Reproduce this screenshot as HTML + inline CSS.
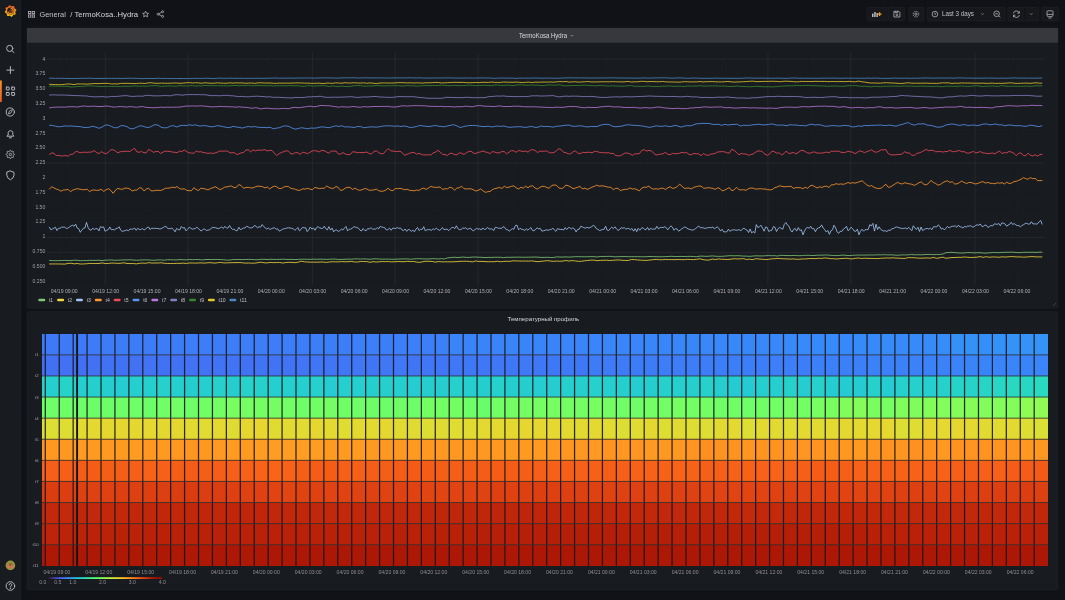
<!DOCTYPE html>
<html><head><meta charset="utf-8"><style>html,body{margin:0;padding:0;width:1065px;height:600px;overflow:hidden;background:#111217}</style></head><body><svg width="1065" height="600" viewBox="0 0 1065 600" style="position:absolute;left:0;top:0;display:block;will-change:transform" font-family='"Liberation Sans", sans-serif'><rect x="0" y="0" width="1065" height="600" fill="#111217"/><rect x="0" y="0" width="21" height="600" fill="#181b1f"/><rect x="19.6" y="0" width="1.4" height="600" fill="#1b1e22"/><path d="M15.88,11.00 L15.60,11.33 L15.37,11.63 L15.26,11.93 L15.27,12.25 L15.37,12.62 L15.51,13.03 L15.61,13.47 L15.61,13.89 L15.46,14.25 L15.18,14.51 L14.78,14.67 L14.34,14.74 L13.90,14.77 L13.53,14.82 L13.24,14.95 L13.02,15.18 L12.83,15.52 L12.63,15.91 L12.40,16.29 L12.10,16.59 L11.74,16.74 L11.35,16.72 L10.96,16.55 L10.60,16.28 L10.27,16.00 L9.97,15.77 L9.67,15.66 L9.35,15.67 L8.98,15.77 L8.57,15.91 L8.13,16.01 L7.71,16.01 L7.35,15.86 L7.09,15.58 L6.93,15.18 L6.86,14.74 L6.83,14.30 L6.78,13.93 L6.65,13.64 L6.42,13.42 L6.08,13.23 L5.69,13.03 L5.31,12.80 L5.01,12.50 L4.86,12.14 L4.88,11.75 L5.05,11.36 L5.32,11.00 L5.60,10.67 L5.83,10.37 L5.94,10.07 L5.93,9.75 L5.83,9.38 L5.69,8.97 L5.59,8.53 L5.59,8.11 L5.74,7.75 L6.02,7.49 L6.42,7.33 L6.86,7.26 L7.30,7.23 L7.67,7.18 L7.96,7.05 L8.18,6.82 L8.37,6.48 L8.57,6.09 L8.80,5.71 L9.10,5.41 L9.46,5.26 L9.85,5.28 L10.24,5.45 L10.60,5.72 L10.93,6.00 L11.23,6.23 L11.53,6.34 L11.85,6.33 L12.22,6.23 L12.63,6.09 L13.07,5.99 L13.49,5.99 L13.85,6.14 L14.11,6.42 L14.27,6.82 L14.34,7.26 L14.37,7.70 L14.42,8.07 L14.55,8.36 L14.78,8.58 L15.12,8.77 L15.51,8.97 L15.89,9.20 L16.19,9.50 L16.34,9.86 L16.32,10.25 L16.15,10.64 Z" fill="url(#lg)"/><circle cx="10.6" cy="11" r="3.5" fill="#1c1a1c"/><path d="M10.6,8.3 A2.7,2.7 0 1 1 7.9,11.6" stroke="#f28a24" stroke-width="1.2" fill="none"/><circle cx="10.8" cy="11.2" r="1.1" fill="none" stroke="#d8641e" stroke-width="0.7"/><g stroke="#b4b5bc" stroke-width="1" fill="none" stroke-linecap="round" stroke-linejoin="round"><circle cx="9.7" cy="48.4" r="3.1"/><line x1="12" y1="50.7" x2="14" y2="52.7"/><line x1="10.4" y1="66.6" x2="10.4" y2="73.6"/><line x1="6.9" y1="70.1" x2="13.9" y2="70.1"/><rect x="6.3" y="87.1" width="2.9" height="2.9" rx="0.3"/><rect x="11.7" y="87.1" width="2.9" height="2.9" rx="0.3"/><rect x="6.3" y="92.5" width="2.9" height="2.9" rx="0.3"/><rect x="11.7" y="92.5" width="2.9" height="2.9" rx="0.3"/><circle cx="10.3" cy="112" r="4.1"/><path d="M12.3,110 L11.1,112.8 L8.3,114 L9.5,111.2 Z" stroke-width="0.8"/><path d="M7.2,136.2 L13.8,136.2 L12.8,134.8 L12.8,132.2 A2.5,2.5 0 0 0 8.2,132.2 L8.2,134.8 Z"/><path d="M9.4,137.8 L11.4,137.8"/></g><path d="M14.50,154.40 L14.30,154.79 L13.83,155.10 L13.34,155.32 L13.07,155.55 L13.10,155.90 L13.29,156.40 L13.41,156.95 L13.27,157.37 L12.85,157.51 L12.30,157.39 L11.80,157.20 L11.45,157.17 L11.22,157.44 L11.00,157.93 L10.69,158.40 L10.30,158.60 L9.91,158.40 L9.60,157.93 L9.38,157.44 L9.15,157.17 L8.80,157.20 L8.30,157.39 L7.75,157.51 L7.33,157.37 L7.19,156.95 L7.31,156.40 L7.50,155.90 L7.53,155.55 L7.26,155.32 L6.77,155.10 L6.30,154.79 L6.10,154.40 L6.30,154.01 L6.77,153.70 L7.26,153.48 L7.53,153.25 L7.50,152.90 L7.31,152.40 L7.19,151.85 L7.33,151.43 L7.75,151.29 L8.30,151.41 L8.80,151.60 L9.15,151.63 L9.38,151.36 L9.60,150.87 L9.91,150.40 L10.30,150.20 L10.69,150.40 L11.00,150.87 L11.22,151.36 L11.45,151.63 L11.80,151.60 L12.30,151.41 L12.85,151.29 L13.27,151.43 L13.41,151.85 L13.29,152.40 L13.10,152.90 L13.07,153.25 L13.34,153.48 L13.83,153.70 L14.30,154.01 Z" stroke="#b4b5bc" stroke-width="0.9" fill="none"/><rect x="9.2" y="153.3" width="2.2" height="2.2" rx="0.6" stroke="#b4b5bc" stroke-width="0.8" fill="none"/><g stroke="#b4b5bc" stroke-width="1" fill="none" stroke-linecap="round" stroke-linejoin="round"><path d="M10.4,171 L14,172.4 L14,175.2 Q13.7,178.3 10.4,179.8 Q7.1,178.3 6.8,175.2 L6.8,172.4 Z"/><circle cx="10.4" cy="586" r="4.3"/><path d="M9.1,584.9 A1.35,1.35 0 1 1 10.7,586.2 L10.4,587"/><circle cx="10.4" cy="588.3" r="0.25"/></g><defs><linearGradient id="ag" x1="0" x2="0" y1="0" y2="1"><stop offset="0" stop-color="#f79520"/><stop offset="1" stop-color="#f05a28"/></linearGradient></defs><rect x="0" y="80.5" width="1.8" height="21.5" fill="url(#ag)"/><circle cx="10.4" cy="565.4" r="4.8" fill="#8d9a3a"/><circle cx="10.4" cy="565.6" r="3.4" fill="#c0744a"/><circle cx="10.4" cy="564.4" r="1.3" fill="#4e7a34"/><circle cx="8.4" cy="567" r="1.1" fill="#e27060"/><circle cx="12.4" cy="567" r="1.1" fill="#e27060"/><g stroke="#b4b5bc" stroke-width="0.8" fill="none"><rect x="28.4" y="11.4" width="2.4" height="2.3"/><rect x="32.2" y="11.4" width="2.4" height="2.3"/><rect x="28.4" y="14.9" width="2.4" height="2.3"/><rect x="32.2" y="14.9" width="2.4" height="2.3"/></g><text x="39.5" y="16.7" font-size="7.8" fill="#c0c1c8" textLength="26.3" lengthAdjust="spacingAndGlyphs">General</text><text x="70.3" y="16.7" font-size="7.8" fill="#d4d5dc" textLength="67.7" lengthAdjust="spacingAndGlyphs">/ TermoKosa..Hydra</text><path d="M145.6,11.3 L146.5,13.2 L148.6,13.4 L147.0,14.8 L147.5,16.8 L145.6,15.8 L143.7,16.8 L144.2,14.8 L142.6,13.4 L144.7,13.2 Z" stroke="#b4b5bc" stroke-width="0.8" fill="none"/><g stroke="#b4b5bc" stroke-width="0.8" fill="none"><circle cx="158.2" cy="14.2" r="1"/><circle cx="162.6" cy="11.7" r="1"/><circle cx="162.6" cy="16.4" r="1"/><line x1="159.1" y1="13.7" x2="161.7" y2="12.2"/><line x1="159.1" y1="14.7" x2="161.7" y2="15.9"/></g><rect x="867" y="7.3" width="20.200000000000045" height="13.599999999999998" rx="1" fill="#16181c" stroke="#24262c" stroke-width="0.5"/><rect x="888.6" y="7.3" width="16.0" height="13.599999999999998" rx="1" fill="#16181c" stroke="#24262c" stroke-width="0.5"/><rect x="908.8" y="7.3" width="15.0" height="13.599999999999998" rx="1" fill="#16181c" stroke="#24262c" stroke-width="0.5"/><rect x="927.4" y="7.3" width="77.80000000000007" height="13.599999999999998" rx="1" fill="#16181c" stroke="#24262c" stroke-width="0.5"/><rect x="1007.8" y="7.3" width="30.90000000000009" height="13.599999999999998" rx="1" fill="#16181c" stroke="#24262c" stroke-width="0.5"/><rect x="1042" y="7.3" width="16.40000000000009" height="13.599999999999998" rx="1" fill="#16181c" stroke="#24262c" stroke-width="0.5"/><g fill="#b8b9c0"><rect x="872" y="13.6" width="1.5" height="3.4"/><rect x="874.2" y="12" width="1.5" height="5"/><rect x="876.4" y="13" width="1.5" height="4"/></g><path d="M879.6,12.2 L879.6,16 M877.7,14.1 L881.5,14.1" stroke="#f59a23" stroke-width="1.2"/><g stroke="#b4b5bc" stroke-width="0.8" fill="none"><path d="M893.9,11.3 L898.8,11.3 L899.9,12.4 L899.9,17 L893.9,17 Z"/><circle cx="896.9" cy="14.9" r="0.9"/><path d="M895,11.3 L895,12.6 L897.8,12.6 L897.8,11.3"/></g><g stroke="#b4b5bc" stroke-width="0.8" fill="none"><circle cx="915.9" cy="14.2" r="1.1"/><circle cx="915.9" cy="14.2" r="2.8" stroke-dasharray="1.4 0.8"/></g><g stroke="#b4b5bc" stroke-width="0.8" fill="none"><circle cx="934.9" cy="14.1" r="2.8"/><path d="M934.9,12.6 L934.9,14.3 L935.9,14.3"/></g><text x="942" y="16.4" font-size="6.3" fill="#c0c1c8" textLength="31.9" lengthAdjust="spacingAndGlyphs">Last 3 days</text><path d="M981.2,13.4 L982.4,14.6 L983.6,13.4" stroke="#9fa0a8" stroke-width="0.7" fill="none"/><g stroke="#b4b5bc" stroke-width="0.8" fill="none"><circle cx="996.6" cy="13.8" r="2.8"/><line x1="998.6" y1="15.8" x2="1000.2" y2="17.4"/><line x1="995.2" y1="13.8" x2="998" y2="13.8"/></g><g stroke="#b4b5bc" stroke-width="0.8" fill="none"><path d="M1013.4,13.4 A3,3 0 0 1 1019.2,13"/><path d="M1019.4,15 A3,3 0 0 1 1013.6,15.4"/><path d="M1019.3,11.2 L1019.3,13.2 L1017.4,13.2"/><path d="M1013.5,17.2 L1013.5,15.2 L1015.4,15.2"/></g><line x1="1024.6" y1="7.5" x2="1024.6" y2="20.7" stroke="#111217" stroke-width="0.8"/><path d="M1030,13.4 L1031.2,14.6 L1032.4,13.4" stroke="#9fa0a8" stroke-width="0.7" fill="none"/><g stroke="#b4b5bc" stroke-width="0.8" fill="none"><path d="M1047,15.2 L1047,11.6 Q1047,10.8 1047.8,10.8 L1052.2,10.8 Q1053,10.8 1053,11.6 L1053,15.2 Q1053,16.6 1051.6,16.6 L1048.4,16.6 Q1047,16.6 1047,15.2 Z"/><line x1="1047.2" y1="14.4" x2="1052.8" y2="14.4"/><line x1="1048.4" y1="18" x2="1051.6" y2="18"/></g><rect x="27" y="28" width="1031" height="280.3" rx="1.2" fill="#181b1f" stroke="#202227" stroke-width="0.6"/><rect x="27" y="28" width="1031" height="14.7" fill="#37383d"/><text x="519" y="37.6" font-size="6.3" fill="#d8d9de" textLength="48" lengthAdjust="spacingAndGlyphs">TermoKosa Hydra</text><path d="M570.6,35 L571.9,36.3 L573.2,35" stroke="#a0a1a8" stroke-width="0.7" fill="none"/><line x1="47.0" y1="59.00" x2="1044.0" y2="59.00" stroke="#2a2c31" stroke-width="0.8"/><line x1="47.0" y1="73.88" x2="1044.0" y2="73.88" stroke="#1b1d22" stroke-width="0.8"/><line x1="47.0" y1="88.75" x2="1044.0" y2="88.75" stroke="#1b1d22" stroke-width="0.8"/><line x1="47.0" y1="103.62" x2="1044.0" y2="103.62" stroke="#1b1d22" stroke-width="0.8"/><line x1="47.0" y1="118.50" x2="1044.0" y2="118.50" stroke="#1b1d22" stroke-width="0.8"/><line x1="47.0" y1="133.38" x2="1044.0" y2="133.38" stroke="#1b1d22" stroke-width="0.8"/><line x1="47.0" y1="148.25" x2="1044.0" y2="148.25" stroke="#1b1d22" stroke-width="0.8"/><line x1="47.0" y1="163.12" x2="1044.0" y2="163.12" stroke="#2a2c31" stroke-width="0.8"/><line x1="47.0" y1="178.00" x2="1044.0" y2="178.00" stroke="#1b1d22" stroke-width="0.8"/><line x1="47.0" y1="192.88" x2="1044.0" y2="192.88" stroke="#1b1d22" stroke-width="0.8"/><line x1="47.0" y1="207.75" x2="1044.0" y2="207.75" stroke="#1b1d22" stroke-width="0.8"/><line x1="47.0" y1="222.62" x2="1044.0" y2="222.62" stroke="#1b1d22" stroke-width="0.8"/><line x1="47.0" y1="237.50" x2="1044.0" y2="237.50" stroke="#2a2c31" stroke-width="0.8"/><line x1="47.0" y1="252.38" x2="1044.0" y2="252.38" stroke="#2a2c31" stroke-width="0.8"/><line x1="47.0" y1="267.25" x2="1044.0" y2="267.25" stroke="#1b1d22" stroke-width="0.8"/><line x1="47.0" y1="282.12" x2="1044.0" y2="282.12" stroke="#1b1d22" stroke-width="0.8"/><line x1="63.80" y1="52.5" x2="63.80" y2="285" stroke="#1b1d22" stroke-width="0.8"/><line x1="105.22" y1="52.5" x2="105.22" y2="285" stroke="#2a2c31" stroke-width="0.8"/><line x1="146.64" y1="52.5" x2="146.64" y2="285" stroke="#1b1d22" stroke-width="0.8"/><line x1="188.06" y1="52.5" x2="188.06" y2="285" stroke="#2a2c31" stroke-width="0.8"/><line x1="229.48" y1="52.5" x2="229.48" y2="285" stroke="#1b1d22" stroke-width="0.8"/><line x1="270.90" y1="52.5" x2="270.90" y2="285" stroke="#1b1d22" stroke-width="0.8"/><line x1="312.32" y1="52.5" x2="312.32" y2="285" stroke="#2a2c31" stroke-width="0.8"/><line x1="353.74" y1="52.5" x2="353.74" y2="285" stroke="#1b1d22" stroke-width="0.8"/><line x1="395.16" y1="52.5" x2="395.16" y2="285" stroke="#2a2c31" stroke-width="0.8"/><line x1="436.58" y1="52.5" x2="436.58" y2="285" stroke="#1b1d22" stroke-width="0.8"/><line x1="478.00" y1="52.5" x2="478.00" y2="285" stroke="#2a2c31" stroke-width="0.8"/><line x1="519.42" y1="52.5" x2="519.42" y2="285" stroke="#1b1d22" stroke-width="0.8"/><line x1="560.84" y1="52.5" x2="560.84" y2="285" stroke="#1b1d22" stroke-width="0.8"/><line x1="602.26" y1="52.5" x2="602.26" y2="285" stroke="#1b1d22" stroke-width="0.8"/><line x1="643.68" y1="52.5" x2="643.68" y2="285" stroke="#1b1d22" stroke-width="0.8"/><line x1="685.10" y1="52.5" x2="685.10" y2="285" stroke="#1b1d22" stroke-width="0.8"/><line x1="726.52" y1="52.5" x2="726.52" y2="285" stroke="#1b1d22" stroke-width="0.8"/><line x1="767.94" y1="52.5" x2="767.94" y2="285" stroke="#2a2c31" stroke-width="0.8"/><line x1="809.36" y1="52.5" x2="809.36" y2="285" stroke="#1b1d22" stroke-width="0.8"/><line x1="850.78" y1="52.5" x2="850.78" y2="285" stroke="#2a2c31" stroke-width="0.8"/><line x1="892.20" y1="52.5" x2="892.20" y2="285" stroke="#1b1d22" stroke-width="0.8"/><line x1="933.62" y1="52.5" x2="933.62" y2="285" stroke="#1b1d22" stroke-width="0.8"/><line x1="975.04" y1="52.5" x2="975.04" y2="285" stroke="#2a2c31" stroke-width="0.8"/><line x1="1016.46" y1="52.5" x2="1016.46" y2="285" stroke="#1b1d22" stroke-width="0.8"/><text x="45.3" y="60.60" font-size="5.1" fill="#a0a1a8" text-anchor="end">4</text><text x="45.3" y="75.40" font-size="5.1" fill="#a0a1a8" text-anchor="end">3.75</text><text x="45.3" y="90.20" font-size="5.1" fill="#a0a1a8" text-anchor="end">3.50</text><text x="45.3" y="105.00" font-size="5.1" fill="#a0a1a8" text-anchor="end">3.25</text><text x="45.3" y="119.80" font-size="5.1" fill="#a0a1a8" text-anchor="end">3</text><text x="45.3" y="134.60" font-size="5.1" fill="#a0a1a8" text-anchor="end">2.75</text><text x="45.3" y="149.40" font-size="5.1" fill="#a0a1a8" text-anchor="end">2.50</text><text x="45.3" y="164.20" font-size="5.1" fill="#a0a1a8" text-anchor="end">2.25</text><text x="45.3" y="179.00" font-size="5.1" fill="#a0a1a8" text-anchor="end">2</text><text x="45.3" y="193.80" font-size="5.1" fill="#a0a1a8" text-anchor="end">1.75</text><text x="45.3" y="208.60" font-size="5.1" fill="#a0a1a8" text-anchor="end">1.50</text><text x="45.3" y="223.40" font-size="5.1" fill="#a0a1a8" text-anchor="end">1.25</text><text x="45.3" y="238.20" font-size="5.1" fill="#a0a1a8" text-anchor="end">1</text><text x="45.3" y="253.00" font-size="5.1" fill="#a0a1a8" text-anchor="end">0.750</text><text x="45.3" y="267.80" font-size="5.1" fill="#a0a1a8" text-anchor="end">0.500</text><text x="45.3" y="282.60" font-size="5.1" fill="#a0a1a8" text-anchor="end">0.250</text><text x="64.20" y="292.8" font-size="5.1" fill="#aeafb6" text-anchor="middle">04/19 09:00</text><text x="105.62" y="292.8" font-size="5.1" fill="#aeafb6" text-anchor="middle">04/19 12:00</text><text x="147.04" y="292.8" font-size="5.1" fill="#aeafb6" text-anchor="middle">04/19 15:00</text><text x="188.46" y="292.8" font-size="5.1" fill="#aeafb6" text-anchor="middle">04/19 18:00</text><text x="229.88" y="292.8" font-size="5.1" fill="#aeafb6" text-anchor="middle">04/19 21:00</text><text x="271.30" y="292.8" font-size="5.1" fill="#aeafb6" text-anchor="middle">04/20 00:00</text><text x="312.72" y="292.8" font-size="5.1" fill="#aeafb6" text-anchor="middle">04/20 03:00</text><text x="354.14" y="292.8" font-size="5.1" fill="#aeafb6" text-anchor="middle">04/20 06:00</text><text x="395.56" y="292.8" font-size="5.1" fill="#aeafb6" text-anchor="middle">04/20 09:00</text><text x="436.98" y="292.8" font-size="5.1" fill="#aeafb6" text-anchor="middle">04/20 12:00</text><text x="478.40" y="292.8" font-size="5.1" fill="#aeafb6" text-anchor="middle">04/20 15:00</text><text x="519.82" y="292.8" font-size="5.1" fill="#aeafb6" text-anchor="middle">04/20 18:00</text><text x="561.24" y="292.8" font-size="5.1" fill="#aeafb6" text-anchor="middle">04/20 21:00</text><text x="602.66" y="292.8" font-size="5.1" fill="#aeafb6" text-anchor="middle">04/21 00:00</text><text x="644.08" y="292.8" font-size="5.1" fill="#aeafb6" text-anchor="middle">04/21 03:00</text><text x="685.50" y="292.8" font-size="5.1" fill="#aeafb6" text-anchor="middle">04/21 06:00</text><text x="726.92" y="292.8" font-size="5.1" fill="#aeafb6" text-anchor="middle">04/21 09:00</text><text x="768.34" y="292.8" font-size="5.1" fill="#aeafb6" text-anchor="middle">04/21 12:00</text><text x="809.76" y="292.8" font-size="5.1" fill="#aeafb6" text-anchor="middle">04/21 15:00</text><text x="851.18" y="292.8" font-size="5.1" fill="#aeafb6" text-anchor="middle">04/21 18:00</text><text x="892.60" y="292.8" font-size="5.1" fill="#aeafb6" text-anchor="middle">04/21 21:00</text><text x="934.02" y="292.8" font-size="5.1" fill="#aeafb6" text-anchor="middle">04/22 00:00</text><text x="975.44" y="292.8" font-size="5.1" fill="#aeafb6" text-anchor="middle">04/22 03:00</text><text x="1016.86" y="292.8" font-size="5.1" fill="#aeafb6" text-anchor="middle">04/22 06:00</text><g fill="none" stroke-width="0.9" stroke-linejoin="round"><path d="M49.2,260.41 L52.3,260.58 L55.4,260.70 L58.5,260.61 L61.7,260.51 L64.8,260.35 L67.9,260.55 L71.0,260.56 L74.1,260.21 L77.2,260.29 L80.3,260.66 L83.4,260.61 L86.6,260.55 L89.7,260.30 L92.8,260.42 L95.9,260.37 L99.0,260.21 L102.1,260.58 L105.2,260.22 L108.4,260.05 L111.5,259.97 L114.6,260.26 L117.7,260.16 L120.8,260.09 L123.9,259.88 L127.0,259.96 L130.1,259.77 L133.3,260.08 L136.4,260.23 L139.5,260.18 L142.6,259.89 L145.7,259.86 L148.8,260.01 L151.9,260.20 L155.0,260.26 L158.2,259.89 L161.3,259.99 L164.4,260.16 L167.5,259.73 L170.6,259.77 L173.7,259.90 L176.8,259.89 L180.0,259.61 L183.1,259.76 L186.2,259.87 L189.3,259.52 L192.4,259.73 L195.5,259.54 L198.6,259.57 L201.7,259.95 L204.9,259.63 L208.0,259.43 L211.1,259.64 L214.2,259.56 L217.3,259.48 L220.4,259.58 L223.5,259.76 L226.7,260.08 L229.8,260.08 L232.9,259.55 L236.0,259.63 L239.1,259.50 L242.2,259.60 L245.3,259.49 L248.4,259.35 L251.6,259.52 L254.7,259.67 L257.8,259.77 L260.9,259.33 L264.0,259.26 L267.1,259.53 L270.2,259.27 L273.3,259.40 L276.5,259.41 L279.6,259.38 L282.7,259.18 L285.8,259.36 L288.9,259.44 L292.0,259.37 L295.1,259.58 L298.3,259.38 L301.4,259.23 L304.5,259.22 L307.6,259.27 L310.7,259.34 L313.8,259.07 L316.9,259.32 L320.0,259.12 L323.2,259.27 L326.3,259.42 L329.4,259.20 L332.5,259.10 L335.6,259.10 L338.7,259.48 L341.8,259.36 L345.0,259.26 L348.1,259.06 L351.2,259.26 L354.3,258.89 L357.4,258.88 L360.5,259.04 L363.6,258.88 L366.7,259.00 L369.9,259.30 L373.0,258.91 L376.1,258.85 L379.2,259.00 L382.3,259.19 L385.4,259.08 L388.5,259.13 L391.6,259.27 L394.8,259.24 L397.9,259.09 L401.0,258.94 L404.1,258.96 L407.2,258.85 L410.3,259.22 L413.4,258.98 L416.6,258.76 L419.7,258.69 L422.8,258.93 L425.9,258.94 L429.0,258.96 L432.1,258.65 L435.2,258.79 L438.3,258.98 L441.5,258.64 L444.6,258.95 L447.7,257.83 L450.8,257.63 L453.9,257.19 L457.0,257.51 L460.1,257.33 L463.3,257.05 L466.4,257.45 L469.5,257.36 L472.6,257.08 L475.7,257.04 L478.8,257.25 L481.9,257.32 L485.0,257.61 L488.2,257.34 L491.3,257.44 L494.4,257.27 L497.5,257.25 L500.6,257.27 L503.7,257.59 L506.8,257.26 L509.9,257.34 L513.1,257.24 L516.2,257.14 L519.3,257.15 L522.4,257.26 L525.5,257.26 L528.6,257.19 L531.7,257.11 L534.9,257.07 L538.0,257.15 L541.1,257.45 L544.2,257.36 L547.3,257.27 L550.4,257.49 L553.5,257.48 L556.6,256.89 L559.8,257.02 L562.9,257.05 L566.0,256.88 L569.1,257.12 L572.2,256.89 L575.3,256.73 L578.4,256.65 L581.6,256.71 L584.7,256.76 L587.8,256.76 L590.9,256.61 L594.0,256.66 L597.1,256.95 L600.2,256.49 L603.3,256.47 L606.5,256.44 L609.6,256.33 L612.7,256.52 L615.8,256.90 L618.9,256.63 L622.0,256.64 L625.1,256.53 L628.2,256.76 L631.4,256.69 L634.5,256.68 L637.6,256.71 L640.7,256.71 L643.8,256.82 L646.9,256.68 L650.0,256.46 L653.2,256.64 L656.3,256.68 L659.4,256.74 L662.5,256.76 L665.6,256.60 L668.7,256.50 L671.8,256.26 L674.9,256.67 L678.1,256.49 L681.2,256.43 L684.3,256.53 L687.4,256.43 L690.5,256.35 L693.6,256.58 L696.7,256.70 L699.9,256.12 L703.0,256.17 L706.1,256.38 L709.2,256.18 L712.3,255.94 L715.4,256.22 L718.5,256.37 L721.6,256.33 L724.8,256.14 L727.9,255.83 L731.0,255.67 L734.1,255.83 L737.2,255.68 L740.3,255.84 L743.4,256.08 L746.5,256.14 L749.7,256.37 L752.8,256.04 L755.9,255.82 L759.0,255.91 L762.1,255.94 L765.2,255.80 L768.3,255.57 L771.5,255.71 L774.6,255.67 L777.7,256.00 L780.8,255.26 L783.9,255.53 L787.0,255.56 L790.1,255.61 L793.2,255.48 L796.4,255.58 L799.5,255.70 L802.6,255.57 L805.7,255.29 L808.8,255.32 L811.9,255.51 L815.0,255.43 L818.2,255.13 L821.3,255.16 L824.4,255.03 L827.5,255.03 L830.6,255.30 L833.7,255.47 L836.8,255.61 L839.9,255.42 L843.1,255.04 L846.2,255.42 L849.3,255.57 L852.4,255.39 L855.5,255.18 L858.6,255.06 L861.7,255.08 L864.8,255.05 L868.0,255.02 L871.1,254.95 L874.2,255.03 L877.3,254.77 L880.4,254.92 L883.5,254.69 L886.6,254.79 L889.8,254.90 L892.9,254.89 L896.0,255.22 L899.1,255.15 L902.2,254.87 L905.3,254.94 L908.4,254.83 L911.5,254.46 L914.7,254.83 L917.8,254.69 L920.9,254.85 L924.0,254.59 L927.1,254.51 L930.2,254.48 L933.3,254.64 L936.5,254.57 L939.6,254.51 L942.7,254.07 L945.8,252.75 L948.9,252.47 L952.0,252.34 L955.1,252.72 L958.2,252.88 L961.4,253.06 L964.5,252.91 L967.6,252.57 L970.7,252.65 L973.8,252.86 L976.9,252.75 L980.0,252.70 L983.1,253.04 L986.3,253.08 L989.4,252.84 L992.5,252.56 L995.6,252.51 L998.7,252.74 L1001.8,252.42 L1004.9,252.28 L1008.1,252.29 L1011.2,252.14 L1014.3,252.34 L1017.4,252.60 L1020.5,252.59 L1023.6,252.32 L1026.7,252.26 L1029.8,252.34 L1033.0,252.23 L1036.1,252.42 L1039.2,252.15 L1042.3,252.20" stroke="#80c876" stroke-opacity="0.9"/><path d="M49.2,263.95 L52.3,263.94 L55.4,263.94 L58.5,263.95 L61.7,264.03 L64.8,264.11 L67.9,263.48 L71.0,263.21 L74.1,263.86 L77.2,263.51 L80.3,264.02 L83.4,263.95 L86.6,263.76 L89.7,263.40 L92.8,263.49 L95.9,263.55 L99.0,263.47 L102.1,262.92 L105.2,263.57 L108.4,263.47 L111.5,263.08 L114.6,263.12 L117.7,263.40 L120.8,263.25 L123.9,262.79 L127.0,263.47 L130.1,263.55 L133.3,263.55 L136.4,263.87 L139.5,263.30 L142.6,263.05 L145.7,263.26 L148.8,262.68 L151.9,263.03 L155.0,263.03 L158.2,262.98 L161.3,262.79 L164.4,263.29 L167.5,263.44 L170.6,263.54 L173.7,263.50 L176.8,263.32 L180.0,263.37 L183.1,263.14 L186.2,263.44 L189.3,262.96 L192.4,263.00 L195.5,263.13 L198.6,262.93 L201.7,262.90 L204.9,263.11 L208.0,262.70 L211.1,262.70 L214.2,263.13 L217.3,262.79 L220.4,262.39 L223.5,262.89 L226.7,262.87 L229.8,262.73 L232.9,262.70 L236.0,262.60 L239.1,262.58 L242.2,262.74 L245.3,263.17 L248.4,262.98 L251.6,263.19 L254.7,263.14 L257.8,262.70 L260.9,262.16 L264.0,262.79 L267.1,262.93 L270.2,262.38 L273.3,262.63 L276.5,262.57 L279.6,262.49 L282.7,263.01 L285.8,262.53 L288.9,262.34 L292.0,262.39 L295.1,262.68 L298.3,262.12 L301.4,261.22 L304.5,261.81 L307.6,262.07 L310.7,262.16 L313.8,262.12 L316.9,262.24 L320.0,262.06 L323.2,262.01 L326.3,262.45 L329.4,261.98 L332.5,261.72 L335.6,261.83 L338.7,261.85 L341.8,261.56 L345.0,261.80 L348.1,261.68 L351.2,261.41 L354.3,261.89 L357.4,262.05 L360.5,261.52 L363.6,261.55 L366.7,261.55 L369.9,262.30 L373.0,261.65 L376.1,262.05 L379.2,261.75 L382.3,261.55 L385.4,261.65 L388.5,261.55 L391.6,261.89 L394.8,261.71 L397.9,261.49 L401.0,261.70 L404.1,261.71 L407.2,261.25 L410.3,261.60 L413.4,261.48 L416.6,262.06 L419.7,262.37 L422.8,261.70 L425.9,261.26 L429.0,261.33 L432.1,261.38 L435.2,262.11 L438.3,261.61 L441.5,261.81 L444.6,261.83 L447.7,261.84 L450.8,261.80 L453.9,261.76 L457.0,261.61 L460.1,261.34 L463.3,261.30 L466.4,261.23 L469.5,261.47 L472.6,261.88 L475.7,260.96 L478.8,261.50 L481.9,261.38 L485.0,261.59 L488.2,261.75 L491.3,261.68 L494.4,261.74 L497.5,261.24 L500.6,261.80 L503.7,261.42 L506.8,261.27 L509.9,261.40 L513.1,260.75 L516.2,260.97 L519.3,260.96 L522.4,261.11 L525.5,261.03 L528.6,261.13 L531.7,260.86 L534.9,261.33 L538.0,261.71 L541.1,261.28 L544.2,261.03 L547.3,260.61 L550.4,261.03 L553.5,261.35 L556.6,261.06 L559.8,261.27 L562.9,261.03 L566.0,260.54 L569.1,261.06 L572.2,260.55 L575.3,260.98 L578.4,261.34 L581.6,261.25 L584.7,260.79 L587.8,260.46 L590.9,260.14 L594.0,260.11 L597.1,260.66 L600.2,260.41 L603.3,260.26 L606.5,260.21 L609.6,260.49 L612.7,260.31 L615.8,260.10 L618.9,259.91 L622.0,260.26 L625.1,260.41 L628.2,260.44 L631.4,259.54 L634.5,259.60 L637.6,259.98 L640.7,260.17 L643.8,260.38 L646.9,260.37 L650.0,259.99 L653.2,259.69 L656.3,259.38 L659.4,259.73 L662.5,259.72 L665.6,259.43 L668.7,259.67 L671.8,259.57 L674.9,259.70 L678.1,259.49 L681.2,259.61 L684.3,259.68 L687.4,259.31 L690.5,259.52 L693.6,259.65 L696.7,259.32 L699.9,258.75 L703.0,259.60 L706.1,260.07 L709.2,260.04 L712.3,259.03 L715.4,259.62 L718.5,258.88 L721.6,259.25 L724.8,259.39 L727.9,259.50 L731.0,259.14 L734.1,258.76 L737.2,258.93 L740.3,258.85 L743.4,258.58 L746.5,259.51 L749.7,259.17 L752.8,259.64 L755.9,258.70 L759.0,259.01 L762.1,259.19 L765.2,259.59 L768.3,259.42 L771.5,258.84 L774.6,258.74 L777.7,258.38 L780.8,258.62 L783.9,258.85 L787.0,258.90 L790.1,259.10 L793.2,258.89 L796.4,259.30 L799.5,259.24 L802.6,258.94 L805.7,258.90 L808.8,258.61 L811.9,258.51 L815.0,258.63 L818.2,258.29 L821.3,258.41 L824.4,257.99 L827.5,258.15 L830.6,258.67 L833.7,258.68 L836.8,259.03 L839.9,258.63 L843.1,258.47 L846.2,258.20 L849.3,258.71 L852.4,258.88 L855.5,258.28 L858.6,258.03 L861.7,258.47 L864.8,258.20 L868.0,258.35 L871.1,258.40 L874.2,258.44 L877.3,258.61 L880.4,258.24 L883.5,258.17 L886.6,257.91 L889.8,258.09 L892.9,257.78 L896.0,258.10 L899.1,258.13 L902.2,258.41 L905.3,258.37 L908.4,257.56 L911.5,257.69 L914.7,257.74 L917.8,258.11 L920.9,258.19 L924.0,258.02 L927.1,257.93 L930.2,258.15 L933.3,257.41 L936.5,258.30 L939.6,257.83 L942.7,257.16 L945.8,258.26 L948.9,257.94 L952.0,257.52 L955.1,257.56 L958.2,257.29 L961.4,257.33 L964.5,256.99 L967.6,257.26 L970.7,257.51 L973.8,257.35 L976.9,257.20 L980.0,256.59 L983.1,257.35 L986.3,256.73 L989.4,257.22 L992.5,256.99 L995.6,256.96 L998.7,257.29 L1001.8,256.80 L1004.9,257.05 L1008.1,256.83 L1011.2,256.56 L1014.3,256.74 L1017.4,256.96 L1020.5,256.92 L1023.6,257.17 L1026.7,256.99 L1029.8,256.68 L1033.0,256.60 L1036.1,256.93 L1039.2,256.89 L1042.3,256.95" stroke="#f0d840" stroke-opacity="0.9"/><path d="M49.2,226.88 L50.8,229.74 L52.3,229.04 L53.9,228.20 L55.4,227.30 L57.0,230.60 L58.5,228.32 L60.1,228.23 L61.6,227.21 L63.2,227.12 L64.7,227.11 L66.3,228.38 L67.8,228.18 L69.4,227.01 L71.0,225.95 L72.5,225.18 L74.1,226.25 L75.6,224.18 L77.2,228.00 L78.7,228.63 L80.3,232.30 L81.8,230.20 L83.4,228.21 L84.9,228.03 L86.5,222.38 L88.1,227.59 L89.6,229.88 L91.2,230.11 L92.7,228.28 L94.3,229.45 L95.8,228.64 L97.4,228.71 L98.9,230.91 L100.5,226.63 L102.0,227.43 L103.6,226.90 L105.1,231.29 L106.7,230.27 L108.3,229.61 L109.8,226.94 L111.4,229.78 L112.9,229.43 L114.5,229.99 L116.0,228.56 L117.6,228.34 L119.1,226.73 L120.7,230.14 L122.2,231.45 L123.8,230.94 L125.4,230.52 L126.9,230.00 L128.5,230.76 L130.0,228.95 L131.6,229.26 L133.1,228.98 L134.7,228.11 L136.2,230.34 L137.8,228.27 L139.3,229.44 L140.9,229.49 L142.4,228.47 L144.0,230.05 L145.6,229.00 L147.1,227.61 L148.7,227.13 L150.2,229.66 L151.8,227.93 L153.3,228.68 L154.9,228.16 L156.4,228.57 L158.0,228.39 L159.5,229.02 L161.1,228.73 L162.7,227.80 L164.2,226.88 L165.8,226.21 L167.3,228.17 L168.9,228.76 L170.4,228.43 L172.0,228.20 L173.5,229.64 L175.1,231.80 L176.6,228.48 L178.2,229.50 L179.7,230.01 L181.3,226.51 L182.9,228.15 L184.4,227.55 L186.0,230.87 L187.5,229.31 L189.1,227.39 L190.6,228.07 L192.2,229.22 L193.7,228.78 L195.3,228.56 L196.8,227.26 L198.4,228.44 L200.0,230.27 L201.5,230.99 L203.1,229.19 L204.6,228.88 L206.2,230.53 L207.7,230.14 L209.3,229.83 L210.8,229.01 L212.4,227.19 L213.9,227.59 L215.5,227.72 L217.0,228.28 L218.6,228.61 L220.2,227.76 L221.7,227.04 L223.3,228.55 L224.8,226.39 L226.4,227.98 L227.9,228.12 L229.5,225.46 L231.0,228.00 L232.6,229.51 L234.1,229.09 L235.7,230.67 L237.3,230.58 L238.8,227.27 L240.4,229.70 L241.9,228.98 L243.5,228.02 L245.0,228.04 L246.6,226.16 L248.1,226.86 L249.7,227.86 L251.2,227.90 L252.8,227.45 L254.3,225.54 L255.9,226.11 L257.5,227.93 L259.0,226.72 L260.6,227.19 L262.1,224.55 L263.7,226.34 L265.2,227.95 L266.8,229.14 L268.3,227.93 L269.9,229.45 L271.4,228.72 L273.0,228.06 L274.6,227.84 L276.1,229.24 L277.7,228.72 L279.2,231.13 L280.8,230.44 L282.3,229.32 L283.9,228.81 L285.4,228.62 L287.0,227.95 L288.5,227.85 L290.1,227.96 L291.6,228.29 L293.2,228.70 L294.8,230.31 L296.3,229.20 L297.9,227.50 L299.4,230.89 L301.0,229.44 L302.5,227.32 L304.1,227.96 L305.6,227.60 L307.2,231.63 L308.7,229.86 L310.3,227.02 L311.9,229.10 L313.4,227.98 L315.0,230.25 L316.5,227.59 L318.1,226.71 L319.6,227.89 L321.2,228.28 L322.7,228.45 L324.3,226.28 L325.8,228.76 L327.4,229.82 L328.9,226.63 L330.5,230.12 L332.1,228.06 L333.6,231.86 L335.2,230.05 L336.7,230.04 L338.3,231.31 L339.8,230.68 L341.4,229.10 L342.9,230.03 L344.5,228.08 L346.0,226.43 L347.6,230.94 L349.2,229.25 L350.7,229.09 L352.3,228.36 L353.8,226.57 L355.4,227.22 L356.9,227.51 L358.5,228.27 L360.0,230.22 L361.6,230.96 L363.1,228.57 L364.7,230.39 L366.2,230.69 L367.8,228.44 L369.4,229.16 L370.9,227.59 L372.5,229.27 L374.0,229.06 L375.6,229.15 L377.1,227.62 L378.7,228.86 L380.2,226.44 L381.8,226.99 L383.3,227.41 L384.9,227.87 L386.4,230.01 L388.0,229.62 L389.6,228.12 L391.1,230.24 L392.7,228.15 L394.2,228.36 L395.8,228.51 L397.3,227.52 L398.9,228.50 L400.4,227.83 L402.0,229.92 L403.5,230.61 L405.1,229.00 L406.7,231.34 L408.2,229.43 L409.8,229.92 L411.3,231.32 L412.9,230.17 L414.4,231.82 L416.0,229.02 L417.5,227.45 L419.1,230.58 L420.6,229.30 L422.2,229.42 L423.7,226.69 L425.3,230.81 L426.9,229.72 L428.4,229.67 L430.0,229.75 L431.5,230.24 L433.1,228.80 L434.6,229.64 L436.2,228.14 L437.7,229.31 L439.3,230.39 L440.8,229.51 L442.4,227.62 L444.0,229.71 L445.5,229.33 L447.1,229.09 L448.6,230.70 L450.2,229.05 L451.7,227.70 L453.3,227.38 L454.8,228.59 L456.4,225.77 L457.9,228.69 L459.5,229.68 L461.0,229.59 L462.6,228.02 L464.2,228.33 L465.7,227.85 L467.3,229.33 L468.8,228.75 L470.4,228.04 L471.9,229.99 L473.5,230.82 L475.0,229.62 L476.6,228.29 L478.1,229.29 L479.7,228.83 L481.3,229.91 L482.8,227.90 L484.4,229.54 L485.9,229.05 L487.5,227.42 L489.0,228.84 L490.6,229.06 L492.1,228.86 L493.7,230.58 L495.2,227.29 L496.8,227.58 L498.3,228.34 L499.9,228.09 L501.5,228.61 L503.0,226.69 L504.6,227.31 L506.1,229.63 L507.7,229.76 L509.2,231.10 L510.8,229.93 L512.3,228.60 L513.9,229.28 L515.4,225.60 L517.0,225.13 L518.6,229.83 L520.1,228.24 L521.7,229.27 L523.2,229.47 L524.8,230.49 L526.3,228.74 L527.9,230.25 L529.4,228.73 L531.0,227.61 L532.5,230.44 L534.1,230.86 L535.6,229.09 L537.2,227.97 L538.8,228.86 L540.3,228.47 L541.9,231.15 L543.4,230.79 L545.0,230.33 L546.5,229.76 L548.1,230.47 L549.6,229.57 L551.2,229.64 L552.7,228.04 L554.3,229.86 L555.9,231.34 L557.4,228.69 L559.0,229.16 L560.5,229.51 L562.1,229.40 L563.6,229.99 L565.2,227.60 L566.7,229.56 L568.3,227.65 L569.8,227.73 L571.4,228.86 L572.9,227.82 L574.5,228.95 L576.1,231.94 L577.6,229.37 L579.2,229.22 L580.7,226.38 L582.3,226.89 L583.8,227.64 L585.4,228.13 L586.9,227.38 L588.5,227.88 L590.0,227.75 L591.6,226.63 L593.2,225.44 L594.7,226.10 L596.3,228.68 L597.8,229.25 L599.4,230.47 L600.9,230.20 L602.5,229.44 L604.0,229.53 L605.6,226.21 L607.1,230.09 L608.7,230.49 L610.2,228.71 L611.8,227.14 L613.4,228.58 L614.9,226.81 L616.5,228.98 L618.0,230.36 L619.6,229.59 L621.1,227.67 L622.7,228.30 L624.2,227.59 L625.8,229.06 L627.3,228.45 L628.9,228.67 L630.5,229.63 L632.0,228.46 L633.6,231.17 L635.1,228.69 L636.7,231.68 L638.2,228.31 L639.8,230.28 L641.3,228.26 L642.9,227.69 L644.4,229.31 L646.0,229.69 L647.5,227.42 L649.1,230.16 L650.7,228.15 L652.2,229.26 L653.8,229.03 L655.3,229.12 L656.9,226.24 L658.4,228.79 L660.0,227.74 L661.5,227.37 L663.1,227.58 L664.6,226.81 L666.2,227.59 L667.8,229.77 L669.3,227.78 L670.9,225.82 L672.4,227.19 L674.0,230.24 L675.5,228.55 L677.1,229.04 L678.6,231.20 L680.2,230.04 L681.7,228.94 L683.3,227.78 L684.8,226.90 L686.4,227.74 L688.0,228.96 L689.5,229.38 L691.1,229.83 L692.6,230.17 L694.2,229.54 L695.7,228.46 L697.3,227.08 L698.8,226.00 L700.4,227.87 L701.9,227.59 L703.5,227.93 L705.1,228.42 L706.6,228.04 L708.2,227.64 L709.7,227.54 L711.3,227.75 L712.8,226.95 L714.4,228.84 L715.9,227.63 L717.5,226.91 L719.0,228.70 L720.6,231.09 L722.1,229.28 L723.7,231.93 L725.3,231.81 L726.8,231.82 L728.4,229.16 L729.9,231.30 L731.5,230.15 L733.0,229.92 L734.6,229.85 L736.1,230.24 L737.7,230.09 L739.2,229.62 L740.8,230.72 L742.3,229.27 L743.9,228.17 L745.5,229.45 L747.0,230.10 L748.6,232.54 L750.1,228.97 L751.7,232.87 L753.2,231.57 L754.8,233.11 L756.3,224.60 L757.9,227.47 L759.4,226.82 L761.0,225.28 L762.6,228.15 L764.1,231.20 L765.7,226.98 L767.2,227.54 L768.8,231.64 L770.3,230.51 L771.9,230.27 L773.4,226.61 L775.0,227.30 L776.5,231.50 L778.1,228.58 L779.6,227.41 L781.2,228.45 L782.8,229.16 L784.3,224.30 L785.9,222.55 L787.4,224.98 L789.0,226.33 L790.5,230.09 L792.1,232.08 L793.6,229.33 L795.2,228.45 L796.7,231.09 L798.3,227.52 L799.9,230.44 L801.4,229.80 L803.0,234.86 L804.5,231.02 L806.1,228.24 L807.6,227.46 L809.2,228.21 L810.7,226.25 L812.3,228.90 L813.8,228.37 L815.4,231.68 L816.9,228.80 L818.5,227.83 L820.1,227.30 L821.6,224.90 L823.2,228.02 L824.7,229.43 L826.3,232.04 L827.8,230.49 L829.4,234.35 L830.9,230.82 L832.5,229.81 L834.0,225.26 L835.6,227.84 L837.2,232.11 L838.7,233.34 L840.3,231.18 L841.8,231.53 L843.4,229.08 L844.9,228.12 L846.5,226.35 L848.0,230.72 L849.6,229.41 L851.1,227.20 L852.7,228.79 L854.2,231.07 L855.8,231.32 L857.4,229.17 L858.9,234.80 L860.5,231.24 L862.0,229.28 L863.6,231.21 L865.1,229.65 L866.7,229.71 L868.2,229.47 L869.8,224.58 L871.3,225.95 L872.9,223.38 L874.5,231.09 L876.0,224.19 L877.6,229.49 L879.1,226.80 L880.7,229.32 L882.2,230.37 L883.8,231.07 L885.3,230.61 L886.9,231.77 L888.4,229.93 L890.0,230.74 L891.5,228.85 L893.1,228.74 L894.7,227.73 L896.2,226.95 L897.8,227.29 L899.3,227.79 L900.9,228.25 L902.4,228.56 L904.0,228.26 L905.5,228.05 L907.1,229.09 L908.6,227.30 L910.2,228.94 L911.8,230.68 L913.3,225.76 L914.9,227.94 L916.4,229.53 L918.0,227.23 L919.5,231.48 L921.1,227.01 L922.6,230.62 L924.2,229.43 L925.7,228.76 L927.3,228.40 L928.8,229.02 L930.4,228.22 L932.0,229.61 L933.5,226.78 L935.1,226.77 L936.6,227.01 L938.2,224.84 L939.7,226.23 L941.3,229.12 L942.8,228.18 L944.4,229.99 L945.9,228.27 L947.5,226.35 L949.1,227.97 L950.6,226.95 L952.2,226.32 L953.7,226.26 L955.3,225.87 L956.8,227.33 L958.4,225.12 L959.9,226.97 L961.5,226.98 L963.0,228.19 L964.6,226.25 L966.1,227.17 L967.7,226.09 L969.3,226.16 L970.8,225.65 L972.4,227.01 L973.9,226.82 L975.5,225.54 L977.0,224.77 L978.6,225.26 L980.1,223.95 L981.7,226.19 L983.2,226.61 L984.8,224.99 L986.4,225.33 L987.9,227.46 L989.5,226.50 L991.0,225.48 L992.6,226.00 L994.1,223.96 L995.7,223.97 L997.2,224.46 L998.8,223.42 L1000.3,225.70 L1001.9,222.78 L1003.4,223.27 L1005.0,223.83 L1006.6,226.26 L1008.1,225.09 L1009.7,224.30 L1011.2,222.26 L1012.8,224.62 L1014.3,223.41 L1015.9,225.09 L1017.4,225.53 L1019.0,225.60 L1020.5,226.93 L1022.1,225.28 L1023.7,224.67 L1025.2,223.48 L1026.8,223.28 L1028.3,224.15 L1029.9,224.00 L1031.4,221.72 L1033.0,224.04 L1034.5,223.79 L1036.1,224.13 L1037.6,223.77 L1039.2,221.64 L1040.7,220.53 L1042.3,224.44" stroke="#a4c4f4" stroke-opacity="0.9"/><path d="M49.2,189.34 L51.6,186.74 L53.9,187.89 L56.3,189.06 L58.7,189.79 L61.1,191.27 L63.4,189.91 L65.8,189.90 L68.2,189.41 L70.5,191.72 L72.9,190.00 L75.3,189.18 L77.6,188.69 L80.0,189.18 L82.4,189.70 L84.8,189.69 L87.1,189.21 L89.5,191.63 L91.9,190.20 L94.2,189.97 L96.6,190.39 L99.0,190.22 L101.3,189.28 L103.7,191.35 L106.1,189.74 L108.5,188.63 L110.8,190.44 L113.2,193.34 L115.6,190.07 L117.9,188.38 L120.3,189.13 L122.7,189.22 L125.0,188.06 L127.4,188.22 L129.8,188.95 L132.2,191.04 L134.5,190.11 L136.9,190.07 L139.3,187.80 L141.6,187.94 L144.0,190.99 L146.4,188.89 L148.7,188.38 L151.1,190.66 L153.5,190.90 L155.9,190.29 L158.2,190.32 L160.6,190.48 L163.0,189.72 L165.3,188.23 L167.7,188.24 L170.1,187.94 L172.4,187.14 L174.8,187.69 L177.2,186.59 L179.6,188.60 L181.9,189.14 L184.3,188.74 L186.7,190.38 L189.0,190.61 L191.4,190.80 L193.8,187.65 L196.2,189.52 L198.5,190.48 L200.9,188.10 L203.3,188.63 L205.6,189.05 L208.0,189.92 L210.4,188.62 L212.7,187.81 L215.1,186.70 L217.5,188.02 L219.9,189.64 L222.2,188.79 L224.6,187.07 L227.0,186.96 L229.3,186.23 L231.7,186.09 L234.1,187.69 L236.4,187.24 L238.8,184.56 L241.2,185.62 L243.6,188.34 L245.9,187.48 L248.3,187.31 L250.7,187.90 L253.0,187.91 L255.4,186.85 L257.8,186.06 L260.1,186.36 L262.5,186.66 L264.9,187.86 L267.3,187.01 L269.6,189.01 L272.0,187.24 L274.4,186.06 L276.7,186.85 L279.1,188.50 L281.5,188.44 L283.8,187.08 L286.2,186.34 L288.6,186.69 L291.0,188.47 L293.3,188.74 L295.7,189.39 L298.1,190.40 L300.4,190.12 L302.8,188.80 L305.2,189.11 L307.5,188.30 L309.9,189.02 L312.3,189.74 L314.7,187.44 L317.0,187.99 L319.4,188.57 L321.8,188.23 L324.1,188.36 L326.5,186.02 L328.9,187.36 L331.2,188.30 L333.6,188.26 L336.0,186.48 L338.4,187.58 L340.7,190.55 L343.1,189.73 L345.5,188.02 L347.8,187.32 L350.2,187.51 L352.6,189.50 L355.0,188.02 L357.3,189.68 L359.7,190.22 L362.1,189.75 L364.4,188.66 L366.8,188.89 L369.2,190.37 L371.5,190.14 L373.9,189.92 L376.3,189.16 L378.7,190.65 L381.0,191.32 L383.4,191.08 L385.8,190.11 L388.1,188.27 L390.5,190.21 L392.9,190.66 L395.2,188.62 L397.6,188.67 L400.0,188.35 L402.4,188.92 L404.7,189.81 L407.1,189.19 L409.5,190.31 L411.8,190.52 L414.2,190.80 L416.6,190.03 L418.9,190.49 L421.3,188.82 L423.7,188.19 L426.1,189.42 L428.4,188.07 L430.8,186.49 L433.2,187.04 L435.5,187.44 L437.9,187.17 L440.3,187.14 L442.6,189.45 L445.0,188.74 L447.4,188.82 L449.8,187.26 L452.1,187.88 L454.5,190.12 L456.9,188.04 L459.2,187.81 L461.6,186.27 L464.0,188.75 L466.3,188.92 L468.7,188.78 L471.1,188.86 L473.5,189.80 L475.8,190.99 L478.2,190.36 L480.6,188.95 L482.9,190.77 L485.3,192.32 L487.7,191.75 L490.1,191.42 L492.4,189.65 L494.8,188.64 L497.2,188.10 L499.5,187.42 L501.9,188.45 L504.3,186.23 L506.6,187.57 L509.0,187.19 L511.4,186.33 L513.8,185.85 L516.1,187.77 L518.5,189.05 L520.9,187.29 L523.2,188.16 L525.6,186.26 L528.0,187.73 L530.3,186.18 L532.7,185.75 L535.1,188.07 L537.5,189.08 L539.8,187.39 L542.2,186.32 L544.6,186.41 L546.9,187.56 L549.3,188.24 L551.7,185.47 L554.0,185.01 L556.4,185.21 L558.8,187.93 L561.2,188.50 L563.5,187.81 L565.9,185.03 L568.3,185.81 L570.6,186.84 L573.0,188.66 L575.4,188.04 L577.7,187.30 L580.1,186.36 L582.5,189.00 L584.9,188.11 L587.2,189.43 L589.6,188.45 L592.0,187.09 L594.3,186.40 L596.7,185.14 L599.1,186.19 L601.4,185.82 L603.8,185.96 L606.2,186.73 L608.6,187.15 L610.9,187.33 L613.3,189.62 L615.7,188.33 L618.0,188.31 L620.4,190.54 L622.8,189.79 L625.2,189.31 L627.5,189.32 L629.9,187.93 L632.3,189.07 L634.6,188.65 L637.0,189.71 L639.4,190.83 L641.7,188.16 L644.1,187.22 L646.5,187.18 L648.9,186.19 L651.2,188.17 L653.6,189.21 L656.0,188.57 L658.3,189.25 L660.7,188.29 L663.1,188.22 L665.4,189.44 L667.8,187.80 L670.2,186.77 L672.6,188.42 L674.9,187.86 L677.3,186.62 L679.7,184.13 L682.0,186.28 L684.4,188.42 L686.8,188.11 L689.1,188.07 L691.5,188.85 L693.9,187.26 L696.3,186.68 L698.6,186.11 L701.0,186.04 L703.4,188.03 L705.7,188.19 L708.1,187.67 L710.5,187.94 L712.8,188.42 L715.2,189.33 L717.6,187.85 L720.0,188.49 L722.3,190.96 L724.7,190.08 L727.1,188.74 L729.4,187.60 L731.8,190.75 L734.2,189.77 L736.5,187.31 L738.9,189.70 L741.3,189.93 L743.7,189.65 L746.0,190.33 L748.4,188.76 L750.8,188.04 L753.1,188.14 L755.5,189.14 L757.9,188.92 L760.3,188.68 L762.6,189.02 L765.0,188.99 L767.4,189.66 L769.7,189.81 L772.1,189.70 L774.5,187.79 L776.8,187.16 L779.2,185.89 L781.6,186.22 L784.0,186.78 L786.3,186.66 L788.7,186.51 L791.1,186.34 L793.4,188.40 L795.8,187.58 L798.2,187.58 L800.5,187.79 L802.9,188.58 L805.3,187.22 L807.7,188.35 L810.0,185.93 L812.4,185.25 L814.8,186.73 L817.1,187.98 L819.5,186.85 L821.9,187.40 L824.2,186.46 L826.6,186.18 L829.0,187.53 L831.4,184.77 L833.7,184.81 L836.1,183.66 L838.5,184.33 L840.8,183.91 L843.2,184.33 L845.6,183.66 L847.9,182.51 L850.3,183.35 L852.7,182.67 L855.1,183.08 L857.4,182.43 L859.8,181.56 L862.2,180.84 L864.5,182.86 L866.9,185.05 L869.3,186.21 L871.6,185.59 L874.0,187.27 L876.4,188.22 L878.8,188.49 L881.1,188.16 L883.5,186.15 L885.9,184.27 L888.2,187.31 L890.6,186.81 L893.0,185.28 L895.3,183.79 L897.7,182.38 L900.1,183.66 L902.5,183.87 L904.8,182.68 L907.2,183.50 L909.6,183.89 L911.9,184.26 L914.3,185.33 L916.7,184.21 L919.1,182.61 L921.4,182.00 L923.8,184.21 L926.2,184.86 L928.5,183.42 L930.9,180.38 L933.3,182.42 L935.6,183.42 L938.0,185.18 L940.4,184.44 L942.8,182.67 L945.1,181.45 L947.5,180.85 L949.9,182.45 L952.2,181.69 L954.6,183.97 L957.0,183.89 L959.3,182.58 L961.7,181.10 L964.1,182.45 L966.5,183.53 L968.8,182.45 L971.2,182.51 L973.6,183.40 L975.9,184.03 L978.3,183.17 L980.7,182.23 L983.0,181.58 L985.4,183.10 L987.8,182.44 L990.2,183.27 L992.5,183.41 L994.9,183.79 L997.3,182.68 L999.6,183.27 L1002.0,182.64 L1004.4,184.03 L1006.7,182.26 L1009.1,183.47 L1011.5,183.12 L1013.9,181.61 L1016.2,181.33 L1018.6,180.39 L1021.0,179.34 L1023.3,177.67 L1025.7,178.58 L1028.1,179.22 L1030.4,177.64 L1032.8,178.66 L1035.2,178.37 L1037.6,180.73 L1039.9,180.52 L1042.3,180.61" stroke="#ff9830" stroke-opacity="0.9"/><path d="M49.2,154.59 L51.6,152.97 L53.9,153.17 L56.3,155.67 L58.7,155.28 L61.1,155.95 L63.4,155.82 L65.8,155.60 L68.2,156.20 L70.5,154.47 L72.9,154.19 L75.3,151.80 L77.6,151.56 L80.0,152.93 L82.4,152.28 L84.8,152.22 L87.1,152.36 L89.5,152.11 L91.9,152.01 L94.2,150.51 L96.6,152.57 L99.0,153.62 L101.3,151.67 L103.7,152.99 L106.1,153.78 L108.5,152.07 L110.8,149.85 L113.2,149.76 L115.6,151.14 L117.9,152.81 L120.3,151.67 L122.7,151.64 L125.0,151.28 L127.4,151.35 L129.8,151.51 L132.2,149.81 L134.5,148.29 L136.9,151.83 L139.3,152.22 L141.6,151.52 L144.0,152.74 L146.4,152.66 L148.7,149.30 L151.1,150.83 L153.5,152.26 L155.9,151.55 L158.2,151.28 L160.6,153.57 L163.0,152.14 L165.3,151.21 L167.7,151.29 L170.1,151.40 L172.4,152.12 L174.8,152.29 L177.2,152.67 L179.6,151.15 L181.9,151.59 L184.3,150.03 L186.7,151.51 L189.0,152.86 L191.4,152.99 L193.8,153.40 L196.2,151.14 L198.5,151.94 L200.9,151.73 L203.3,152.59 L205.6,152.83 L208.0,153.42 L210.4,152.94 L212.7,153.46 L215.1,152.96 L217.5,152.11 L219.9,151.01 L222.2,151.18 L224.6,151.11 L227.0,150.90 L229.3,152.42 L231.7,152.94 L234.1,152.47 L236.4,154.39 L238.8,153.89 L241.2,152.86 L243.6,152.53 L245.9,150.05 L248.3,149.89 L250.7,151.96 L253.0,149.79 L255.4,150.89 L257.8,150.02 L260.1,150.35 L262.5,150.01 L264.9,149.65 L267.3,150.92 L269.6,150.33 L272.0,150.48 L274.4,153.15 L276.7,155.61 L279.1,153.61 L281.5,152.43 L283.8,151.74 L286.2,150.69 L288.6,151.33 L291.0,154.02 L293.3,153.81 L295.7,152.48 L298.1,152.91 L300.4,154.25 L302.8,152.16 L305.2,152.80 L307.5,153.69 L309.9,152.32 L312.3,150.96 L314.7,150.65 L317.0,151.10 L319.4,151.82 L321.8,150.32 L324.1,150.70 L326.5,151.98 L328.9,153.24 L331.2,151.04 L333.6,151.17 L336.0,151.01 L338.4,154.25 L340.7,153.97 L343.1,152.56 L345.5,154.12 L347.8,154.61 L350.2,154.54 L352.6,151.78 L355.0,152.01 L357.3,152.62 L359.7,152.49 L362.1,152.61 L364.4,152.53 L366.8,152.00 L369.2,153.61 L371.5,153.87 L373.9,151.74 L376.3,150.73 L378.7,152.52 L381.0,153.66 L383.4,153.73 L385.8,150.83 L388.1,148.54 L390.5,150.69 L392.9,151.11 L395.2,151.38 L397.6,151.66 L400.0,151.20 L402.4,152.87 L404.7,155.32 L407.1,154.35 L409.5,153.23 L411.8,152.56 L414.2,152.50 L416.6,154.22 L418.9,153.30 L421.3,154.39 L423.7,154.98 L426.1,154.88 L428.4,154.74 L430.8,155.04 L433.2,152.91 L435.5,152.08 L437.9,150.34 L440.3,152.01 L442.6,154.43 L445.0,154.47 L447.4,155.57 L449.8,153.27 L452.1,153.40 L454.5,154.59 L456.9,154.90 L459.2,152.89 L461.6,153.21 L464.0,154.52 L466.3,152.74 L468.7,151.54 L471.1,151.23 L473.5,153.15 L475.8,153.43 L478.2,152.42 L480.6,151.88 L482.9,150.99 L485.3,151.97 L487.7,152.49 L490.1,153.64 L492.4,151.56 L494.8,152.15 L497.2,152.90 L499.5,152.73 L501.9,151.54 L504.3,151.70 L506.6,153.91 L509.0,152.14 L511.4,150.62 L513.8,150.83 L516.1,152.32 L518.5,150.51 L520.9,151.01 L523.2,151.50 L525.6,151.12 L528.0,152.20 L530.3,150.10 L532.7,149.63 L535.1,150.42 L537.5,152.51 L539.8,151.12 L542.2,151.25 L544.6,151.20 L546.9,150.86 L549.3,152.75 L551.7,152.74 L554.0,152.61 L556.4,150.62 L558.8,148.75 L561.2,149.58 L563.5,152.26 L565.9,152.74 L568.3,153.77 L570.6,153.87 L573.0,151.78 L575.4,150.95 L577.7,152.99 L580.1,153.74 L582.5,152.24 L584.9,152.64 L587.2,152.35 L589.6,152.24 L592.0,152.89 L594.3,151.47 L596.7,151.40 L599.1,152.31 L601.4,152.46 L603.8,152.80 L606.2,152.89 L608.6,152.58 L610.9,153.60 L613.3,153.32 L615.7,155.55 L618.0,155.84 L620.4,155.76 L622.8,154.30 L625.2,152.99 L627.5,153.12 L629.9,153.76 L632.3,155.36 L634.6,153.95 L637.0,153.84 L639.4,153.60 L641.7,150.49 L644.1,149.67 L646.5,151.05 L648.9,150.38 L651.2,150.88 L653.6,152.94 L656.0,155.06 L658.3,154.55 L660.7,154.19 L663.1,153.75 L665.4,152.39 L667.8,154.31 L670.2,154.74 L672.6,153.34 L674.9,153.78 L677.3,153.58 L679.7,153.22 L682.0,152.36 L684.4,152.89 L686.8,152.61 L689.1,154.53 L691.5,154.72 L693.9,153.39 L696.3,153.85 L698.6,153.75 L701.0,155.68 L703.4,153.55 L705.7,154.85 L708.1,155.38 L710.5,154.13 L712.8,153.82 L715.2,153.39 L717.6,151.98 L720.0,151.80 L722.3,151.59 L724.7,151.83 L727.1,152.89 L729.4,153.11 L731.8,149.31 L734.2,150.43 L736.5,152.50 L738.9,154.78 L741.3,153.45 L743.7,153.97 L746.0,153.97 L748.4,155.29 L750.8,154.64 L753.1,153.92 L755.5,152.27 L757.9,151.03 L760.3,151.01 L762.6,152.04 L765.0,154.24 L767.4,155.31 L769.7,153.85 L772.1,151.10 L774.5,151.79 L776.8,153.25 L779.2,152.83 L781.6,154.96 L784.0,153.49 L786.3,151.05 L788.7,153.52 L791.1,153.10 L793.4,152.43 L795.8,153.76 L798.2,152.64 L800.5,150.80 L802.9,150.42 L805.3,151.66 L807.7,152.97 L810.0,153.29 L812.4,152.21 L814.8,151.98 L817.1,153.16 L819.5,153.04 L821.9,153.15 L824.2,152.61 L826.6,152.08 L829.0,152.76 L831.4,151.14 L833.7,151.43 L836.1,151.14 L838.5,151.22 L840.8,152.22 L843.2,152.47 L845.6,152.35 L847.9,151.29 L850.3,151.86 L852.7,152.17 L855.1,153.63 L857.4,152.35 L859.8,150.86 L862.2,151.57 L864.5,152.57 L866.9,151.61 L869.3,150.80 L871.6,149.86 L874.0,151.67 L876.4,152.23 L878.8,151.40 L881.1,149.78 L883.5,149.96 L885.9,149.59 L888.2,153.61 L890.6,154.68 L893.0,154.91 L895.3,154.79 L897.7,154.54 L900.1,154.44 L902.5,153.74 L904.8,151.73 L907.2,152.91 L909.6,153.12 L911.9,155.23 L914.3,155.39 L916.7,153.30 L919.1,153.01 L921.4,151.98 L923.8,150.69 L926.2,149.41 L928.5,150.65 L930.9,150.37 L933.3,150.32 L935.6,151.81 L938.0,151.62 L940.4,151.56 L942.8,152.04 L945.1,151.60 L947.5,151.45 L949.9,150.34 L952.2,151.58 L954.6,151.69 L957.0,151.00 L959.3,150.52 L961.7,151.74 L964.1,151.60 L966.5,152.94 L968.8,153.21 L971.2,152.08 L973.6,151.59 L975.9,153.07 L978.3,152.28 L980.7,151.63 L983.0,152.99 L985.4,153.15 L987.8,153.60 L990.2,153.38 L992.5,153.00 L994.9,153.79 L997.3,152.26 L999.6,151.08 L1002.0,153.65 L1004.4,152.58 L1006.7,152.85 L1009.1,151.46 L1011.5,152.10 L1013.9,153.27 L1016.2,155.66 L1018.6,153.29 L1021.0,153.00 L1023.3,155.40 L1025.7,155.82 L1028.1,153.15 L1030.4,155.22 L1032.8,156.01 L1035.2,154.78 L1037.6,156.08 L1039.9,154.60 L1042.3,154.40" stroke="#f2495c" stroke-opacity="0.9"/><path d="M49.2,125.25 L52.3,125.48 L55.4,126.16 L58.5,126.84 L61.7,126.49 L64.8,125.94 L67.9,126.20 L71.0,125.88 L74.1,126.24 L77.2,126.52 L80.3,126.61 L83.4,127.39 L86.6,127.59 L89.7,127.15 L92.8,126.26 L95.9,127.10 L99.0,128.29 L102.1,127.05 L105.2,125.02 L108.4,125.12 L111.5,126.55 L114.6,127.79 L117.7,127.59 L120.8,125.70 L123.9,125.69 L127.0,126.68 L130.1,128.67 L133.3,128.70 L136.4,127.36 L139.5,125.88 L142.6,126.07 L145.7,127.20 L148.8,127.55 L151.9,126.11 L155.0,124.57 L158.2,125.24 L161.3,127.32 L164.4,127.87 L167.5,127.61 L170.6,125.99 L173.7,125.74 L176.8,126.97 L180.0,125.68 L183.1,125.31 L186.2,125.61 L189.3,124.81 L192.4,125.41 L195.5,124.83 L198.6,125.91 L201.7,125.85 L204.9,125.61 L208.0,126.23 L211.1,126.84 L214.2,126.57 L217.3,125.58 L220.4,126.07 L223.5,126.82 L226.7,127.33 L229.8,127.66 L232.9,126.32 L236.0,126.97 L239.1,127.41 L242.2,128.04 L245.3,127.16 L248.4,126.51 L251.6,127.01 L254.7,126.55 L257.8,127.26 L260.9,127.40 L264.0,127.41 L267.1,127.66 L270.2,127.29 L273.3,128.75 L276.5,128.13 L279.6,127.63 L282.7,126.27 L285.8,125.90 L288.9,126.36 L292.0,128.04 L295.1,129.14 L298.3,128.58 L301.4,127.71 L304.5,128.24 L307.6,128.73 L310.7,128.04 L313.8,128.18 L316.9,127.91 L320.0,127.07 L323.2,126.83 L326.3,127.49 L329.4,127.64 L332.5,126.65 L335.6,125.91 L338.7,126.43 L341.8,125.75 L345.0,126.99 L348.1,126.80 L351.2,127.13 L354.3,127.47 L357.4,126.56 L360.5,126.57 L363.6,127.69 L366.7,127.36 L369.9,126.97 L373.0,126.84 L376.1,127.19 L379.2,126.84 L382.3,126.14 L385.4,125.85 L388.5,125.80 L391.6,125.99 L394.8,126.25 L397.9,125.93 L401.0,126.56 L404.1,125.93 L407.2,126.58 L410.3,127.60 L413.4,127.16 L416.6,126.56 L419.7,125.46 L422.8,125.92 L425.9,126.24 L429.0,126.57 L432.1,126.06 L435.2,125.51 L438.3,126.13 L441.5,126.52 L444.6,126.75 L447.7,125.86 L450.8,125.21 L453.9,124.73 L457.0,125.99 L460.1,127.53 L463.3,126.68 L466.4,126.00 L469.5,125.56 L472.6,125.44 L475.7,125.56 L478.8,126.03 L481.9,126.51 L485.0,126.60 L488.2,126.11 L491.3,126.95 L494.4,126.56 L497.5,126.03 L500.6,126.43 L503.7,125.94 L506.8,126.88 L509.9,127.39 L513.1,126.98 L516.2,126.86 L519.3,126.68 L522.4,126.99 L525.5,127.45 L528.6,126.85 L531.7,126.50 L534.9,127.37 L538.0,127.22 L541.1,125.98 L544.2,126.64 L547.3,126.37 L550.4,126.69 L553.5,127.21 L556.6,126.11 L559.8,126.11 L562.9,125.62 L566.0,125.21 L569.1,125.13 L572.2,126.18 L575.3,126.33 L578.4,125.92 L581.6,125.88 L584.7,126.60 L587.8,126.97 L590.9,126.40 L594.0,126.57 L597.1,126.49 L600.2,125.32 L603.3,124.48 L606.5,124.35 L609.6,124.71 L612.7,126.35 L615.8,126.75 L618.9,126.43 L622.0,126.13 L625.1,125.11 L628.2,124.78 L631.4,125.05 L634.5,125.44 L637.6,125.42 L640.7,125.75 L643.8,126.28 L646.9,126.95 L650.0,127.35 L653.2,126.50 L656.3,125.86 L659.4,126.26 L662.5,126.26 L665.6,125.71 L668.7,126.60 L671.8,126.37 L674.9,125.38 L678.1,126.08 L681.2,127.14 L684.3,126.14 L687.4,125.58 L690.5,125.89 L693.6,124.81 L696.7,123.75 L699.9,123.67 L703.0,123.25 L706.1,123.46 L709.2,123.43 L712.3,124.31 L715.4,124.54 L718.5,124.21 L721.6,125.33 L724.8,124.34 L727.9,125.05 L731.0,124.56 L734.1,124.52 L737.2,124.14 L740.3,126.00 L743.4,125.27 L746.5,125.38 L749.7,125.30 L752.8,124.80 L755.9,124.57 L759.0,124.16 L762.1,124.83 L765.2,124.85 L768.3,124.51 L771.5,123.90 L774.6,124.57 L777.7,125.22 L780.8,124.99 L783.9,125.26 L787.0,125.65 L790.1,124.66 L793.2,125.04 L796.4,125.02 L799.5,125.58 L802.6,125.48 L805.7,125.92 L808.8,124.78 L811.9,124.14 L815.0,125.03 L818.2,124.65 L821.3,125.08 L824.4,126.14 L827.5,126.23 L830.6,125.72 L833.7,125.62 L836.8,125.90 L839.9,126.15 L843.1,125.44 L846.2,125.60 L849.3,125.84 L852.4,126.94 L855.5,126.59 L858.6,125.85 L861.7,126.25 L864.8,125.43 L868.0,125.71 L871.1,125.25 L874.2,125.31 L877.3,125.20 L880.4,124.96 L883.5,125.55 L886.6,125.44 L889.8,125.08 L892.9,125.65 L896.0,126.20 L899.1,125.10 L902.2,124.44 L905.3,123.34 L908.4,122.64 L911.5,124.38 L914.7,125.14 L917.8,123.92 L920.9,123.96 L924.0,123.68 L927.1,125.12 L930.2,125.31 L933.3,125.96 L936.5,127.06 L939.6,127.20 L942.7,126.57 L945.8,124.96 L948.9,124.43 L952.0,123.91 L955.1,124.45 L958.2,125.27 L961.4,125.06 L964.5,124.56 L967.6,125.47 L970.7,125.31 L973.8,124.95 L976.9,125.71 L980.0,125.01 L983.1,124.11 L986.3,123.92 L989.4,124.79 L992.5,124.51 L995.6,123.99 L998.7,124.86 L1001.8,124.74 L1004.9,125.82 L1008.1,125.02 L1011.2,125.14 L1014.3,125.63 L1017.4,125.72 L1020.5,125.65 L1023.6,126.24 L1026.7,126.22 L1029.8,125.20 L1033.0,125.43 L1036.1,126.19 L1039.2,126.57 L1042.3,125.62" stroke="#5794f2" stroke-opacity="0.9"/><path d="M49.2,107.93 L52.3,107.35 L55.4,107.23 L58.5,107.00 L61.7,107.12 L64.8,107.19 L67.9,106.81 L71.0,106.77 L74.1,106.67 L77.2,107.06 L80.3,106.50 L83.4,105.99 L86.6,106.25 L89.7,106.46 L92.8,106.13 L95.9,106.37 L99.0,106.54 L102.1,106.49 L105.2,106.02 L108.4,106.16 L111.5,106.80 L114.6,107.10 L117.7,106.76 L120.8,106.54 L123.9,106.88 L127.0,107.04 L130.1,106.59 L133.3,106.91 L136.4,107.25 L139.5,106.86 L142.6,106.47 L145.7,107.37 L148.8,107.48 L151.9,107.66 L155.0,107.75 L158.2,107.46 L161.3,107.17 L164.4,107.42 L167.5,107.15 L170.6,107.35 L173.7,107.18 L176.8,107.13 L180.0,107.09 L183.1,106.56 L186.2,106.06 L189.3,106.14 L192.4,105.91 L195.5,106.09 L198.6,105.92 L201.7,105.84 L204.9,106.20 L208.0,106.49 L211.1,106.92 L214.2,106.81 L217.3,106.68 L220.4,106.42 L223.5,106.56 L226.7,106.68 L229.8,106.80 L232.9,106.87 L236.0,107.20 L239.1,106.72 L242.2,107.25 L245.3,107.31 L248.4,107.58 L251.6,108.28 L254.7,107.80 L257.8,107.93 L260.9,108.97 L264.0,108.43 L267.1,108.17 L270.2,108.49 L273.3,108.70 L276.5,108.82 L279.6,108.77 L282.7,108.34 L285.8,108.56 L288.9,108.73 L292.0,107.64 L295.1,107.36 L298.3,107.71 L301.4,107.38 L304.5,106.94 L307.6,106.42 L310.7,106.21 L313.8,106.82 L316.9,106.36 L320.0,105.62 L323.2,105.47 L326.3,105.76 L329.4,105.71 L332.5,106.34 L335.6,106.68 L338.7,107.19 L341.8,106.71 L345.0,106.93 L348.1,107.14 L351.2,106.77 L354.3,106.49 L357.4,107.09 L360.5,107.21 L363.6,106.66 L366.7,106.90 L369.9,106.85 L373.0,106.49 L376.1,106.52 L379.2,106.50 L382.3,106.38 L385.4,106.45 L388.5,106.37 L391.6,106.97 L394.8,107.01 L397.9,106.72 L401.0,105.92 L404.1,105.78 L407.2,106.13 L410.3,105.81 L413.4,105.66 L416.6,105.65 L419.7,105.65 L422.8,105.81 L425.9,105.89 L429.0,106.29 L432.1,106.32 L435.2,106.38 L438.3,106.54 L441.5,106.28 L444.6,106.78 L447.7,106.53 L450.8,106.67 L453.9,107.04 L457.0,106.65 L460.1,106.75 L463.3,106.56 L466.4,106.12 L469.5,106.59 L472.6,106.78 L475.7,105.91 L478.8,105.61 L481.9,105.72 L485.0,106.27 L488.2,106.23 L491.3,106.47 L494.4,106.57 L497.5,106.08 L500.6,105.91 L503.7,106.65 L506.8,106.47 L509.9,106.55 L513.1,106.24 L516.2,106.19 L519.3,106.27 L522.4,106.65 L525.5,106.77 L528.6,106.77 L531.7,106.81 L534.9,106.82 L538.0,106.99 L541.1,107.02 L544.2,107.32 L547.3,107.37 L550.4,107.59 L553.5,107.51 L556.6,107.13 L559.8,107.35 L562.9,107.32 L566.0,106.91 L569.1,106.53 L572.2,106.64 L575.3,106.46 L578.4,106.99 L581.6,107.50 L584.7,107.86 L587.8,107.27 L590.9,107.45 L594.0,107.52 L597.1,107.47 L600.2,106.86 L603.3,106.71 L606.5,106.38 L609.6,106.27 L612.7,106.90 L615.8,106.91 L618.9,106.84 L622.0,107.26 L625.1,107.46 L628.2,107.52 L631.4,107.46 L634.5,107.32 L637.6,107.89 L640.7,108.05 L643.8,107.68 L646.9,107.69 L650.0,108.05 L653.2,107.71 L656.3,107.20 L659.4,107.03 L662.5,107.59 L665.6,108.05 L668.7,108.24 L671.8,108.57 L674.9,108.50 L678.1,108.22 L681.2,108.67 L684.3,108.69 L687.4,108.54 L690.5,107.98 L693.6,107.87 L696.7,107.55 L699.9,107.53 L703.0,106.96 L706.1,106.91 L709.2,107.24 L712.3,107.26 L715.4,106.97 L718.5,107.04 L721.6,106.90 L724.8,107.70 L727.9,107.70 L731.0,107.67 L734.1,108.08 L737.2,108.10 L740.3,107.76 L743.4,107.63 L746.5,107.69 L749.7,107.94 L752.8,107.81 L755.9,107.94 L759.0,108.03 L762.1,108.04 L765.2,108.28 L768.3,108.16 L771.5,108.05 L774.6,108.39 L777.7,108.26 L780.8,107.58 L783.9,107.24 L787.0,107.12 L790.1,107.15 L793.2,107.31 L796.4,107.39 L799.5,107.00 L802.6,106.63 L805.7,106.72 L808.8,106.90 L811.9,106.54 L815.0,106.39 L818.2,106.20 L821.3,106.27 L824.4,106.07 L827.5,106.36 L830.6,106.33 L833.7,106.33 L836.8,106.92 L839.9,107.26 L843.1,106.55 L846.2,107.00 L849.3,107.61 L852.4,107.91 L855.5,107.41 L858.6,107.41 L861.7,107.56 L864.8,108.01 L868.0,107.71 L871.1,107.69 L874.2,107.75 L877.3,106.83 L880.4,106.84 L883.5,107.62 L886.6,107.80 L889.8,107.59 L892.9,107.66 L896.0,108.10 L899.1,107.80 L902.2,107.73 L905.3,107.62 L908.4,107.55 L911.5,107.50 L914.7,108.09 L917.8,108.15 L920.9,107.82 L924.0,107.53 L927.1,107.76 L930.2,108.25 L933.3,108.02 L936.5,107.81 L939.6,107.51 L942.7,107.44 L945.8,106.94 L948.9,107.20 L952.0,107.02 L955.1,107.18 L958.2,106.72 L961.4,106.36 L964.5,107.22 L967.6,107.39 L970.7,107.19 L973.8,107.49 L976.9,107.58 L980.0,107.35 L983.1,107.42 L986.3,107.55 L989.4,107.84 L992.5,107.94 L995.6,106.86 L998.7,106.73 L1001.8,106.46 L1004.9,106.01 L1008.1,105.67 L1011.2,105.74 L1014.3,105.96 L1017.4,106.15 L1020.5,105.85 L1023.6,105.66 L1026.7,105.85 L1029.8,105.45 L1033.0,105.29 L1036.1,105.56 L1039.2,105.42 L1042.3,105.61" stroke="#b877d9" stroke-opacity="0.9"/><path d="M49.2,95.08 L52.3,94.84 L55.4,94.91 L58.5,95.13 L61.7,95.01 L64.8,95.15 L67.9,95.18 L71.0,95.38 L74.1,95.59 L77.2,95.62 L80.3,95.70 L83.4,95.93 L86.6,95.93 L89.7,96.56 L92.8,96.75 L95.9,96.87 L99.0,96.76 L102.1,96.55 L105.2,96.94 L108.4,96.91 L111.5,96.45 L114.6,96.46 L117.7,96.37 L120.8,95.99 L123.9,95.73 L127.0,95.69 L130.1,96.25 L133.3,96.44 L136.4,96.21 L139.5,96.10 L142.6,96.23 L145.7,95.39 L148.8,95.32 L151.9,95.75 L155.0,95.85 L158.2,95.88 L161.3,95.75 L164.4,95.55 L167.5,95.65 L170.6,95.83 L173.7,95.00 L176.8,94.68 L180.0,94.88 L183.1,95.16 L186.2,94.63 L189.3,94.65 L192.4,94.54 L195.5,94.65 L198.6,94.59 L201.7,94.78 L204.9,94.70 L208.0,95.17 L211.1,95.70 L214.2,95.57 L217.3,95.65 L220.4,95.79 L223.5,95.35 L226.7,95.32 L229.8,95.68 L232.9,95.80 L236.0,96.26 L239.1,96.67 L242.2,96.33 L245.3,96.70 L248.4,96.91 L251.6,96.34 L254.7,96.37 L257.8,96.14 L260.9,96.53 L264.0,96.57 L267.1,97.03 L270.2,96.80 L273.3,97.41 L276.5,97.23 L279.6,97.33 L282.7,97.54 L285.8,97.79 L288.9,97.78 L292.0,98.01 L295.1,97.44 L298.3,97.53 L301.4,97.53 L304.5,97.40 L307.6,96.84 L310.7,96.91 L313.8,96.59 L316.9,96.70 L320.0,96.17 L323.2,96.93 L326.3,97.29 L329.4,97.37 L332.5,97.18 L335.6,97.19 L338.7,97.28 L341.8,97.07 L345.0,97.03 L348.1,96.85 L351.2,96.69 L354.3,97.13 L357.4,97.40 L360.5,97.19 L363.6,96.90 L366.7,97.05 L369.9,96.85 L373.0,96.52 L376.1,96.53 L379.2,97.00 L382.3,96.99 L385.4,97.29 L388.5,97.31 L391.6,97.46 L394.8,97.04 L397.9,96.60 L401.0,96.65 L404.1,96.63 L407.2,96.77 L410.3,96.65 L413.4,96.69 L416.6,97.14 L419.7,97.49 L422.8,97.71 L425.9,98.06 L429.0,98.30 L432.1,98.20 L435.2,98.31 L438.3,98.35 L441.5,98.32 L444.6,97.74 L447.7,97.21 L450.8,97.51 L453.9,97.53 L457.0,97.72 L460.1,97.56 L463.3,97.61 L466.4,97.28 L469.5,97.44 L472.6,97.72 L475.7,97.73 L478.8,97.67 L481.9,97.65 L485.0,97.62 L488.2,96.71 L491.3,96.54 L494.4,96.28 L497.5,96.01 L500.6,96.13 L503.7,95.92 L506.8,96.37 L509.9,96.43 L513.1,96.61 L516.2,96.58 L519.3,96.60 L522.4,96.61 L525.5,96.48 L528.6,96.43 L531.7,95.80 L534.9,95.85 L538.0,95.82 L541.1,96.08 L544.2,95.93 L547.3,95.89 L550.4,95.68 L553.5,95.67 L556.6,96.47 L559.8,96.90 L562.9,96.38 L566.0,96.08 L569.1,96.36 L572.2,96.12 L575.3,96.19 L578.4,96.19 L581.6,96.55 L584.7,96.58 L587.8,96.61 L590.9,96.38 L594.0,96.67 L597.1,96.96 L600.2,97.45 L603.3,97.36 L606.5,97.47 L609.6,97.07 L612.7,97.09 L615.8,96.78 L618.9,97.00 L622.0,96.90 L625.1,96.69 L628.2,96.80 L631.4,96.87 L634.5,96.69 L637.6,96.54 L640.7,96.44 L643.8,96.36 L646.9,96.15 L650.0,95.99 L653.2,96.20 L656.3,96.34 L659.4,96.33 L662.5,96.42 L665.6,96.60 L668.7,96.49 L671.8,96.51 L674.9,96.43 L678.1,96.74 L681.2,96.85 L684.3,96.58 L687.4,96.34 L690.5,96.75 L693.6,96.91 L696.7,96.86 L699.9,97.36 L703.0,97.56 L706.1,97.35 L709.2,97.56 L712.3,97.68 L715.4,97.42 L718.5,97.15 L721.6,97.25 L724.8,97.24 L727.9,96.89 L731.0,97.53 L734.1,97.56 L737.2,97.99 L740.3,98.03 L743.4,97.98 L746.5,98.23 L749.7,98.17 L752.8,97.69 L755.9,97.81 L759.0,97.37 L762.1,97.17 L765.2,96.80 L768.3,96.51 L771.5,96.62 L774.6,96.56 L777.7,96.29 L780.8,96.39 L783.9,96.60 L787.0,96.60 L790.1,96.44 L793.2,96.53 L796.4,96.56 L799.5,96.66 L802.6,97.04 L805.7,97.53 L808.8,97.49 L811.9,97.32 L815.0,97.30 L818.2,97.48 L821.3,97.49 L824.4,97.26 L827.5,96.95 L830.6,96.80 L833.7,96.68 L836.8,96.92 L839.9,97.50 L843.1,97.48 L846.2,97.34 L849.3,97.80 L852.4,97.65 L855.5,97.76 L858.6,97.64 L861.7,97.75 L864.8,97.92 L868.0,97.74 L871.1,97.31 L874.2,97.19 L877.3,97.22 L880.4,97.21 L883.5,96.86 L886.6,97.04 L889.8,96.68 L892.9,96.44 L896.0,96.44 L899.1,95.87 L902.2,95.44 L905.3,95.81 L908.4,95.82 L911.5,96.19 L914.7,96.33 L917.8,96.35 L920.9,96.59 L924.0,96.86 L927.1,96.86 L930.2,96.90 L933.3,97.17 L936.5,97.56 L939.6,97.84 L942.7,97.81 L945.8,97.19 L948.9,96.82 L952.0,96.93 L955.1,96.42 L958.2,96.08 L961.4,95.89 L964.5,96.15 L967.6,95.89 L970.7,95.38 L973.8,95.57 L976.9,95.92 L980.0,96.07 L983.1,95.89 L986.3,95.56 L989.4,95.75 L992.5,95.83 L995.6,95.85 L998.7,95.89 L1001.8,95.72 L1004.9,95.72 L1008.1,95.74 L1011.2,95.64 L1014.3,95.43 L1017.4,95.59 L1020.5,95.53 L1023.6,95.37 L1026.7,95.39 L1029.8,95.60 L1033.0,95.85 L1036.1,96.12 L1039.2,96.24 L1042.3,96.10" stroke="#8a7cc4" stroke-opacity="0.9"/><path d="M49.2,86.34 L52.3,85.92 L55.4,86.23 L58.5,86.16 L61.7,86.29 L64.8,86.39 L67.9,86.43 L71.0,87.06 L74.1,86.90 L77.2,86.51 L80.3,86.41 L83.4,86.37 L86.6,85.90 L89.7,85.85 L92.8,85.90 L95.9,86.11 L99.0,86.39 L102.1,86.45 L105.2,86.31 L108.4,86.38 L111.5,86.45 L114.6,86.39 L117.7,86.61 L120.8,86.53 L123.9,86.15 L127.0,86.32 L130.1,86.25 L133.3,85.76 L136.4,86.07 L139.5,86.18 L142.6,86.06 L145.7,86.30 L148.8,85.97 L151.9,85.70 L155.0,85.65 L158.2,85.85 L161.3,86.29 L164.4,86.25 L167.5,85.92 L170.6,85.94 L173.7,86.08 L176.8,86.22 L180.0,85.56 L183.1,85.95 L186.2,85.98 L189.3,85.79 L192.4,85.56 L195.5,86.11 L198.6,85.78 L201.7,85.91 L204.9,85.46 L208.0,85.65 L211.1,85.61 L214.2,85.84 L217.3,85.58 L220.4,85.84 L223.5,85.68 L226.7,85.80 L229.8,85.80 L232.9,85.51 L236.0,85.46 L239.1,85.83 L242.2,85.46 L245.3,85.73 L248.4,85.15 L251.6,85.84 L254.7,85.59 L257.8,85.38 L260.9,85.58 L264.0,85.68 L267.1,85.84 L270.2,85.52 L273.3,86.04 L276.5,85.69 L279.6,85.79 L282.7,85.58 L285.8,85.96 L288.9,85.61 L292.0,85.73 L295.1,85.75 L298.3,85.70 L301.4,86.19 L304.5,86.31 L307.6,85.69 L310.7,85.80 L313.8,86.10 L316.9,85.85 L320.0,85.77 L323.2,85.61 L326.3,85.84 L329.4,86.53 L332.5,85.93 L335.6,86.33 L338.7,86.56 L341.8,86.11 L345.0,86.44 L348.1,86.46 L351.2,86.28 L354.3,85.57 L357.4,85.64 L360.5,85.59 L363.6,86.15 L366.7,86.11 L369.9,85.92 L373.0,85.95 L376.1,85.55 L379.2,85.62 L382.3,85.96 L385.4,85.86 L388.5,85.72 L391.6,85.85 L394.8,85.57 L397.9,85.66 L401.0,85.86 L404.1,86.03 L407.2,85.45 L410.3,85.80 L413.4,85.78 L416.6,86.13 L419.7,85.91 L422.8,85.66 L425.9,85.49 L429.0,85.61 L432.1,85.53 L435.2,85.34 L438.3,85.41 L441.5,85.10 L444.6,85.38 L447.7,85.57 L450.8,85.84 L453.9,85.18 L457.0,85.58 L460.1,85.63 L463.3,85.58 L466.4,85.26 L469.5,85.23 L472.6,85.33 L475.7,85.66 L478.8,85.56 L481.9,85.40 L485.0,85.21 L488.2,85.46 L491.3,85.62 L494.4,85.06 L497.5,85.07 L500.6,85.29 L503.7,85.42 L506.8,85.08 L509.9,85.25 L513.1,85.59 L516.2,85.08 L519.3,84.77 L522.4,84.90 L525.5,85.19 L528.6,85.24 L531.7,84.97 L534.9,85.18 L538.0,85.14 L541.1,85.68 L544.2,85.55 L547.3,85.01 L550.4,84.91 L553.5,85.22 L556.6,85.10 L559.8,84.71 L562.9,85.65 L566.0,85.81 L569.1,85.75 L572.2,85.49 L575.3,85.52 L578.4,85.52 L581.6,85.26 L584.7,85.28 L587.8,85.23 L590.9,85.58 L594.0,85.73 L597.1,85.84 L600.2,85.31 L603.3,85.69 L606.5,85.95 L609.6,85.99 L612.7,85.78 L615.8,86.00 L618.9,86.01 L622.0,86.26 L625.1,86.06 L628.2,85.71 L631.4,85.70 L634.5,86.31 L637.6,86.25 L640.7,86.35 L643.8,86.50 L646.9,85.98 L650.0,86.13 L653.2,86.63 L656.3,86.50 L659.4,86.50 L662.5,86.19 L665.6,86.20 L668.7,85.86 L671.8,86.18 L674.9,86.37 L678.1,86.12 L681.2,86.27 L684.3,86.45 L687.4,86.06 L690.5,86.04 L693.6,86.07 L696.7,86.04 L699.9,85.61 L703.0,85.99 L706.1,86.08 L709.2,85.91 L712.3,85.92 L715.4,85.84 L718.5,85.97 L721.6,86.08 L724.8,85.97 L727.9,86.51 L731.0,86.34 L734.1,86.49 L737.2,85.81 L740.3,86.44 L743.4,86.55 L746.5,86.62 L749.7,86.79 L752.8,86.56 L755.9,86.27 L759.0,86.45 L762.1,86.65 L765.2,86.82 L768.3,86.61 L771.5,86.93 L774.6,86.76 L777.7,86.55 L780.8,86.23 L783.9,86.03 L787.0,85.80 L790.1,85.89 L793.2,85.77 L796.4,85.34 L799.5,85.58 L802.6,85.65 L805.7,85.51 L808.8,85.39 L811.9,85.68 L815.0,85.65 L818.2,85.85 L821.3,85.97 L824.4,85.96 L827.5,86.37 L830.6,86.07 L833.7,86.05 L836.8,86.09 L839.9,86.23 L843.1,86.29 L846.2,85.96 L849.3,85.65 L852.4,85.71 L855.5,85.58 L858.6,85.97 L861.7,86.32 L864.8,86.12 L868.0,86.61 L871.1,86.77 L874.2,86.35 L877.3,86.34 L880.4,86.81 L883.5,86.28 L886.6,86.23 L889.8,86.16 L892.9,86.08 L896.0,86.18 L899.1,86.25 L902.2,86.06 L905.3,85.86 L908.4,86.17 L911.5,86.12 L914.7,86.27 L917.8,86.31 L920.9,86.02 L924.0,86.21 L927.1,86.29 L930.2,86.29 L933.3,86.52 L936.5,86.11 L939.6,86.66 L942.7,86.70 L945.8,86.17 L948.9,86.21 L952.0,86.28 L955.1,86.28 L958.2,86.21 L961.4,86.05 L964.5,86.18 L967.6,86.48 L970.7,86.19 L973.8,85.94 L976.9,85.63 L980.0,86.19 L983.1,86.41 L986.3,86.12 L989.4,86.16 L992.5,85.90 L995.6,86.23 L998.7,86.35 L1001.8,85.49 L1004.9,86.10 L1008.1,86.30 L1011.2,86.19 L1014.3,86.16 L1017.4,86.28 L1020.5,86.38 L1023.6,86.21 L1026.7,86.06 L1029.8,86.32 L1033.0,86.16 L1036.1,85.69 L1039.2,85.83 L1042.3,85.80" stroke="#37872d" stroke-opacity="0.9"/><path d="M49.2,84.39 L52.3,84.44 L55.4,84.58 L58.5,84.66 L61.7,84.61 L64.8,84.34 L67.9,83.96 L71.0,84.13 L74.1,84.60 L77.2,83.95 L80.3,83.99 L83.4,83.94 L86.6,84.13 L89.7,83.88 L92.8,83.60 L95.9,83.53 L99.0,83.65 L102.1,83.43 L105.2,83.37 L108.4,83.41 L111.5,83.95 L114.6,83.82 L117.7,83.99 L120.8,83.37 L123.9,83.36 L127.0,83.31 L130.1,83.40 L133.3,83.46 L136.4,83.58 L139.5,83.17 L142.6,83.31 L145.7,83.45 L148.8,82.76 L151.9,82.88 L155.0,83.22 L158.2,83.34 L161.3,83.12 L164.4,83.24 L167.5,83.28 L170.6,83.19 L173.7,83.02 L176.8,83.07 L180.0,83.32 L183.1,83.08 L186.2,82.80 L189.3,82.65 L192.4,82.97 L195.5,82.76 L198.6,82.96 L201.7,83.26 L204.9,82.74 L208.0,83.06 L211.1,83.26 L214.2,83.18 L217.3,82.89 L220.4,83.00 L223.5,83.21 L226.7,83.26 L229.8,82.81 L232.9,83.17 L236.0,82.82 L239.1,83.02 L242.2,82.90 L245.3,83.32 L248.4,83.04 L251.6,83.02 L254.7,83.39 L257.8,82.91 L260.9,82.77 L264.0,83.05 L267.1,83.00 L270.2,83.02 L273.3,83.29 L276.5,83.34 L279.6,83.05 L282.7,83.19 L285.8,83.13 L288.9,83.14 L292.0,83.12 L295.1,82.96 L298.3,82.91 L301.4,82.94 L304.5,83.19 L307.6,83.15 L310.7,83.28 L313.8,83.39 L316.9,83.15 L320.0,83.22 L323.2,83.55 L326.3,83.13 L329.4,83.12 L332.5,83.39 L335.6,82.82 L338.7,83.06 L341.8,83.21 L345.0,82.73 L348.1,83.02 L351.2,83.00 L354.3,82.73 L357.4,83.02 L360.5,83.07 L363.6,82.83 L366.7,83.27 L369.9,82.90 L373.0,83.20 L376.1,83.51 L379.2,83.15 L382.3,82.98 L385.4,82.91 L388.5,83.08 L391.6,83.01 L394.8,82.98 L397.9,82.66 L401.0,82.66 L404.1,82.79 L407.2,82.88 L410.3,82.83 L413.4,83.01 L416.6,82.87 L419.7,82.93 L422.8,83.12 L425.9,82.78 L429.0,82.81 L432.1,82.72 L435.2,82.42 L438.3,82.51 L441.5,82.95 L444.6,82.84 L447.7,82.67 L450.8,82.53 L453.9,82.29 L457.0,82.39 L460.1,82.41 L463.3,82.41 L466.4,82.68 L469.5,82.75 L472.6,82.67 L475.7,82.45 L478.8,82.66 L481.9,82.35 L485.0,82.32 L488.2,82.45 L491.3,82.07 L494.4,82.35 L497.5,82.41 L500.6,82.42 L503.7,82.04 L506.8,82.19 L509.9,82.23 L513.1,82.31 L516.2,82.02 L519.3,82.29 L522.4,82.56 L525.5,82.32 L528.6,82.10 L531.7,82.50 L534.9,82.18 L538.0,82.16 L541.1,82.17 L544.2,82.02 L547.3,82.11 L550.4,81.96 L553.5,82.13 L556.6,81.86 L559.8,81.57 L562.9,81.75 L566.0,81.51 L569.1,82.13 L572.2,81.83 L575.3,81.78 L578.4,82.15 L581.6,81.93 L584.7,81.84 L587.8,81.49 L590.9,81.96 L594.0,81.95 L597.1,81.92 L600.2,81.80 L603.3,81.74 L606.5,81.77 L609.6,81.85 L612.7,81.58 L615.8,81.77 L618.9,81.86 L622.0,81.91 L625.1,81.73 L628.2,81.43 L631.4,82.06 L634.5,81.78 L637.6,81.82 L640.7,81.36 L643.8,81.33 L646.9,81.76 L650.0,81.53 L653.2,81.59 L656.3,81.69 L659.4,81.75 L662.5,81.47 L665.6,81.85 L668.7,81.94 L671.8,81.99 L674.9,82.00 L678.1,82.17 L681.2,82.02 L684.3,81.65 L687.4,81.76 L690.5,81.93 L693.6,81.88 L696.7,81.89 L699.9,81.55 L703.0,81.97 L706.1,81.72 L709.2,81.67 L712.3,81.60 L715.4,81.81 L718.5,81.90 L721.6,81.94 L724.8,81.73 L727.9,81.48 L731.0,81.83 L734.1,82.08 L737.2,81.94 L740.3,81.91 L743.4,81.67 L746.5,81.57 L749.7,81.31 L752.8,81.14 L755.9,81.67 L759.0,81.61 L762.1,81.46 L765.2,81.39 L768.3,81.44 L771.5,81.26 L774.6,81.39 L777.7,81.45 L780.8,81.70 L783.9,81.24 L787.0,81.26 L790.1,81.35 L793.2,81.65 L796.4,81.83 L799.5,81.61 L802.6,81.38 L805.7,81.51 L808.8,81.46 L811.9,81.53 L815.0,81.32 L818.2,81.41 L821.3,81.42 L824.4,81.40 L827.5,81.62 L830.6,81.58 L833.7,81.44 L836.8,81.71 L839.9,81.52 L843.1,81.64 L846.2,81.60 L849.3,81.39 L852.4,81.72 L855.5,81.76 L858.6,81.08 L861.7,81.75 L864.8,82.10 L868.0,82.70 L871.1,83.06 L874.2,82.94 L877.3,83.11 L880.4,83.21 L883.5,82.82 L886.6,82.76 L889.8,82.95 L892.9,83.02 L896.0,83.18 L899.1,83.44 L902.2,83.44 L905.3,83.07 L908.4,82.77 L911.5,83.21 L914.7,83.16 L917.8,83.25 L920.9,83.18 L924.0,83.13 L927.1,83.16 L930.2,83.36 L933.3,83.32 L936.5,83.37 L939.6,83.16 L942.7,82.81 L945.8,82.89 L948.9,82.88 L952.0,83.47 L955.1,83.10 L958.2,83.31 L961.4,82.92 L964.5,83.07 L967.6,83.08 L970.7,83.05 L973.8,83.19 L976.9,83.20 L980.0,83.23 L983.1,83.14 L986.3,83.38 L989.4,83.25 L992.5,83.12 L995.6,83.47 L998.7,83.24 L1001.8,83.36 L1004.9,83.23 L1008.1,83.02 L1011.2,82.82 L1014.3,83.23 L1017.4,83.42 L1020.5,83.27 L1023.6,83.16 L1026.7,83.08 L1029.8,83.39 L1033.0,83.07 L1036.1,82.79 L1039.2,83.20 L1042.3,83.13" stroke="#e0c82a" stroke-opacity="0.9"/><path d="M49.2,78.23 L52.3,78.29 L55.4,78.37 L58.5,78.31 L61.7,78.33 L64.8,78.37 L67.9,78.48 L71.0,78.52 L74.1,78.52 L77.2,78.40 L80.3,78.38 L83.4,78.23 L86.6,78.32 L89.7,78.15 L92.8,78.34 L95.9,78.46 L99.0,78.46 L102.1,78.41 L105.2,78.41 L108.4,78.35 L111.5,78.41 L114.6,78.33 L117.7,78.39 L120.8,78.45 L123.9,78.49 L127.0,78.23 L130.1,78.19 L133.3,78.29 L136.4,78.35 L139.5,78.47 L142.6,78.68 L145.7,78.42 L148.8,78.50 L151.9,78.41 L155.0,78.51 L158.2,78.22 L161.3,78.40 L164.4,78.44 L167.5,78.44 L170.6,78.60 L173.7,78.45 L176.8,78.49 L180.0,78.50 L183.1,78.63 L186.2,78.57 L189.3,78.51 L192.4,78.43 L195.5,78.32 L198.6,78.47 L201.7,78.44 L204.9,78.22 L208.0,78.25 L211.1,78.43 L214.2,78.57 L217.3,78.21 L220.4,78.10 L223.5,78.37 L226.7,78.28 L229.8,78.14 L232.9,78.29 L236.0,78.30 L239.1,78.28 L242.2,78.31 L245.3,78.31 L248.4,78.37 L251.6,78.25 L254.7,78.38 L257.8,78.20 L260.9,78.38 L264.0,78.28 L267.1,78.26 L270.2,78.16 L273.3,78.00 L276.5,78.00 L279.6,78.24 L282.7,78.14 L285.8,78.20 L288.9,78.06 L292.0,78.08 L295.1,78.21 L298.3,77.97 L301.4,78.08 L304.5,77.97 L307.6,77.99 L310.7,78.03 L313.8,78.12 L316.9,78.10 L320.0,77.90 L323.2,77.89 L326.3,77.98 L329.4,77.88 L332.5,78.02 L335.6,78.09 L338.7,78.13 L341.8,77.87 L345.0,77.88 L348.1,77.83 L351.2,77.77 L354.3,77.79 L357.4,77.99 L360.5,77.97 L363.6,77.81 L366.7,77.84 L369.9,77.91 L373.0,77.87 L376.1,77.95 L379.2,77.99 L382.3,77.85 L385.4,78.02 L388.5,78.02 L391.6,77.95 L394.8,77.90 L397.9,77.87 L401.0,77.91 L404.1,77.94 L407.2,77.87 L410.3,77.75 L413.4,77.92 L416.6,77.97 L419.7,77.79 L422.8,78.07 L425.9,78.04 L429.0,78.08 L432.1,78.04 L435.2,77.93 L438.3,77.98 L441.5,78.02 L444.6,77.93 L447.7,77.85 L450.8,77.91 L453.9,78.04 L457.0,78.05 L460.1,78.15 L463.3,77.98 L466.4,78.06 L469.5,78.00 L472.6,78.09 L475.7,78.12 L478.8,77.93 L481.9,77.89 L485.0,78.02 L488.2,78.01 L491.3,78.01 L494.4,78.40 L497.5,78.19 L500.6,78.00 L503.7,78.07 L506.8,78.17 L509.9,78.05 L513.1,78.17 L516.2,78.41 L519.3,78.13 L522.4,78.17 L525.5,78.08 L528.6,78.10 L531.7,78.21 L534.9,77.93 L538.0,78.09 L541.1,78.22 L544.2,78.12 L547.3,78.11 L550.4,78.11 L553.5,78.21 L556.6,78.31 L559.8,78.11 L562.9,78.06 L566.0,77.90 L569.1,77.84 L572.2,77.92 L575.3,77.90 L578.4,77.86 L581.6,77.95 L584.7,77.97 L587.8,77.93 L590.9,78.11 L594.0,78.01 L597.1,78.00 L600.2,77.98 L603.3,77.95 L606.5,77.96 L609.6,77.91 L612.7,77.81 L615.8,77.88 L618.9,78.10 L622.0,77.95 L625.1,78.05 L628.2,78.08 L631.4,78.04 L634.5,78.21 L637.6,78.05 L640.7,78.10 L643.8,77.87 L646.9,78.11 L650.0,78.13 L653.2,77.94 L656.3,77.97 L659.4,77.80 L662.5,77.82 L665.6,77.81 L668.7,78.03 L671.8,78.12 L674.9,78.10 L678.1,77.86 L681.2,77.95 L684.3,78.10 L687.4,78.30 L690.5,78.20 L693.6,78.01 L696.7,78.15 L699.9,78.19 L703.0,78.34 L706.1,78.27 L709.2,78.31 L712.3,78.28 L715.4,78.05 L718.5,78.20 L721.6,78.26 L724.8,78.19 L727.9,78.33 L731.0,78.23 L734.1,78.36 L737.2,78.28 L740.3,78.35 L743.4,78.17 L746.5,77.99 L749.7,77.98 L752.8,78.20 L755.9,78.23 L759.0,78.11 L762.1,78.12 L765.2,78.19 L768.3,78.29 L771.5,78.15 L774.6,78.34 L777.7,78.07 L780.8,78.22 L783.9,78.31 L787.0,78.36 L790.1,78.12 L793.2,78.02 L796.4,78.05 L799.5,78.31 L802.6,78.18 L805.7,78.23 L808.8,78.21 L811.9,78.25 L815.0,78.22 L818.2,78.37 L821.3,78.10 L824.4,78.29 L827.5,78.08 L830.6,78.18 L833.7,78.09 L836.8,78.16 L839.9,78.30 L843.1,78.25 L846.2,78.13 L849.3,78.23 L852.4,78.19 L855.5,78.20 L858.6,78.28 L861.7,78.28 L864.8,78.25 L868.0,78.03 L871.1,78.33 L874.2,78.09 L877.3,78.11 L880.4,78.32 L883.5,78.37 L886.6,78.40 L889.8,78.33 L892.9,78.12 L896.0,78.10 L899.1,78.26 L902.2,78.29 L905.3,78.11 L908.4,78.25 L911.5,78.37 L914.7,78.19 L917.8,78.20 L920.9,78.17 L924.0,77.95 L927.1,78.01 L930.2,78.05 L933.3,78.16 L936.5,78.09 L939.6,77.96 L942.7,78.14 L945.8,78.14 L948.9,77.92 L952.0,78.12 L955.1,78.14 L958.2,77.90 L961.4,77.91 L964.5,78.06 L967.6,78.14 L970.7,78.05 L973.8,78.20 L976.9,78.21 L980.0,78.18 L983.1,78.12 L986.3,78.09 L989.4,78.14 L992.5,78.12 L995.6,78.23 L998.7,78.25 L1001.8,78.11 L1004.9,78.24 L1008.1,78.21 L1011.2,78.02 L1014.3,77.90 L1017.4,78.07 L1020.5,78.15 L1023.6,78.12 L1026.7,78.13 L1029.8,78.14 L1033.0,78.17 L1036.1,78.22 L1039.2,78.06 L1042.3,77.95" stroke="#4a86c0" stroke-opacity="0.9"/></g><rect x="38.25" y="298.8" width="7" height="2.4" rx="1.2" fill="#80c876"/><text x="48.95" y="301.9" font-size="5.1" fill="#c0c1c8">t1</text><rect x="57.10" y="298.8" width="7" height="2.4" rx="1.2" fill="#f0d840"/><text x="67.80" y="301.9" font-size="5.1" fill="#c0c1c8">t2</text><rect x="75.95" y="298.8" width="7" height="2.4" rx="1.2" fill="#a4c4f4"/><text x="86.65" y="301.9" font-size="5.1" fill="#c0c1c8">t3</text><rect x="94.80" y="298.8" width="7" height="2.4" rx="1.2" fill="#ff9830"/><text x="105.50" y="301.9" font-size="5.1" fill="#c0c1c8">t4</text><rect x="113.65" y="298.8" width="7" height="2.4" rx="1.2" fill="#f2495c"/><text x="124.35" y="301.9" font-size="5.1" fill="#c0c1c8">t5</text><rect x="132.50" y="298.8" width="7" height="2.4" rx="1.2" fill="#5794f2"/><text x="143.20" y="301.9" font-size="5.1" fill="#c0c1c8">t6</text><rect x="151.35" y="298.8" width="7" height="2.4" rx="1.2" fill="#b877d9"/><text x="162.05" y="301.9" font-size="5.1" fill="#c0c1c8">t7</text><rect x="170.20" y="298.8" width="7" height="2.4" rx="1.2" fill="#8a7cc4"/><text x="180.90" y="301.9" font-size="5.1" fill="#c0c1c8">t8</text><rect x="189.05" y="298.8" width="7" height="2.4" rx="1.2" fill="#37872d"/><text x="199.75" y="301.9" font-size="5.1" fill="#c0c1c8">t9</text><rect x="207.90" y="298.8" width="7" height="2.4" rx="1.2" fill="#e0c82a"/><text x="218.60" y="301.9" font-size="5.1" fill="#c0c1c8">t10</text><rect x="229.40" y="298.8" width="7" height="2.4" rx="1.2" fill="#4a86c0"/><text x="240.10" y="301.9" font-size="5.1" fill="#c0c1c8">t11</text><path d="M1053,306 L1056,303" stroke="#55575e" stroke-width="0.6"/><rect x="27" y="311.5" width="1031" height="278.5" rx="1.2" fill="#181b1f" stroke="#202227" stroke-width="0.6"/><text x="507.6" y="321.2" font-size="6.2" fill="#d8d9de" textLength="71.7" lengthAdjust="spacingAndGlyphs">Температурный профиль</text><g shape-rendering="crispEdges"><rect x="41.80" y="333.80" width="3.50" height="21.09" fill="#3e7af7"/><rect x="45.30" y="333.80" width="13.93" height="21.09" fill="#3e7af7"/><rect x="59.23" y="333.80" width="13.93" height="21.09" fill="#3e7af7"/><rect x="73.16" y="333.80" width="13.93" height="21.09" fill="#3e7af7"/><rect x="87.08" y="333.80" width="13.93" height="21.09" fill="#3e7bf7"/><rect x="101.01" y="333.80" width="13.93" height="21.09" fill="#3e7bf7"/><rect x="114.94" y="333.80" width="13.93" height="21.09" fill="#3d7cf7"/><rect x="128.87" y="333.80" width="13.93" height="21.09" fill="#3d7cf7"/><rect x="142.80" y="333.80" width="13.93" height="21.09" fill="#3e7bf7"/><rect x="156.72" y="333.80" width="13.93" height="21.09" fill="#3d7cf7"/><rect x="170.65" y="333.80" width="13.93" height="21.09" fill="#3d7cf7"/><rect x="184.58" y="333.80" width="13.93" height="21.09" fill="#3d7df7"/><rect x="198.51" y="333.80" width="13.93" height="21.09" fill="#3d7df7"/><rect x="212.44" y="333.80" width="13.93" height="21.09" fill="#3d7cf7"/><rect x="226.36" y="333.80" width="13.93" height="21.09" fill="#3d7df7"/><rect x="240.29" y="333.80" width="13.93" height="21.09" fill="#3d7df8"/><rect x="254.22" y="333.80" width="13.93" height="21.09" fill="#3d7df8"/><rect x="268.15" y="333.80" width="13.93" height="21.09" fill="#3d7ef8"/><rect x="282.08" y="333.80" width="13.93" height="21.09" fill="#3d7df8"/><rect x="296.00" y="333.80" width="13.93" height="21.09" fill="#3c7ef8"/><rect x="309.93" y="333.80" width="13.93" height="21.09" fill="#3c7ef8"/><rect x="323.86" y="333.80" width="13.93" height="21.09" fill="#3c7ef8"/><rect x="337.79" y="333.80" width="13.93" height="21.09" fill="#3c7ef8"/><rect x="351.72" y="333.80" width="13.93" height="21.09" fill="#3c7ff8"/><rect x="365.64" y="333.80" width="13.93" height="21.09" fill="#3c7ff8"/><rect x="379.57" y="333.80" width="13.93" height="21.09" fill="#3c7ef8"/><rect x="393.50" y="333.80" width="13.93" height="21.09" fill="#3c7ff8"/><rect x="407.43" y="333.80" width="13.93" height="21.09" fill="#3c7ff8"/><rect x="421.36" y="333.80" width="13.93" height="21.09" fill="#3c7ff8"/><rect x="435.28" y="333.80" width="13.93" height="21.09" fill="#3c80f8"/><rect x="449.21" y="333.80" width="13.93" height="21.09" fill="#3a84f9"/><rect x="463.14" y="333.80" width="13.93" height="21.09" fill="#3a84f9"/><rect x="477.07" y="333.80" width="13.93" height="21.09" fill="#3a83f9"/><rect x="491.00" y="333.80" width="13.93" height="21.09" fill="#3a83f9"/><rect x="504.92" y="333.80" width="13.93" height="21.09" fill="#3a84f9"/><rect x="518.85" y="333.80" width="13.93" height="21.09" fill="#3a84f9"/><rect x="532.78" y="333.80" width="13.93" height="21.09" fill="#3a84f9"/><rect x="546.71" y="333.80" width="13.93" height="21.09" fill="#3a84f9"/><rect x="560.64" y="333.80" width="13.93" height="21.09" fill="#3a85f9"/><rect x="574.56" y="333.80" width="13.93" height="21.09" fill="#3985f9"/><rect x="588.49" y="333.80" width="13.93" height="21.09" fill="#3985f9"/><rect x="602.42" y="333.80" width="13.93" height="21.09" fill="#3986f9"/><rect x="616.35" y="333.80" width="13.93" height="21.09" fill="#3985f9"/><rect x="630.28" y="333.80" width="13.93" height="21.09" fill="#3985f9"/><rect x="644.20" y="333.80" width="13.93" height="21.09" fill="#3986f9"/><rect x="658.13" y="333.80" width="13.93" height="21.09" fill="#3986f9"/><rect x="672.06" y="333.80" width="13.93" height="21.09" fill="#3986f9"/><rect x="685.99" y="333.80" width="13.93" height="21.09" fill="#3986f9"/><rect x="699.92" y="333.80" width="13.93" height="21.09" fill="#3987f9"/><rect x="713.84" y="333.80" width="13.93" height="21.09" fill="#3987f9"/><rect x="727.77" y="333.80" width="13.93" height="21.09" fill="#3888f9"/><rect x="741.70" y="333.80" width="13.93" height="21.09" fill="#3887f9"/><rect x="755.63" y="333.80" width="13.93" height="21.09" fill="#3888f9"/><rect x="769.56" y="333.80" width="13.93" height="21.09" fill="#3888f9"/><rect x="783.48" y="333.80" width="13.93" height="21.09" fill="#3889f9"/><rect x="797.41" y="333.80" width="13.93" height="21.09" fill="#3889f9"/><rect x="811.34" y="333.80" width="13.93" height="21.09" fill="#3789f9"/><rect x="825.27" y="333.80" width="13.93" height="21.09" fill="#378af9"/><rect x="839.20" y="333.80" width="13.93" height="21.09" fill="#3789f9"/><rect x="853.12" y="333.80" width="13.93" height="21.09" fill="#378af9"/><rect x="867.05" y="333.80" width="13.93" height="21.09" fill="#378af9"/><rect x="880.98" y="333.80" width="13.93" height="21.09" fill="#378bf9"/><rect x="894.91" y="333.80" width="13.93" height="21.09" fill="#378af9"/><rect x="908.84" y="333.80" width="13.93" height="21.09" fill="#378bf9"/><rect x="922.76" y="333.80" width="13.93" height="21.09" fill="#368bf9"/><rect x="936.69" y="333.80" width="13.93" height="21.09" fill="#368df9"/><rect x="950.62" y="333.80" width="13.93" height="21.09" fill="#3491f8"/><rect x="964.55" y="333.80" width="13.93" height="21.09" fill="#3491f8"/><rect x="978.48" y="333.80" width="13.93" height="21.09" fill="#3490f8"/><rect x="992.40" y="333.80" width="13.93" height="21.09" fill="#3491f8"/><rect x="1006.33" y="333.80" width="13.93" height="21.09" fill="#3492f8"/><rect x="1020.26" y="333.80" width="13.93" height="21.09" fill="#3492f8"/><rect x="1034.19" y="333.80" width="13.81" height="21.09" fill="#3492f8"/><rect x="41.80" y="354.89" width="3.50" height="21.09" fill="#4270f2"/><rect x="45.30" y="354.89" width="13.93" height="21.09" fill="#4270f2"/><rect x="59.23" y="354.89" width="13.93" height="21.09" fill="#4271f3"/><rect x="73.16" y="354.89" width="13.93" height="21.09" fill="#4270f3"/><rect x="87.08" y="354.89" width="13.93" height="21.09" fill="#4272f3"/><rect x="101.01" y="354.89" width="13.93" height="21.09" fill="#4172f3"/><rect x="114.94" y="354.89" width="13.93" height="21.09" fill="#4172f3"/><rect x="128.87" y="354.89" width="13.93" height="21.09" fill="#4272f3"/><rect x="142.80" y="354.89" width="13.93" height="21.09" fill="#4173f4"/><rect x="156.72" y="354.89" width="13.93" height="21.09" fill="#4172f3"/><rect x="170.65" y="354.89" width="13.93" height="21.09" fill="#4172f3"/><rect x="184.58" y="354.89" width="13.93" height="21.09" fill="#4173f4"/><rect x="198.51" y="354.89" width="13.93" height="21.09" fill="#4173f4"/><rect x="212.44" y="354.89" width="13.93" height="21.09" fill="#4174f4"/><rect x="226.36" y="354.89" width="13.93" height="21.09" fill="#4174f4"/><rect x="240.29" y="354.89" width="13.93" height="21.09" fill="#4172f4"/><rect x="254.22" y="354.89" width="13.93" height="21.09" fill="#4174f4"/><rect x="268.15" y="354.89" width="13.93" height="21.09" fill="#4174f4"/><rect x="282.08" y="354.89" width="13.93" height="21.09" fill="#4074f5"/><rect x="296.00" y="354.89" width="13.93" height="21.09" fill="#4076f5"/><rect x="309.93" y="354.89" width="13.93" height="21.09" fill="#4075f5"/><rect x="323.86" y="354.89" width="13.93" height="21.09" fill="#4076f5"/><rect x="337.79" y="354.89" width="13.93" height="21.09" fill="#3f77f6"/><rect x="351.72" y="354.89" width="13.93" height="21.09" fill="#4077f5"/><rect x="365.64" y="354.89" width="13.93" height="21.09" fill="#4076f5"/><rect x="379.57" y="354.89" width="13.93" height="21.09" fill="#3f77f5"/><rect x="393.50" y="354.89" width="13.93" height="21.09" fill="#3f77f6"/><rect x="407.43" y="354.89" width="13.93" height="21.09" fill="#4076f5"/><rect x="421.36" y="354.89" width="13.93" height="21.09" fill="#3f77f6"/><rect x="435.28" y="354.89" width="13.93" height="21.09" fill="#4076f5"/><rect x="449.21" y="354.89" width="13.93" height="21.09" fill="#3f77f6"/><rect x="463.14" y="354.89" width="13.93" height="21.09" fill="#3f78f6"/><rect x="477.07" y="354.89" width="13.93" height="21.09" fill="#3f77f6"/><rect x="491.00" y="354.89" width="13.93" height="21.09" fill="#3f77f6"/><rect x="504.92" y="354.89" width="13.93" height="21.09" fill="#3f78f6"/><rect x="518.85" y="354.89" width="13.93" height="21.09" fill="#3f79f6"/><rect x="532.78" y="354.89" width="13.93" height="21.09" fill="#3f78f6"/><rect x="546.71" y="354.89" width="13.93" height="21.09" fill="#3f78f6"/><rect x="560.64" y="354.89" width="13.93" height="21.09" fill="#3e79f6"/><rect x="574.56" y="354.89" width="13.93" height="21.09" fill="#3f78f6"/><rect x="588.49" y="354.89" width="13.93" height="21.09" fill="#3e7bf7"/><rect x="602.42" y="354.89" width="13.93" height="21.09" fill="#3e7bf7"/><rect x="616.35" y="354.89" width="13.93" height="21.09" fill="#3e7bf7"/><rect x="630.28" y="354.89" width="13.93" height="21.09" fill="#3d7cf7"/><rect x="644.20" y="354.89" width="13.93" height="21.09" fill="#3d7cf7"/><rect x="658.13" y="354.89" width="13.93" height="21.09" fill="#3d7df7"/><rect x="672.06" y="354.89" width="13.93" height="21.09" fill="#3d7df7"/><rect x="685.99" y="354.89" width="13.93" height="21.09" fill="#3d7df8"/><rect x="699.92" y="354.89" width="13.93" height="21.09" fill="#3d7df7"/><rect x="713.84" y="354.89" width="13.93" height="21.09" fill="#3c7ef8"/><rect x="727.77" y="354.89" width="13.93" height="21.09" fill="#3c7ef8"/><rect x="741.70" y="354.89" width="13.93" height="21.09" fill="#3c7ef8"/><rect x="755.63" y="354.89" width="13.93" height="21.09" fill="#3c7ef8"/><rect x="769.56" y="354.89" width="13.93" height="21.09" fill="#3c7ff8"/><rect x="783.48" y="354.89" width="13.93" height="21.09" fill="#3c7ff8"/><rect x="797.41" y="354.89" width="13.93" height="21.09" fill="#3c7ef8"/><rect x="811.34" y="354.89" width="13.93" height="21.09" fill="#3b80f8"/><rect x="825.27" y="354.89" width="13.93" height="21.09" fill="#3b80f8"/><rect x="839.20" y="354.89" width="13.93" height="21.09" fill="#3c80f8"/><rect x="853.12" y="354.89" width="13.93" height="21.09" fill="#3b80f8"/><rect x="867.05" y="354.89" width="13.93" height="21.09" fill="#3b81f8"/><rect x="880.98" y="354.89" width="13.93" height="21.09" fill="#3b81f8"/><rect x="894.91" y="354.89" width="13.93" height="21.09" fill="#3b81f8"/><rect x="908.84" y="354.89" width="13.93" height="21.09" fill="#3b82f8"/><rect x="922.76" y="354.89" width="13.93" height="21.09" fill="#3b81f8"/><rect x="936.69" y="354.89" width="13.93" height="21.09" fill="#3b82f8"/><rect x="950.62" y="354.89" width="13.93" height="21.09" fill="#3a83f9"/><rect x="964.55" y="354.89" width="13.93" height="21.09" fill="#3a84f9"/><rect x="978.48" y="354.89" width="13.93" height="21.09" fill="#3a84f9"/><rect x="992.40" y="354.89" width="13.93" height="21.09" fill="#3a84f9"/><rect x="1006.33" y="354.89" width="13.93" height="21.09" fill="#3985f9"/><rect x="1020.26" y="354.89" width="13.93" height="21.09" fill="#3a84f9"/><rect x="1034.19" y="354.89" width="13.81" height="21.09" fill="#3985f9"/><rect x="41.80" y="375.98" width="3.50" height="21.09" fill="#26d2c9"/><rect x="45.30" y="375.98" width="13.93" height="21.09" fill="#25cfcd"/><rect x="59.23" y="375.98" width="13.93" height="21.09" fill="#26d3c9"/><rect x="73.16" y="375.98" width="13.93" height="21.09" fill="#25cfce"/><rect x="87.08" y="375.98" width="13.93" height="21.09" fill="#25cfce"/><rect x="101.01" y="375.98" width="13.93" height="21.09" fill="#25cece"/><rect x="114.94" y="375.98" width="13.93" height="21.09" fill="#25ccd2"/><rect x="128.87" y="375.98" width="13.93" height="21.09" fill="#25cecf"/><rect x="142.80" y="375.98" width="13.93" height="21.09" fill="#25cfcd"/><rect x="156.72" y="375.98" width="13.93" height="21.09" fill="#26d0cc"/><rect x="170.65" y="375.98" width="13.93" height="21.09" fill="#25cecf"/><rect x="184.58" y="375.98" width="13.93" height="21.09" fill="#25cece"/><rect x="198.51" y="375.98" width="13.93" height="21.09" fill="#25cecf"/><rect x="212.44" y="375.98" width="13.93" height="21.09" fill="#26d1cb"/><rect x="226.36" y="375.98" width="13.93" height="21.09" fill="#25cdcf"/><rect x="240.29" y="375.98" width="13.93" height="21.09" fill="#26d2ca"/><rect x="254.22" y="375.98" width="13.93" height="21.09" fill="#26d1cb"/><rect x="268.15" y="375.98" width="13.93" height="21.09" fill="#25cecf"/><rect x="282.08" y="375.98" width="13.93" height="21.09" fill="#25cfcd"/><rect x="296.00" y="375.98" width="13.93" height="21.09" fill="#25cecf"/><rect x="309.93" y="375.98" width="13.93" height="21.09" fill="#26d0cc"/><rect x="323.86" y="375.98" width="13.93" height="21.09" fill="#25ccd1"/><rect x="337.79" y="375.98" width="13.93" height="21.09" fill="#25cecf"/><rect x="351.72" y="375.98" width="13.93" height="21.09" fill="#25cecf"/><rect x="365.64" y="375.98" width="13.93" height="21.09" fill="#25cfcd"/><rect x="379.57" y="375.98" width="13.93" height="21.09" fill="#25cfce"/><rect x="393.50" y="375.98" width="13.93" height="21.09" fill="#25cecf"/><rect x="407.43" y="375.98" width="13.93" height="21.09" fill="#25ccd1"/><rect x="421.36" y="375.98" width="13.93" height="21.09" fill="#25cdcf"/><rect x="435.28" y="375.98" width="13.93" height="21.09" fill="#25cdd0"/><rect x="449.21" y="375.98" width="13.93" height="21.09" fill="#25d0cd"/><rect x="463.14" y="375.98" width="13.93" height="21.09" fill="#25cecf"/><rect x="477.07" y="375.98" width="13.93" height="21.09" fill="#25cece"/><rect x="491.00" y="375.98" width="13.93" height="21.09" fill="#26d0cd"/><rect x="504.92" y="375.98" width="13.93" height="21.09" fill="#25cece"/><rect x="518.85" y="375.98" width="13.93" height="21.09" fill="#25cdcf"/><rect x="532.78" y="375.98" width="13.93" height="21.09" fill="#25ccd1"/><rect x="546.71" y="375.98" width="13.93" height="21.09" fill="#25cdd0"/><rect x="560.64" y="375.98" width="13.93" height="21.09" fill="#25cfce"/><rect x="574.56" y="375.98" width="13.93" height="21.09" fill="#25cfcd"/><rect x="588.49" y="375.98" width="13.93" height="21.09" fill="#26d0cc"/><rect x="602.42" y="375.98" width="13.93" height="21.09" fill="#25cfce"/><rect x="616.35" y="375.98" width="13.93" height="21.09" fill="#25cfce"/><rect x="630.28" y="375.98" width="13.93" height="21.09" fill="#25cdd0"/><rect x="644.20" y="375.98" width="13.93" height="21.09" fill="#25cece"/><rect x="658.13" y="375.98" width="13.93" height="21.09" fill="#26d1cc"/><rect x="672.06" y="375.98" width="13.93" height="21.09" fill="#25cfce"/><rect x="685.99" y="375.98" width="13.93" height="21.09" fill="#25cfce"/><rect x="699.92" y="375.98" width="13.93" height="21.09" fill="#26d1cb"/><rect x="713.84" y="375.98" width="13.93" height="21.09" fill="#25cdcf"/><rect x="727.77" y="375.98" width="13.93" height="21.09" fill="#25cbd2"/><rect x="741.70" y="375.98" width="13.93" height="21.09" fill="#25cbd2"/><rect x="755.63" y="375.98" width="13.93" height="21.09" fill="#25cfcd"/><rect x="769.56" y="375.98" width="13.93" height="21.09" fill="#25cecf"/><rect x="783.48" y="375.98" width="13.93" height="21.09" fill="#26d1cb"/><rect x="797.41" y="375.98" width="13.93" height="21.09" fill="#25ccd1"/><rect x="811.34" y="375.98" width="13.93" height="21.09" fill="#26d0cc"/><rect x="825.27" y="375.98" width="13.93" height="21.09" fill="#25ccd1"/><rect x="839.20" y="375.98" width="13.93" height="21.09" fill="#25cbd2"/><rect x="853.12" y="375.98" width="13.93" height="21.09" fill="#25cbd2"/><rect x="867.05" y="375.98" width="13.93" height="21.09" fill="#26d1cb"/><rect x="880.98" y="375.98" width="13.93" height="21.09" fill="#25ccd1"/><rect x="894.91" y="375.98" width="13.93" height="21.09" fill="#26d0cc"/><rect x="908.84" y="375.98" width="13.93" height="21.09" fill="#25d0cd"/><rect x="922.76" y="375.98" width="13.93" height="21.09" fill="#25cecf"/><rect x="936.69" y="375.98" width="13.93" height="21.09" fill="#26d1cb"/><rect x="950.62" y="375.98" width="13.93" height="21.09" fill="#26d3c8"/><rect x="964.55" y="375.98" width="13.93" height="21.09" fill="#26d3c9"/><rect x="978.48" y="375.98" width="13.93" height="21.09" fill="#27d5c6"/><rect x="992.40" y="375.98" width="13.93" height="21.09" fill="#27d6c5"/><rect x="1006.33" y="375.98" width="13.93" height="21.09" fill="#28d8c1"/><rect x="1020.26" y="375.98" width="13.93" height="21.09" fill="#27d7c4"/><rect x="1034.19" y="375.98" width="13.81" height="21.09" fill="#28dabf"/><rect x="41.80" y="397.07" width="3.50" height="21.09" fill="#6efe67"/><rect x="45.30" y="397.07" width="13.93" height="21.09" fill="#6ffe67"/><rect x="59.23" y="397.07" width="13.93" height="21.09" fill="#6dfe68"/><rect x="73.16" y="397.07" width="13.93" height="21.09" fill="#6dfe68"/><rect x="87.08" y="397.07" width="13.93" height="21.09" fill="#6cfd69"/><rect x="101.01" y="397.07" width="13.93" height="21.09" fill="#6cfd69"/><rect x="114.94" y="397.07" width="13.93" height="21.09" fill="#6ffe67"/><rect x="128.87" y="397.07" width="13.93" height="21.09" fill="#6ffe67"/><rect x="142.80" y="397.07" width="13.93" height="21.09" fill="#6cfd69"/><rect x="156.72" y="397.07" width="13.93" height="21.09" fill="#72fe65"/><rect x="170.65" y="397.07" width="13.93" height="21.09" fill="#71fe66"/><rect x="184.58" y="397.07" width="13.93" height="21.09" fill="#6efe68"/><rect x="198.51" y="397.07" width="13.93" height="21.09" fill="#71fe65"/><rect x="212.44" y="397.07" width="13.93" height="21.09" fill="#73fe64"/><rect x="226.36" y="397.07" width="13.93" height="21.09" fill="#78fe61"/><rect x="240.29" y="397.07" width="13.93" height="21.09" fill="#74fe64"/><rect x="254.22" y="397.07" width="13.93" height="21.09" fill="#75fe63"/><rect x="268.15" y="397.07" width="13.93" height="21.09" fill="#75fe63"/><rect x="282.08" y="397.07" width="13.93" height="21.09" fill="#72fe65"/><rect x="296.00" y="397.07" width="13.93" height="21.09" fill="#6ffe67"/><rect x="309.93" y="397.07" width="13.93" height="21.09" fill="#71fe65"/><rect x="323.86" y="397.07" width="13.93" height="21.09" fill="#75fe63"/><rect x="337.79" y="397.07" width="13.93" height="21.09" fill="#70fe66"/><rect x="351.72" y="397.07" width="13.93" height="21.09" fill="#6ffe67"/><rect x="365.64" y="397.07" width="13.93" height="21.09" fill="#6cfd69"/><rect x="379.57" y="397.07" width="13.93" height="21.09" fill="#6cfd69"/><rect x="393.50" y="397.07" width="13.93" height="21.09" fill="#70fe66"/><rect x="407.43" y="397.07" width="13.93" height="21.09" fill="#6cfd69"/><rect x="421.36" y="397.07" width="13.93" height="21.09" fill="#73fe64"/><rect x="435.28" y="397.07" width="13.93" height="21.09" fill="#72fe65"/><rect x="449.21" y="397.07" width="13.93" height="21.09" fill="#73fe64"/><rect x="463.14" y="397.07" width="13.93" height="21.09" fill="#6efe67"/><rect x="477.07" y="397.07" width="13.93" height="21.09" fill="#6afd6b"/><rect x="491.00" y="397.07" width="13.93" height="21.09" fill="#72fe65"/><rect x="504.92" y="397.07" width="13.93" height="21.09" fill="#75fe63"/><rect x="518.85" y="397.07" width="13.93" height="21.09" fill="#75fe63"/><rect x="532.78" y="397.07" width="13.93" height="21.09" fill="#75fe63"/><rect x="546.71" y="397.07" width="13.93" height="21.09" fill="#77fe61"/><rect x="560.64" y="397.07" width="13.93" height="21.09" fill="#75fe63"/><rect x="574.56" y="397.07" width="13.93" height="21.09" fill="#73fe65"/><rect x="588.49" y="397.07" width="13.93" height="21.09" fill="#77fe61"/><rect x="602.42" y="397.07" width="13.93" height="21.09" fill="#75fe63"/><rect x="616.35" y="397.07" width="13.93" height="21.09" fill="#6ffe67"/><rect x="630.28" y="397.07" width="13.93" height="21.09" fill="#6ffe67"/><rect x="644.20" y="397.07" width="13.93" height="21.09" fill="#73fe64"/><rect x="658.13" y="397.07" width="13.93" height="21.09" fill="#72fe65"/><rect x="672.06" y="397.07" width="13.93" height="21.09" fill="#77fe62"/><rect x="685.99" y="397.07" width="13.93" height="21.09" fill="#73fe64"/><rect x="699.92" y="397.07" width="13.93" height="21.09" fill="#75fe63"/><rect x="713.84" y="397.07" width="13.93" height="21.09" fill="#6ffe67"/><rect x="727.77" y="397.07" width="13.93" height="21.09" fill="#70fe67"/><rect x="741.70" y="397.07" width="13.93" height="21.09" fill="#6efe67"/><rect x="755.63" y="397.07" width="13.93" height="21.09" fill="#70fe66"/><rect x="769.56" y="397.07" width="13.93" height="21.09" fill="#72fe65"/><rect x="783.48" y="397.07" width="13.93" height="21.09" fill="#76fe62"/><rect x="797.41" y="397.07" width="13.93" height="21.09" fill="#73fe64"/><rect x="811.34" y="397.07" width="13.93" height="21.09" fill="#77fe62"/><rect x="825.27" y="397.07" width="13.93" height="21.09" fill="#79fe60"/><rect x="839.20" y="397.07" width="13.93" height="21.09" fill="#80fd5c"/><rect x="853.12" y="397.07" width="13.93" height="21.09" fill="#85fd59"/><rect x="867.05" y="397.07" width="13.93" height="21.09" fill="#79fe60"/><rect x="880.98" y="397.07" width="13.93" height="21.09" fill="#76fe62"/><rect x="894.91" y="397.07" width="13.93" height="21.09" fill="#80fd5c"/><rect x="908.84" y="397.07" width="13.93" height="21.09" fill="#80fd5c"/><rect x="922.76" y="397.07" width="13.93" height="21.09" fill="#83fd5a"/><rect x="936.69" y="397.07" width="13.93" height="21.09" fill="#82fd5b"/><rect x="950.62" y="397.07" width="13.93" height="21.09" fill="#84fd5a"/><rect x="964.55" y="397.07" width="13.93" height="21.09" fill="#85fd59"/><rect x="978.48" y="397.07" width="13.93" height="21.09" fill="#83fd5a"/><rect x="992.40" y="397.07" width="13.93" height="21.09" fill="#82fd5b"/><rect x="1006.33" y="397.07" width="13.93" height="21.09" fill="#83fd5a"/><rect x="1020.26" y="397.07" width="13.93" height="21.09" fill="#8ffc54"/><rect x="1034.19" y="397.07" width="13.81" height="21.09" fill="#8ffc54"/><rect x="41.80" y="418.16" width="3.50" height="21.09" fill="#ddde33"/><rect x="45.30" y="418.16" width="13.93" height="21.09" fill="#dcde33"/><rect x="59.23" y="418.16" width="13.93" height="21.09" fill="#dedd32"/><rect x="73.16" y="418.16" width="13.93" height="21.09" fill="#e2da31"/><rect x="87.08" y="418.16" width="13.93" height="21.09" fill="#e3d931"/><rect x="101.01" y="418.16" width="13.93" height="21.09" fill="#e4d830"/><rect x="114.94" y="418.16" width="13.93" height="21.09" fill="#e5d730"/><rect x="128.87" y="418.16" width="13.93" height="21.09" fill="#e4d830"/><rect x="142.80" y="418.16" width="13.93" height="21.09" fill="#e5d830"/><rect x="156.72" y="418.16" width="13.93" height="21.09" fill="#e4d830"/><rect x="170.65" y="418.16" width="13.93" height="21.09" fill="#e4d830"/><rect x="184.58" y="418.16" width="13.93" height="21.09" fill="#e2d931"/><rect x="198.51" y="418.16" width="13.93" height="21.09" fill="#e1db32"/><rect x="212.44" y="418.16" width="13.93" height="21.09" fill="#e5d830"/><rect x="226.36" y="418.16" width="13.93" height="21.09" fill="#e0db32"/><rect x="240.29" y="418.16" width="13.93" height="21.09" fill="#e6d630"/><rect x="254.22" y="418.16" width="13.93" height="21.09" fill="#e8d52f"/><rect x="268.15" y="418.16" width="13.93" height="21.09" fill="#e1da31"/><rect x="282.08" y="418.16" width="13.93" height="21.09" fill="#e2da31"/><rect x="296.00" y="418.16" width="13.93" height="21.09" fill="#e1db32"/><rect x="309.93" y="418.16" width="13.93" height="21.09" fill="#e6d730"/><rect x="323.86" y="418.16" width="13.93" height="21.09" fill="#e3d931"/><rect x="337.79" y="418.16" width="13.93" height="21.09" fill="#dfdc32"/><rect x="351.72" y="418.16" width="13.93" height="21.09" fill="#e2da31"/><rect x="365.64" y="418.16" width="13.93" height="21.09" fill="#e2da31"/><rect x="379.57" y="418.16" width="13.93" height="21.09" fill="#e6d730"/><rect x="393.50" y="418.16" width="13.93" height="21.09" fill="#e1da31"/><rect x="407.43" y="418.16" width="13.93" height="21.09" fill="#e0db32"/><rect x="421.36" y="418.16" width="13.93" height="21.09" fill="#dedd32"/><rect x="435.28" y="418.16" width="13.93" height="21.09" fill="#e0db32"/><rect x="449.21" y="418.16" width="13.93" height="21.09" fill="#dfdc32"/><rect x="463.14" y="418.16" width="13.93" height="21.09" fill="#e1da31"/><rect x="477.07" y="418.16" width="13.93" height="21.09" fill="#e3d931"/><rect x="491.00" y="418.16" width="13.93" height="21.09" fill="#e3d931"/><rect x="504.92" y="418.16" width="13.93" height="21.09" fill="#e4d830"/><rect x="518.85" y="418.16" width="13.93" height="21.09" fill="#e5d730"/><rect x="532.78" y="418.16" width="13.93" height="21.09" fill="#e6d730"/><rect x="546.71" y="418.16" width="13.93" height="21.09" fill="#e5d830"/><rect x="560.64" y="418.16" width="13.93" height="21.09" fill="#e2d931"/><rect x="574.56" y="418.16" width="13.93" height="21.09" fill="#e2da31"/><rect x="588.49" y="418.16" width="13.93" height="21.09" fill="#e3d931"/><rect x="602.42" y="418.16" width="13.93" height="21.09" fill="#e1db32"/><rect x="616.35" y="418.16" width="13.93" height="21.09" fill="#ddde33"/><rect x="630.28" y="418.16" width="13.93" height="21.09" fill="#e0dc32"/><rect x="644.20" y="418.16" width="13.93" height="21.09" fill="#e4d830"/><rect x="658.13" y="418.16" width="13.93" height="21.09" fill="#dedd32"/><rect x="672.06" y="418.16" width="13.93" height="21.09" fill="#e0db32"/><rect x="685.99" y="418.16" width="13.93" height="21.09" fill="#dfdc32"/><rect x="699.92" y="418.16" width="13.93" height="21.09" fill="#ddde33"/><rect x="713.84" y="418.16" width="13.93" height="21.09" fill="#e2da31"/><rect x="727.77" y="418.16" width="13.93" height="21.09" fill="#e3d931"/><rect x="741.70" y="418.16" width="13.93" height="21.09" fill="#dedd33"/><rect x="755.63" y="418.16" width="13.93" height="21.09" fill="#e2da31"/><rect x="769.56" y="418.16" width="13.93" height="21.09" fill="#e1db31"/><rect x="783.48" y="418.16" width="13.93" height="21.09" fill="#e1db32"/><rect x="797.41" y="418.16" width="13.93" height="21.09" fill="#e3d931"/><rect x="811.34" y="418.16" width="13.93" height="21.09" fill="#e1da31"/><rect x="825.27" y="418.16" width="13.93" height="21.09" fill="#e3d931"/><rect x="839.20" y="418.16" width="13.93" height="21.09" fill="#e4d830"/><rect x="853.12" y="418.16" width="13.93" height="21.09" fill="#e3d931"/><rect x="867.05" y="418.16" width="13.93" height="21.09" fill="#e5d830"/><rect x="880.98" y="418.16" width="13.93" height="21.09" fill="#e5d830"/><rect x="894.91" y="418.16" width="13.93" height="21.09" fill="#ddde33"/><rect x="908.84" y="418.16" width="13.93" height="21.09" fill="#dfdc32"/><rect x="922.76" y="418.16" width="13.93" height="21.09" fill="#e6d730"/><rect x="936.69" y="418.16" width="13.93" height="21.09" fill="#e5d830"/><rect x="950.62" y="418.16" width="13.93" height="21.09" fill="#e6d730"/><rect x="964.55" y="418.16" width="13.93" height="21.09" fill="#e3d931"/><rect x="978.48" y="418.16" width="13.93" height="21.09" fill="#e2da31"/><rect x="992.40" y="418.16" width="13.93" height="21.09" fill="#e1da31"/><rect x="1006.33" y="418.16" width="13.93" height="21.09" fill="#e2da31"/><rect x="1020.26" y="418.16" width="13.93" height="21.09" fill="#dddd33"/><rect x="1034.19" y="418.16" width="13.81" height="21.09" fill="#dbdf33"/><rect x="41.80" y="439.25" width="3.50" height="21.09" fill="#ff9520"/><rect x="45.30" y="439.25" width="13.93" height="21.09" fill="#ff9821"/><rect x="59.23" y="439.25" width="13.93" height="21.09" fill="#ff9821"/><rect x="73.16" y="439.25" width="13.93" height="21.09" fill="#ff9b21"/><rect x="87.08" y="439.25" width="13.93" height="21.09" fill="#ff9a21"/><rect x="101.01" y="439.25" width="13.93" height="21.09" fill="#ff9a21"/><rect x="114.94" y="439.25" width="13.93" height="21.09" fill="#ff9a21"/><rect x="128.87" y="439.25" width="13.93" height="21.09" fill="#ff9b21"/><rect x="142.80" y="439.25" width="13.93" height="21.09" fill="#ff9721"/><rect x="156.72" y="439.25" width="13.93" height="21.09" fill="#ff9a21"/><rect x="170.65" y="439.25" width="13.93" height="21.09" fill="#ff9721"/><rect x="184.58" y="439.25" width="13.93" height="21.09" fill="#ff9621"/><rect x="198.51" y="439.25" width="13.93" height="21.09" fill="#ff9821"/><rect x="212.44" y="439.25" width="13.93" height="21.09" fill="#ff9921"/><rect x="226.36" y="439.25" width="13.93" height="21.09" fill="#ff9b21"/><rect x="240.29" y="439.25" width="13.93" height="21.09" fill="#ff9a21"/><rect x="254.22" y="439.25" width="13.93" height="21.09" fill="#ff9c21"/><rect x="268.15" y="439.25" width="13.93" height="21.09" fill="#ff9c22"/><rect x="282.08" y="439.25" width="13.93" height="21.09" fill="#ff9c22"/><rect x="296.00" y="439.25" width="13.93" height="21.09" fill="#ff9e22"/><rect x="309.93" y="439.25" width="13.93" height="21.09" fill="#ff9c22"/><rect x="323.86" y="439.25" width="13.93" height="21.09" fill="#ff9a21"/><rect x="337.79" y="439.25" width="13.93" height="21.09" fill="#ff9a21"/><rect x="351.72" y="439.25" width="13.93" height="21.09" fill="#ff9b21"/><rect x="365.64" y="439.25" width="13.93" height="21.09" fill="#ff9a21"/><rect x="379.57" y="439.25" width="13.93" height="21.09" fill="#ff9821"/><rect x="393.50" y="439.25" width="13.93" height="21.09" fill="#ff9821"/><rect x="407.43" y="439.25" width="13.93" height="21.09" fill="#ff9a21"/><rect x="421.36" y="439.25" width="13.93" height="21.09" fill="#ff9821"/><rect x="435.28" y="439.25" width="13.93" height="21.09" fill="#ff9821"/><rect x="449.21" y="439.25" width="13.93" height="21.09" fill="#ff9821"/><rect x="463.14" y="439.25" width="13.93" height="21.09" fill="#ff9721"/><rect x="477.07" y="439.25" width="13.93" height="21.09" fill="#ff9921"/><rect x="491.00" y="439.25" width="13.93" height="21.09" fill="#ff9821"/><rect x="504.92" y="439.25" width="13.93" height="21.09" fill="#ff9b21"/><rect x="518.85" y="439.25" width="13.93" height="21.09" fill="#ff9a21"/><rect x="532.78" y="439.25" width="13.93" height="21.09" fill="#ff9a21"/><rect x="546.71" y="439.25" width="13.93" height="21.09" fill="#ff9921"/><rect x="560.64" y="439.25" width="13.93" height="21.09" fill="#ff9621"/><rect x="574.56" y="439.25" width="13.93" height="21.09" fill="#ff9821"/><rect x="588.49" y="439.25" width="13.93" height="21.09" fill="#ff9921"/><rect x="602.42" y="439.25" width="13.93" height="21.09" fill="#ff9520"/><rect x="616.35" y="439.25" width="13.93" height="21.09" fill="#ff9721"/><rect x="630.28" y="439.25" width="13.93" height="21.09" fill="#ff9621"/><rect x="644.20" y="439.25" width="13.93" height="21.09" fill="#ff9921"/><rect x="658.13" y="439.25" width="13.93" height="21.09" fill="#ff9821"/><rect x="672.06" y="439.25" width="13.93" height="21.09" fill="#ff9821"/><rect x="685.99" y="439.25" width="13.93" height="21.09" fill="#ff9520"/><rect x="699.92" y="439.25" width="13.93" height="21.09" fill="#ff9020"/><rect x="713.84" y="439.25" width="13.93" height="21.09" fill="#ff9320"/><rect x="727.77" y="439.25" width="13.93" height="21.09" fill="#ff9320"/><rect x="741.70" y="439.25" width="13.93" height="21.09" fill="#ff9621"/><rect x="755.63" y="439.25" width="13.93" height="21.09" fill="#ff9420"/><rect x="769.56" y="439.25" width="13.93" height="21.09" fill="#ff9320"/><rect x="783.48" y="439.25" width="13.93" height="21.09" fill="#ff9520"/><rect x="797.41" y="439.25" width="13.93" height="21.09" fill="#ff9621"/><rect x="811.34" y="439.25" width="13.93" height="21.09" fill="#ff9420"/><rect x="825.27" y="439.25" width="13.93" height="21.09" fill="#ff9721"/><rect x="839.20" y="439.25" width="13.93" height="21.09" fill="#ff9721"/><rect x="853.12" y="439.25" width="13.93" height="21.09" fill="#ff9921"/><rect x="867.05" y="439.25" width="13.93" height="21.09" fill="#ff9621"/><rect x="880.98" y="439.25" width="13.93" height="21.09" fill="#ff9520"/><rect x="894.91" y="439.25" width="13.93" height="21.09" fill="#ff9621"/><rect x="908.84" y="439.25" width="13.93" height="21.09" fill="#ff9120"/><rect x="922.76" y="439.25" width="13.93" height="21.09" fill="#ff9320"/><rect x="936.69" y="439.25" width="13.93" height="21.09" fill="#ff9921"/><rect x="950.62" y="439.25" width="13.93" height="21.09" fill="#ff9320"/><rect x="964.55" y="439.25" width="13.93" height="21.09" fill="#ff9520"/><rect x="978.48" y="439.25" width="13.93" height="21.09" fill="#ff9420"/><rect x="992.40" y="439.25" width="13.93" height="21.09" fill="#ff9320"/><rect x="1006.33" y="439.25" width="13.93" height="21.09" fill="#ff9520"/><rect x="1020.26" y="439.25" width="13.93" height="21.09" fill="#ff9721"/><rect x="1034.19" y="439.25" width="13.81" height="21.09" fill="#ff9721"/><rect x="41.80" y="460.35" width="3.50" height="21.09" fill="#f86218"/><rect x="45.30" y="460.35" width="13.93" height="21.09" fill="#f65f18"/><rect x="59.23" y="460.35" width="13.93" height="21.09" fill="#f65f18"/><rect x="73.16" y="460.35" width="13.93" height="21.09" fill="#f55d17"/><rect x="87.08" y="460.35" width="13.93" height="21.09" fill="#f55d17"/><rect x="101.01" y="460.35" width="13.93" height="21.09" fill="#f55e17"/><rect x="114.94" y="460.35" width="13.93" height="21.09" fill="#f55e17"/><rect x="128.87" y="460.35" width="13.93" height="21.09" fill="#f65f18"/><rect x="142.80" y="460.35" width="13.93" height="21.09" fill="#f76118"/><rect x="156.72" y="460.35" width="13.93" height="21.09" fill="#f66018"/><rect x="170.65" y="460.35" width="13.93" height="21.09" fill="#f55e17"/><rect x="184.58" y="460.35" width="13.93" height="21.09" fill="#f45c17"/><rect x="198.51" y="460.35" width="13.93" height="21.09" fill="#f55e17"/><rect x="212.44" y="460.35" width="13.93" height="21.09" fill="#f55e17"/><rect x="226.36" y="460.35" width="13.93" height="21.09" fill="#f65f18"/><rect x="240.29" y="460.35" width="13.93" height="21.09" fill="#f76118"/><rect x="254.22" y="460.35" width="13.93" height="21.09" fill="#f86318"/><rect x="268.15" y="460.35" width="13.93" height="21.09" fill="#f96418"/><rect x="282.08" y="460.35" width="13.93" height="21.09" fill="#f86218"/><rect x="296.00" y="460.35" width="13.93" height="21.09" fill="#f55e17"/><rect x="309.93" y="460.35" width="13.93" height="21.09" fill="#f45c17"/><rect x="323.86" y="460.35" width="13.93" height="21.09" fill="#f55d17"/><rect x="337.79" y="460.35" width="13.93" height="21.09" fill="#f65f17"/><rect x="351.72" y="460.35" width="13.93" height="21.09" fill="#f65f17"/><rect x="365.64" y="460.35" width="13.93" height="21.09" fill="#f55e17"/><rect x="379.57" y="460.35" width="13.93" height="21.09" fill="#f55e17"/><rect x="393.50" y="460.35" width="13.93" height="21.09" fill="#f45c17"/><rect x="407.43" y="460.35" width="13.93" height="21.09" fill="#f35b17"/><rect x="421.36" y="460.35" width="13.93" height="21.09" fill="#f45c17"/><rect x="435.28" y="460.35" width="13.93" height="21.09" fill="#f55e17"/><rect x="449.21" y="460.35" width="13.93" height="21.09" fill="#f55e17"/><rect x="463.14" y="460.35" width="13.93" height="21.09" fill="#f55d17"/><rect x="477.07" y="460.35" width="13.93" height="21.09" fill="#f45c17"/><rect x="491.00" y="460.35" width="13.93" height="21.09" fill="#f55d17"/><rect x="504.92" y="460.35" width="13.93" height="21.09" fill="#f55d17"/><rect x="518.85" y="460.35" width="13.93" height="21.09" fill="#f55e17"/><rect x="532.78" y="460.35" width="13.93" height="21.09" fill="#f65f18"/><rect x="546.71" y="460.35" width="13.93" height="21.09" fill="#f76018"/><rect x="560.64" y="460.35" width="13.93" height="21.09" fill="#f65f17"/><rect x="574.56" y="460.35" width="13.93" height="21.09" fill="#f66018"/><rect x="588.49" y="460.35" width="13.93" height="21.09" fill="#f66018"/><rect x="602.42" y="460.35" width="13.93" height="21.09" fill="#f55e17"/><rect x="616.35" y="460.35" width="13.93" height="21.09" fill="#f66018"/><rect x="630.28" y="460.35" width="13.93" height="21.09" fill="#f76118"/><rect x="644.20" y="460.35" width="13.93" height="21.09" fill="#f76118"/><rect x="658.13" y="460.35" width="13.93" height="21.09" fill="#f76118"/><rect x="672.06" y="460.35" width="13.93" height="21.09" fill="#f96318"/><rect x="685.99" y="460.35" width="13.93" height="21.09" fill="#f86218"/><rect x="699.92" y="460.35" width="13.93" height="21.09" fill="#f65f18"/><rect x="713.84" y="460.35" width="13.93" height="21.09" fill="#f65f18"/><rect x="727.77" y="460.35" width="13.93" height="21.09" fill="#f86218"/><rect x="741.70" y="460.35" width="13.93" height="21.09" fill="#f76118"/><rect x="755.63" y="460.35" width="13.93" height="21.09" fill="#f86218"/><rect x="769.56" y="460.35" width="13.93" height="21.09" fill="#f86318"/><rect x="783.48" y="460.35" width="13.93" height="21.09" fill="#f66018"/><rect x="797.41" y="460.35" width="13.93" height="21.09" fill="#f65f18"/><rect x="811.34" y="460.35" width="13.93" height="21.09" fill="#f55d17"/><rect x="825.27" y="460.35" width="13.93" height="21.09" fill="#f55d17"/><rect x="839.20" y="460.35" width="13.93" height="21.09" fill="#f65f18"/><rect x="853.12" y="460.35" width="13.93" height="21.09" fill="#f76118"/><rect x="867.05" y="460.35" width="13.93" height="21.09" fill="#f76118"/><rect x="880.98" y="460.35" width="13.93" height="21.09" fill="#f76018"/><rect x="894.91" y="460.35" width="13.93" height="21.09" fill="#f76118"/><rect x="908.84" y="460.35" width="13.93" height="21.09" fill="#f76118"/><rect x="922.76" y="460.35" width="13.93" height="21.09" fill="#f76118"/><rect x="936.69" y="460.35" width="13.93" height="21.09" fill="#f76118"/><rect x="950.62" y="460.35" width="13.93" height="21.09" fill="#f65f18"/><rect x="964.55" y="460.35" width="13.93" height="21.09" fill="#f65f18"/><rect x="978.48" y="460.35" width="13.93" height="21.09" fill="#f76018"/><rect x="992.40" y="460.35" width="13.93" height="21.09" fill="#f76018"/><rect x="1006.33" y="460.35" width="13.93" height="21.09" fill="#f45c17"/><rect x="1020.26" y="460.35" width="13.93" height="21.09" fill="#f45c17"/><rect x="1034.19" y="460.35" width="13.81" height="21.09" fill="#f35a17"/><rect x="41.80" y="481.44" width="3.50" height="21.09" fill="#db3d11"/><rect x="45.30" y="481.44" width="13.93" height="21.09" fill="#db3d10"/><rect x="59.23" y="481.44" width="13.93" height="21.09" fill="#dc3e11"/><rect x="73.16" y="481.44" width="13.93" height="21.09" fill="#dd4011"/><rect x="87.08" y="481.44" width="13.93" height="21.09" fill="#df4212"/><rect x="101.01" y="481.44" width="13.93" height="21.09" fill="#df4111"/><rect x="114.94" y="481.44" width="13.93" height="21.09" fill="#dd3f11"/><rect x="128.87" y="481.44" width="13.93" height="21.09" fill="#dd4011"/><rect x="142.80" y="481.44" width="13.93" height="21.09" fill="#dd3f11"/><rect x="156.72" y="481.44" width="13.93" height="21.09" fill="#dc3f11"/><rect x="170.65" y="481.44" width="13.93" height="21.09" fill="#da3d10"/><rect x="184.58" y="481.44" width="13.93" height="21.09" fill="#da3c10"/><rect x="198.51" y="481.44" width="13.93" height="21.09" fill="#db3e11"/><rect x="212.44" y="481.44" width="13.93" height="21.09" fill="#dc3e11"/><rect x="226.36" y="481.44" width="13.93" height="21.09" fill="#de4011"/><rect x="240.29" y="481.44" width="13.93" height="21.09" fill="#df4111"/><rect x="254.22" y="481.44" width="13.93" height="21.09" fill="#df4112"/><rect x="268.15" y="481.44" width="13.93" height="21.09" fill="#e14312"/><rect x="282.08" y="481.44" width="13.93" height="21.09" fill="#e24412"/><rect x="296.00" y="481.44" width="13.93" height="21.09" fill="#e04312"/><rect x="309.93" y="481.44" width="13.93" height="21.09" fill="#df4111"/><rect x="323.86" y="481.44" width="13.93" height="21.09" fill="#e14312"/><rect x="337.79" y="481.44" width="13.93" height="21.09" fill="#e04212"/><rect x="351.72" y="481.44" width="13.93" height="21.09" fill="#e04312"/><rect x="365.64" y="481.44" width="13.93" height="21.09" fill="#df4212"/><rect x="379.57" y="481.44" width="13.93" height="21.09" fill="#e04312"/><rect x="393.50" y="481.44" width="13.93" height="21.09" fill="#df4112"/><rect x="407.43" y="481.44" width="13.93" height="21.09" fill="#e04212"/><rect x="421.36" y="481.44" width="13.93" height="21.09" fill="#e34512"/><rect x="435.28" y="481.44" width="13.93" height="21.09" fill="#e24512"/><rect x="449.21" y="481.44" width="13.93" height="21.09" fill="#e14412"/><rect x="463.14" y="481.44" width="13.93" height="21.09" fill="#e14412"/><rect x="477.07" y="481.44" width="13.93" height="21.09" fill="#e04312"/><rect x="491.00" y="481.44" width="13.93" height="21.09" fill="#de4011"/><rect x="504.92" y="481.44" width="13.93" height="21.09" fill="#df4111"/><rect x="518.85" y="481.44" width="13.93" height="21.09" fill="#de4111"/><rect x="532.78" y="481.44" width="13.93" height="21.09" fill="#dd3f11"/><rect x="546.71" y="481.44" width="13.93" height="21.09" fill="#de4011"/><rect x="560.64" y="481.44" width="13.93" height="21.09" fill="#de4011"/><rect x="574.56" y="481.44" width="13.93" height="21.09" fill="#de4111"/><rect x="588.49" y="481.44" width="13.93" height="21.09" fill="#df4212"/><rect x="602.42" y="481.44" width="13.93" height="21.09" fill="#e04312"/><rect x="616.35" y="481.44" width="13.93" height="21.09" fill="#df4212"/><rect x="630.28" y="481.44" width="13.93" height="21.09" fill="#df4112"/><rect x="644.20" y="481.44" width="13.93" height="21.09" fill="#de4011"/><rect x="658.13" y="481.44" width="13.93" height="21.09" fill="#de4111"/><rect x="672.06" y="481.44" width="13.93" height="21.09" fill="#df4112"/><rect x="685.99" y="481.44" width="13.93" height="21.09" fill="#df4212"/><rect x="699.92" y="481.44" width="13.93" height="21.09" fill="#e14412"/><rect x="713.84" y="481.44" width="13.93" height="21.09" fill="#e14312"/><rect x="727.77" y="481.44" width="13.93" height="21.09" fill="#e14412"/><rect x="741.70" y="481.44" width="13.93" height="21.09" fill="#e24512"/><rect x="755.63" y="481.44" width="13.93" height="21.09" fill="#e14312"/><rect x="769.56" y="481.44" width="13.93" height="21.09" fill="#df4111"/><rect x="783.48" y="481.44" width="13.93" height="21.09" fill="#df4111"/><rect x="797.41" y="481.44" width="13.93" height="21.09" fill="#e04212"/><rect x="811.34" y="481.44" width="13.93" height="21.09" fill="#e14412"/><rect x="825.27" y="481.44" width="13.93" height="21.09" fill="#e04212"/><rect x="839.20" y="481.44" width="13.93" height="21.09" fill="#e14412"/><rect x="853.12" y="481.44" width="13.93" height="21.09" fill="#e24412"/><rect x="867.05" y="481.44" width="13.93" height="21.09" fill="#e14412"/><rect x="880.98" y="481.44" width="13.93" height="21.09" fill="#e04212"/><rect x="894.91" y="481.44" width="13.93" height="21.09" fill="#dd4011"/><rect x="908.84" y="481.44" width="13.93" height="21.09" fill="#de4011"/><rect x="922.76" y="481.44" width="13.93" height="21.09" fill="#df4212"/><rect x="936.69" y="481.44" width="13.93" height="21.09" fill="#e14412"/><rect x="950.62" y="481.44" width="13.93" height="21.09" fill="#df4111"/><rect x="964.55" y="481.44" width="13.93" height="21.09" fill="#dd3f11"/><rect x="978.48" y="481.44" width="13.93" height="21.09" fill="#dd3f11"/><rect x="992.40" y="481.44" width="13.93" height="21.09" fill="#dd3f11"/><rect x="1006.33" y="481.44" width="13.93" height="21.09" fill="#dc3f11"/><rect x="1020.26" y="481.44" width="13.93" height="21.09" fill="#dc3e11"/><rect x="1034.19" y="481.44" width="13.81" height="21.09" fill="#dd4011"/><rect x="41.80" y="502.53" width="3.50" height="21.09" fill="#c3280b"/><rect x="45.30" y="502.53" width="13.93" height="21.09" fill="#c2280a"/><rect x="59.23" y="502.53" width="13.93" height="21.09" fill="#c4290b"/><rect x="73.16" y="502.53" width="13.93" height="21.09" fill="#c2270a"/><rect x="87.08" y="502.53" width="13.93" height="21.09" fill="#c2280b"/><rect x="101.01" y="502.53" width="13.93" height="21.09" fill="#c3280b"/><rect x="114.94" y="502.53" width="13.93" height="21.09" fill="#c3280b"/><rect x="128.87" y="502.53" width="13.93" height="21.09" fill="#c2270a"/><rect x="142.80" y="502.53" width="13.93" height="21.09" fill="#c1270a"/><rect x="156.72" y="502.53" width="13.93" height="21.09" fill="#c2270a"/><rect x="170.65" y="502.53" width="13.93" height="21.09" fill="#c2270a"/><rect x="184.58" y="502.53" width="13.93" height="21.09" fill="#c1270a"/><rect x="198.51" y="502.53" width="13.93" height="21.09" fill="#c1260a"/><rect x="212.44" y="502.53" width="13.93" height="21.09" fill="#c1270a"/><rect x="226.36" y="502.53" width="13.93" height="21.09" fill="#c1260a"/><rect x="240.29" y="502.53" width="13.93" height="21.09" fill="#c1260a"/><rect x="254.22" y="502.53" width="13.93" height="21.09" fill="#c1260a"/><rect x="268.15" y="502.53" width="13.93" height="21.09" fill="#c1270a"/><rect x="282.08" y="502.53" width="13.93" height="21.09" fill="#c1270a"/><rect x="296.00" y="502.53" width="13.93" height="21.09" fill="#c2270a"/><rect x="309.93" y="502.53" width="13.93" height="21.09" fill="#c1270a"/><rect x="323.86" y="502.53" width="13.93" height="21.09" fill="#c2280b"/><rect x="337.79" y="502.53" width="13.93" height="21.09" fill="#c3280b"/><rect x="351.72" y="502.53" width="13.93" height="21.09" fill="#c1270a"/><rect x="365.64" y="502.53" width="13.93" height="21.09" fill="#c1270a"/><rect x="379.57" y="502.53" width="13.93" height="21.09" fill="#c1270a"/><rect x="393.50" y="502.53" width="13.93" height="21.09" fill="#c1270a"/><rect x="407.43" y="502.53" width="13.93" height="21.09" fill="#c1270a"/><rect x="421.36" y="502.53" width="13.93" height="21.09" fill="#c0260a"/><rect x="435.28" y="502.53" width="13.93" height="21.09" fill="#c0260a"/><rect x="449.21" y="502.53" width="13.93" height="21.09" fill="#c0260a"/><rect x="463.14" y="502.53" width="13.93" height="21.09" fill="#c0260a"/><rect x="477.07" y="502.53" width="13.93" height="21.09" fill="#c0260a"/><rect x="491.00" y="502.53" width="13.93" height="21.09" fill="#bf250a"/><rect x="504.92" y="502.53" width="13.93" height="21.09" fill="#c0260a"/><rect x="518.85" y="502.53" width="13.93" height="21.09" fill="#bf250a"/><rect x="532.78" y="502.53" width="13.93" height="21.09" fill="#c0260a"/><rect x="546.71" y="502.53" width="13.93" height="21.09" fill="#bf250a"/><rect x="560.64" y="502.53" width="13.93" height="21.09" fill="#c1260a"/><rect x="574.56" y="502.53" width="13.93" height="21.09" fill="#c0260a"/><rect x="588.49" y="502.53" width="13.93" height="21.09" fill="#c0260a"/><rect x="602.42" y="502.53" width="13.93" height="21.09" fill="#c1270a"/><rect x="616.35" y="502.53" width="13.93" height="21.09" fill="#c2270a"/><rect x="630.28" y="502.53" width="13.93" height="21.09" fill="#c2280a"/><rect x="644.20" y="502.53" width="13.93" height="21.09" fill="#c3280b"/><rect x="658.13" y="502.53" width="13.93" height="21.09" fill="#c2280b"/><rect x="672.06" y="502.53" width="13.93" height="21.09" fill="#c2280b"/><rect x="685.99" y="502.53" width="13.93" height="21.09" fill="#c2270a"/><rect x="699.92" y="502.53" width="13.93" height="21.09" fill="#c1270a"/><rect x="713.84" y="502.53" width="13.93" height="21.09" fill="#c2270a"/><rect x="727.77" y="502.53" width="13.93" height="21.09" fill="#c3280b"/><rect x="741.70" y="502.53" width="13.93" height="21.09" fill="#c3290b"/><rect x="755.63" y="502.53" width="13.93" height="21.09" fill="#c3280b"/><rect x="769.56" y="502.53" width="13.93" height="21.09" fill="#c4290b"/><rect x="783.48" y="502.53" width="13.93" height="21.09" fill="#c2270a"/><rect x="797.41" y="502.53" width="13.93" height="21.09" fill="#c0260a"/><rect x="811.34" y="502.53" width="13.93" height="21.09" fill="#c1270a"/><rect x="825.27" y="502.53" width="13.93" height="21.09" fill="#c2270a"/><rect x="839.20" y="502.53" width="13.93" height="21.09" fill="#c2270a"/><rect x="853.12" y="502.53" width="13.93" height="21.09" fill="#c1270a"/><rect x="867.05" y="502.53" width="13.93" height="21.09" fill="#c3280b"/><rect x="880.98" y="502.53" width="13.93" height="21.09" fill="#c3280b"/><rect x="894.91" y="502.53" width="13.93" height="21.09" fill="#c2280a"/><rect x="908.84" y="502.53" width="13.93" height="21.09" fill="#c2280a"/><rect x="922.76" y="502.53" width="13.93" height="21.09" fill="#c2280b"/><rect x="936.69" y="502.53" width="13.93" height="21.09" fill="#c3280b"/><rect x="950.62" y="502.53" width="13.93" height="21.09" fill="#c2280b"/><rect x="964.55" y="502.53" width="13.93" height="21.09" fill="#c2280b"/><rect x="978.48" y="502.53" width="13.93" height="21.09" fill="#c2270a"/><rect x="992.40" y="502.53" width="13.93" height="21.09" fill="#c2280a"/><rect x="1006.33" y="502.53" width="13.93" height="21.09" fill="#c2270a"/><rect x="1020.26" y="502.53" width="13.93" height="21.09" fill="#c2280b"/><rect x="1034.19" y="502.53" width="13.81" height="21.09" fill="#c2270a"/><rect x="41.80" y="523.62" width="3.50" height="21.09" fill="#bd2409"/><rect x="45.30" y="523.62" width="13.93" height="21.09" fill="#be2409"/><rect x="59.23" y="523.62" width="13.93" height="21.09" fill="#bd2309"/><rect x="73.16" y="523.62" width="13.93" height="21.09" fill="#bc2309"/><rect x="87.08" y="523.62" width="13.93" height="21.09" fill="#bb2209"/><rect x="101.01" y="523.62" width="13.93" height="21.09" fill="#bb2309"/><rect x="114.94" y="523.62" width="13.93" height="21.09" fill="#ba2208"/><rect x="128.87" y="523.62" width="13.93" height="21.09" fill="#ba2209"/><rect x="142.80" y="523.62" width="13.93" height="21.09" fill="#b92108"/><rect x="156.72" y="523.62" width="13.93" height="21.09" fill="#ba2108"/><rect x="170.65" y="523.62" width="13.93" height="21.09" fill="#b92108"/><rect x="184.58" y="523.62" width="13.93" height="21.09" fill="#b92108"/><rect x="198.51" y="523.62" width="13.93" height="21.09" fill="#b92108"/><rect x="212.44" y="523.62" width="13.93" height="21.09" fill="#ba2108"/><rect x="226.36" y="523.62" width="13.93" height="21.09" fill="#b92108"/><rect x="240.29" y="523.62" width="13.93" height="21.09" fill="#ba2108"/><rect x="254.22" y="523.62" width="13.93" height="21.09" fill="#b92108"/><rect x="268.15" y="523.62" width="13.93" height="21.09" fill="#ba2108"/><rect x="282.08" y="523.62" width="13.93" height="21.09" fill="#b92108"/><rect x="296.00" y="523.62" width="13.93" height="21.09" fill="#ba2108"/><rect x="309.93" y="523.62" width="13.93" height="21.09" fill="#ba2208"/><rect x="323.86" y="523.62" width="13.93" height="21.09" fill="#ba2108"/><rect x="337.79" y="523.62" width="13.93" height="21.09" fill="#b92108"/><rect x="351.72" y="523.62" width="13.93" height="21.09" fill="#b92108"/><rect x="365.64" y="523.62" width="13.93" height="21.09" fill="#ba2108"/><rect x="379.57" y="523.62" width="13.93" height="21.09" fill="#b92108"/><rect x="393.50" y="523.62" width="13.93" height="21.09" fill="#b92008"/><rect x="407.43" y="523.62" width="13.93" height="21.09" fill="#b92108"/><rect x="421.36" y="523.62" width="13.93" height="21.09" fill="#b92108"/><rect x="435.28" y="523.62" width="13.93" height="21.09" fill="#b92008"/><rect x="449.21" y="523.62" width="13.93" height="21.09" fill="#b82008"/><rect x="463.14" y="523.62" width="13.93" height="21.09" fill="#b82008"/><rect x="477.07" y="523.62" width="13.93" height="21.09" fill="#b72008"/><rect x="491.00" y="523.62" width="13.93" height="21.09" fill="#b72008"/><rect x="504.92" y="523.62" width="13.93" height="21.09" fill="#b71f08"/><rect x="518.85" y="523.62" width="13.93" height="21.09" fill="#b72008"/><rect x="532.78" y="523.62" width="13.93" height="21.09" fill="#b71f08"/><rect x="546.71" y="523.62" width="13.93" height="21.09" fill="#b61f07"/><rect x="560.64" y="523.62" width="13.93" height="21.09" fill="#b61f07"/><rect x="574.56" y="523.62" width="13.93" height="21.09" fill="#b61f07"/><rect x="588.49" y="523.62" width="13.93" height="21.09" fill="#b61f07"/><rect x="602.42" y="523.62" width="13.93" height="21.09" fill="#b61f07"/><rect x="616.35" y="523.62" width="13.93" height="21.09" fill="#b61f07"/><rect x="630.28" y="523.62" width="13.93" height="21.09" fill="#b61f07"/><rect x="644.20" y="523.62" width="13.93" height="21.09" fill="#b51e07"/><rect x="658.13" y="523.62" width="13.93" height="21.09" fill="#b61f07"/><rect x="672.06" y="523.62" width="13.93" height="21.09" fill="#b71f08"/><rect x="685.99" y="523.62" width="13.93" height="21.09" fill="#b61f07"/><rect x="699.92" y="523.62" width="13.93" height="21.09" fill="#b61e07"/><rect x="713.84" y="523.62" width="13.93" height="21.09" fill="#b61f07"/><rect x="727.77" y="523.62" width="13.93" height="21.09" fill="#b61f07"/><rect x="741.70" y="523.62" width="13.93" height="21.09" fill="#b51e07"/><rect x="755.63" y="523.62" width="13.93" height="21.09" fill="#b51e07"/><rect x="769.56" y="523.62" width="13.93" height="21.09" fill="#b51e07"/><rect x="783.48" y="523.62" width="13.93" height="21.09" fill="#b51e07"/><rect x="797.41" y="523.62" width="13.93" height="21.09" fill="#b51e07"/><rect x="811.34" y="523.62" width="13.93" height="21.09" fill="#b51e07"/><rect x="825.27" y="523.62" width="13.93" height="21.09" fill="#b51e07"/><rect x="839.20" y="523.62" width="13.93" height="21.09" fill="#b51e07"/><rect x="853.12" y="523.62" width="13.93" height="21.09" fill="#b51e07"/><rect x="867.05" y="523.62" width="13.93" height="21.09" fill="#b82008"/><rect x="880.98" y="523.62" width="13.93" height="21.09" fill="#b92108"/><rect x="894.91" y="523.62" width="13.93" height="21.09" fill="#ba2108"/><rect x="908.84" y="523.62" width="13.93" height="21.09" fill="#ba2108"/><rect x="922.76" y="523.62" width="13.93" height="21.09" fill="#ba2108"/><rect x="936.69" y="523.62" width="13.93" height="21.09" fill="#ba2108"/><rect x="950.62" y="523.62" width="13.93" height="21.09" fill="#ba2108"/><rect x="964.55" y="523.62" width="13.93" height="21.09" fill="#b92108"/><rect x="978.48" y="523.62" width="13.93" height="21.09" fill="#ba2108"/><rect x="992.40" y="523.62" width="13.93" height="21.09" fill="#ba2108"/><rect x="1006.33" y="523.62" width="13.93" height="21.09" fill="#ba2108"/><rect x="1020.26" y="523.62" width="13.93" height="21.09" fill="#ba2108"/><rect x="1034.19" y="523.62" width="13.81" height="21.09" fill="#ba2108"/><rect x="41.80" y="544.71" width="3.50" height="21.09" fill="#ac1805"/><rect x="45.30" y="544.71" width="13.93" height="21.09" fill="#ad1905"/><rect x="59.23" y="544.71" width="13.93" height="21.09" fill="#ad1905"/><rect x="73.16" y="544.71" width="13.93" height="21.09" fill="#ac1805"/><rect x="87.08" y="544.71" width="13.93" height="21.09" fill="#ad1905"/><rect x="101.01" y="544.71" width="13.93" height="21.09" fill="#ad1905"/><rect x="114.94" y="544.71" width="13.93" height="21.09" fill="#ad1905"/><rect x="128.87" y="544.71" width="13.93" height="21.09" fill="#ad1905"/><rect x="142.80" y="544.71" width="13.93" height="21.09" fill="#ad1905"/><rect x="156.72" y="544.71" width="13.93" height="21.09" fill="#ad1905"/><rect x="170.65" y="544.71" width="13.93" height="21.09" fill="#ad1905"/><rect x="184.58" y="544.71" width="13.93" height="21.09" fill="#ad1905"/><rect x="198.51" y="544.71" width="13.93" height="21.09" fill="#ad1905"/><rect x="212.44" y="544.71" width="13.93" height="21.09" fill="#ac1805"/><rect x="226.36" y="544.71" width="13.93" height="21.09" fill="#ac1805"/><rect x="240.29" y="544.71" width="13.93" height="21.09" fill="#ad1905"/><rect x="254.22" y="544.71" width="13.93" height="21.09" fill="#ac1805"/><rect x="268.15" y="544.71" width="13.93" height="21.09" fill="#ac1805"/><rect x="282.08" y="544.71" width="13.93" height="21.09" fill="#ac1805"/><rect x="296.00" y="544.71" width="13.93" height="21.09" fill="#ac1805"/><rect x="309.93" y="544.71" width="13.93" height="21.09" fill="#ac1805"/><rect x="323.86" y="544.71" width="13.93" height="21.09" fill="#ac1805"/><rect x="337.79" y="544.71" width="13.93" height="21.09" fill="#ab1805"/><rect x="351.72" y="544.71" width="13.93" height="21.09" fill="#ab1805"/><rect x="365.64" y="544.71" width="13.93" height="21.09" fill="#ac1805"/><rect x="379.57" y="544.71" width="13.93" height="21.09" fill="#ac1805"/><rect x="393.50" y="544.71" width="13.93" height="21.09" fill="#ab1805"/><rect x="407.43" y="544.71" width="13.93" height="21.09" fill="#ab1805"/><rect x="421.36" y="544.71" width="13.93" height="21.09" fill="#ac1805"/><rect x="435.28" y="544.71" width="13.93" height="21.09" fill="#ac1805"/><rect x="449.21" y="544.71" width="13.93" height="21.09" fill="#ac1805"/><rect x="463.14" y="544.71" width="13.93" height="21.09" fill="#ac1805"/><rect x="477.07" y="544.71" width="13.93" height="21.09" fill="#ac1805"/><rect x="491.00" y="544.71" width="13.93" height="21.09" fill="#ac1805"/><rect x="504.92" y="544.71" width="13.93" height="21.09" fill="#ac1805"/><rect x="518.85" y="544.71" width="13.93" height="21.09" fill="#ac1805"/><rect x="532.78" y="544.71" width="13.93" height="21.09" fill="#ac1805"/><rect x="546.71" y="544.71" width="13.93" height="21.09" fill="#ac1805"/><rect x="560.64" y="544.71" width="13.93" height="21.09" fill="#ac1805"/><rect x="574.56" y="544.71" width="13.93" height="21.09" fill="#ab1805"/><rect x="588.49" y="544.71" width="13.93" height="21.09" fill="#ac1805"/><rect x="602.42" y="544.71" width="13.93" height="21.09" fill="#ab1805"/><rect x="616.35" y="544.71" width="13.93" height="21.09" fill="#ac1805"/><rect x="630.28" y="544.71" width="13.93" height="21.09" fill="#ac1805"/><rect x="644.20" y="544.71" width="13.93" height="21.09" fill="#ac1805"/><rect x="658.13" y="544.71" width="13.93" height="21.09" fill="#ab1805"/><rect x="672.06" y="544.71" width="13.93" height="21.09" fill="#ac1805"/><rect x="685.99" y="544.71" width="13.93" height="21.09" fill="#ac1805"/><rect x="699.92" y="544.71" width="13.93" height="21.09" fill="#ac1805"/><rect x="713.84" y="544.71" width="13.93" height="21.09" fill="#ac1805"/><rect x="727.77" y="544.71" width="13.93" height="21.09" fill="#ac1805"/><rect x="741.70" y="544.71" width="13.93" height="21.09" fill="#ac1805"/><rect x="755.63" y="544.71" width="13.93" height="21.09" fill="#ac1805"/><rect x="769.56" y="544.71" width="13.93" height="21.09" fill="#ac1805"/><rect x="783.48" y="544.71" width="13.93" height="21.09" fill="#ac1805"/><rect x="797.41" y="544.71" width="13.93" height="21.09" fill="#ac1805"/><rect x="811.34" y="544.71" width="13.93" height="21.09" fill="#ac1805"/><rect x="825.27" y="544.71" width="13.93" height="21.09" fill="#ac1805"/><rect x="839.20" y="544.71" width="13.93" height="21.09" fill="#ac1805"/><rect x="853.12" y="544.71" width="13.93" height="21.09" fill="#ac1805"/><rect x="867.05" y="544.71" width="13.93" height="21.09" fill="#ac1805"/><rect x="880.98" y="544.71" width="13.93" height="21.09" fill="#ad1805"/><rect x="894.91" y="544.71" width="13.93" height="21.09" fill="#ac1805"/><rect x="908.84" y="544.71" width="13.93" height="21.09" fill="#ac1805"/><rect x="922.76" y="544.71" width="13.93" height="21.09" fill="#ac1805"/><rect x="936.69" y="544.71" width="13.93" height="21.09" fill="#ac1805"/><rect x="950.62" y="544.71" width="13.93" height="21.09" fill="#ac1805"/><rect x="964.55" y="544.71" width="13.93" height="21.09" fill="#ac1805"/><rect x="978.48" y="544.71" width="13.93" height="21.09" fill="#ac1805"/><rect x="992.40" y="544.71" width="13.93" height="21.09" fill="#ac1805"/><rect x="1006.33" y="544.71" width="13.93" height="21.09" fill="#ac1805"/><rect x="1020.26" y="544.71" width="13.93" height="21.09" fill="#ac1805"/><rect x="1034.19" y="544.71" width="13.81" height="21.09" fill="#ac1805"/></g><line x1="45.30" y1="333.8" x2="45.30" y2="565.8" stroke="#151518" stroke-width="1.25" stroke-opacity="0.9"/><line x1="59.23" y1="333.8" x2="59.23" y2="565.8" stroke="#151518" stroke-width="1.25" stroke-opacity="0.9"/><line x1="73.16" y1="333.8" x2="73.16" y2="565.8" stroke="#151518" stroke-width="1.25" stroke-opacity="0.9"/><line x1="87.08" y1="333.8" x2="87.08" y2="565.8" stroke="#151518" stroke-width="1.25" stroke-opacity="0.9"/><line x1="101.01" y1="333.8" x2="101.01" y2="565.8" stroke="#151518" stroke-width="1.25" stroke-opacity="0.9"/><line x1="114.94" y1="333.8" x2="114.94" y2="565.8" stroke="#151518" stroke-width="1.25" stroke-opacity="0.9"/><line x1="128.87" y1="333.8" x2="128.87" y2="565.8" stroke="#151518" stroke-width="1.25" stroke-opacity="0.9"/><line x1="142.80" y1="333.8" x2="142.80" y2="565.8" stroke="#151518" stroke-width="1.25" stroke-opacity="0.9"/><line x1="156.72" y1="333.8" x2="156.72" y2="565.8" stroke="#151518" stroke-width="1.25" stroke-opacity="0.9"/><line x1="170.65" y1="333.8" x2="170.65" y2="565.8" stroke="#151518" stroke-width="1.25" stroke-opacity="0.9"/><line x1="184.58" y1="333.8" x2="184.58" y2="565.8" stroke="#151518" stroke-width="1.25" stroke-opacity="0.9"/><line x1="198.51" y1="333.8" x2="198.51" y2="565.8" stroke="#151518" stroke-width="1.25" stroke-opacity="0.9"/><line x1="212.44" y1="333.8" x2="212.44" y2="565.8" stroke="#151518" stroke-width="1.25" stroke-opacity="0.9"/><line x1="226.36" y1="333.8" x2="226.36" y2="565.8" stroke="#151518" stroke-width="1.25" stroke-opacity="0.9"/><line x1="240.29" y1="333.8" x2="240.29" y2="565.8" stroke="#151518" stroke-width="1.25" stroke-opacity="0.9"/><line x1="254.22" y1="333.8" x2="254.22" y2="565.8" stroke="#151518" stroke-width="1.25" stroke-opacity="0.9"/><line x1="268.15" y1="333.8" x2="268.15" y2="565.8" stroke="#151518" stroke-width="1.25" stroke-opacity="0.9"/><line x1="282.08" y1="333.8" x2="282.08" y2="565.8" stroke="#151518" stroke-width="1.25" stroke-opacity="0.9"/><line x1="296.00" y1="333.8" x2="296.00" y2="565.8" stroke="#151518" stroke-width="1.25" stroke-opacity="0.9"/><line x1="309.93" y1="333.8" x2="309.93" y2="565.8" stroke="#151518" stroke-width="1.25" stroke-opacity="0.9"/><line x1="323.86" y1="333.8" x2="323.86" y2="565.8" stroke="#151518" stroke-width="1.25" stroke-opacity="0.9"/><line x1="337.79" y1="333.8" x2="337.79" y2="565.8" stroke="#151518" stroke-width="1.25" stroke-opacity="0.9"/><line x1="351.72" y1="333.8" x2="351.72" y2="565.8" stroke="#151518" stroke-width="1.25" stroke-opacity="0.9"/><line x1="365.64" y1="333.8" x2="365.64" y2="565.8" stroke="#151518" stroke-width="1.25" stroke-opacity="0.9"/><line x1="379.57" y1="333.8" x2="379.57" y2="565.8" stroke="#151518" stroke-width="1.25" stroke-opacity="0.9"/><line x1="393.50" y1="333.8" x2="393.50" y2="565.8" stroke="#151518" stroke-width="1.25" stroke-opacity="0.9"/><line x1="407.43" y1="333.8" x2="407.43" y2="565.8" stroke="#151518" stroke-width="1.25" stroke-opacity="0.9"/><line x1="421.36" y1="333.8" x2="421.36" y2="565.8" stroke="#151518" stroke-width="1.25" stroke-opacity="0.9"/><line x1="435.28" y1="333.8" x2="435.28" y2="565.8" stroke="#151518" stroke-width="1.25" stroke-opacity="0.9"/><line x1="449.21" y1="333.8" x2="449.21" y2="565.8" stroke="#151518" stroke-width="1.25" stroke-opacity="0.9"/><line x1="463.14" y1="333.8" x2="463.14" y2="565.8" stroke="#151518" stroke-width="1.25" stroke-opacity="0.9"/><line x1="477.07" y1="333.8" x2="477.07" y2="565.8" stroke="#151518" stroke-width="1.25" stroke-opacity="0.9"/><line x1="491.00" y1="333.8" x2="491.00" y2="565.8" stroke="#151518" stroke-width="1.25" stroke-opacity="0.9"/><line x1="504.92" y1="333.8" x2="504.92" y2="565.8" stroke="#151518" stroke-width="1.25" stroke-opacity="0.9"/><line x1="518.85" y1="333.8" x2="518.85" y2="565.8" stroke="#151518" stroke-width="1.25" stroke-opacity="0.9"/><line x1="532.78" y1="333.8" x2="532.78" y2="565.8" stroke="#151518" stroke-width="1.25" stroke-opacity="0.9"/><line x1="546.71" y1="333.8" x2="546.71" y2="565.8" stroke="#151518" stroke-width="1.25" stroke-opacity="0.9"/><line x1="560.64" y1="333.8" x2="560.64" y2="565.8" stroke="#151518" stroke-width="1.25" stroke-opacity="0.9"/><line x1="574.56" y1="333.8" x2="574.56" y2="565.8" stroke="#151518" stroke-width="1.25" stroke-opacity="0.9"/><line x1="588.49" y1="333.8" x2="588.49" y2="565.8" stroke="#151518" stroke-width="1.25" stroke-opacity="0.9"/><line x1="602.42" y1="333.8" x2="602.42" y2="565.8" stroke="#151518" stroke-width="1.25" stroke-opacity="0.9"/><line x1="616.35" y1="333.8" x2="616.35" y2="565.8" stroke="#151518" stroke-width="1.25" stroke-opacity="0.9"/><line x1="630.28" y1="333.8" x2="630.28" y2="565.8" stroke="#151518" stroke-width="1.25" stroke-opacity="0.9"/><line x1="644.20" y1="333.8" x2="644.20" y2="565.8" stroke="#151518" stroke-width="1.25" stroke-opacity="0.9"/><line x1="658.13" y1="333.8" x2="658.13" y2="565.8" stroke="#151518" stroke-width="1.25" stroke-opacity="0.9"/><line x1="672.06" y1="333.8" x2="672.06" y2="565.8" stroke="#151518" stroke-width="1.25" stroke-opacity="0.9"/><line x1="685.99" y1="333.8" x2="685.99" y2="565.8" stroke="#151518" stroke-width="1.25" stroke-opacity="0.9"/><line x1="699.92" y1="333.8" x2="699.92" y2="565.8" stroke="#151518" stroke-width="1.25" stroke-opacity="0.9"/><line x1="713.84" y1="333.8" x2="713.84" y2="565.8" stroke="#151518" stroke-width="1.25" stroke-opacity="0.9"/><line x1="727.77" y1="333.8" x2="727.77" y2="565.8" stroke="#151518" stroke-width="1.25" stroke-opacity="0.9"/><line x1="741.70" y1="333.8" x2="741.70" y2="565.8" stroke="#151518" stroke-width="1.25" stroke-opacity="0.9"/><line x1="755.63" y1="333.8" x2="755.63" y2="565.8" stroke="#151518" stroke-width="1.25" stroke-opacity="0.9"/><line x1="769.56" y1="333.8" x2="769.56" y2="565.8" stroke="#151518" stroke-width="1.25" stroke-opacity="0.9"/><line x1="783.48" y1="333.8" x2="783.48" y2="565.8" stroke="#151518" stroke-width="1.25" stroke-opacity="0.9"/><line x1="797.41" y1="333.8" x2="797.41" y2="565.8" stroke="#151518" stroke-width="1.25" stroke-opacity="0.9"/><line x1="811.34" y1="333.8" x2="811.34" y2="565.8" stroke="#151518" stroke-width="1.25" stroke-opacity="0.9"/><line x1="825.27" y1="333.8" x2="825.27" y2="565.8" stroke="#151518" stroke-width="1.25" stroke-opacity="0.9"/><line x1="839.20" y1="333.8" x2="839.20" y2="565.8" stroke="#151518" stroke-width="1.25" stroke-opacity="0.9"/><line x1="853.12" y1="333.8" x2="853.12" y2="565.8" stroke="#151518" stroke-width="1.25" stroke-opacity="0.9"/><line x1="867.05" y1="333.8" x2="867.05" y2="565.8" stroke="#151518" stroke-width="1.25" stroke-opacity="0.9"/><line x1="880.98" y1="333.8" x2="880.98" y2="565.8" stroke="#151518" stroke-width="1.25" stroke-opacity="0.9"/><line x1="894.91" y1="333.8" x2="894.91" y2="565.8" stroke="#151518" stroke-width="1.25" stroke-opacity="0.9"/><line x1="908.84" y1="333.8" x2="908.84" y2="565.8" stroke="#151518" stroke-width="1.25" stroke-opacity="0.9"/><line x1="922.76" y1="333.8" x2="922.76" y2="565.8" stroke="#151518" stroke-width="1.25" stroke-opacity="0.9"/><line x1="936.69" y1="333.8" x2="936.69" y2="565.8" stroke="#151518" stroke-width="1.25" stroke-opacity="0.9"/><line x1="950.62" y1="333.8" x2="950.62" y2="565.8" stroke="#151518" stroke-width="1.25" stroke-opacity="0.9"/><line x1="964.55" y1="333.8" x2="964.55" y2="565.8" stroke="#151518" stroke-width="1.25" stroke-opacity="0.9"/><line x1="978.48" y1="333.8" x2="978.48" y2="565.8" stroke="#151518" stroke-width="1.25" stroke-opacity="0.9"/><line x1="992.40" y1="333.8" x2="992.40" y2="565.8" stroke="#151518" stroke-width="1.25" stroke-opacity="0.9"/><line x1="1006.33" y1="333.8" x2="1006.33" y2="565.8" stroke="#151518" stroke-width="1.25" stroke-opacity="0.9"/><line x1="1020.26" y1="333.8" x2="1020.26" y2="565.8" stroke="#151518" stroke-width="1.25" stroke-opacity="0.9"/><line x1="1034.19" y1="333.8" x2="1034.19" y2="565.8" stroke="#151518" stroke-width="1.25" stroke-opacity="0.9"/><line x1="77.1" y1="333.8" x2="77.1" y2="565.8" stroke="#121215" stroke-width="1.9"/><line x1="41.8" y1="354.89" x2="1048.0" y2="354.89" stroke="#33302f" stroke-width="1" stroke-opacity="0.85"/><line x1="41.8" y1="375.98" x2="1048.0" y2="375.98" stroke="#33302f" stroke-width="1" stroke-opacity="0.85"/><line x1="41.8" y1="397.07" x2="1048.0" y2="397.07" stroke="#33302f" stroke-width="1" stroke-opacity="0.85"/><line x1="41.8" y1="418.16" x2="1048.0" y2="418.16" stroke="#33302f" stroke-width="1" stroke-opacity="0.85"/><line x1="41.8" y1="439.25" x2="1048.0" y2="439.25" stroke="#33302f" stroke-width="1" stroke-opacity="0.85"/><line x1="41.8" y1="460.35" x2="1048.0" y2="460.35" stroke="#33302f" stroke-width="1" stroke-opacity="0.85"/><line x1="41.8" y1="481.44" x2="1048.0" y2="481.44" stroke="#33302f" stroke-width="1" stroke-opacity="0.85"/><line x1="41.8" y1="502.53" x2="1048.0" y2="502.53" stroke="#33302f" stroke-width="1" stroke-opacity="0.85"/><line x1="41.8" y1="523.62" x2="1048.0" y2="523.62" stroke="#33302f" stroke-width="1" stroke-opacity="0.85"/><line x1="41.8" y1="544.71" x2="1048.0" y2="544.71" stroke="#33302f" stroke-width="1" stroke-opacity="0.85"/><text x="38.6" y="356.39" font-size="4.3" fill="#a4a5ac" text-anchor="end">t1</text><text x="38.6" y="377.48" font-size="4.3" fill="#a4a5ac" text-anchor="end">t2</text><text x="38.6" y="398.57" font-size="4.3" fill="#a4a5ac" text-anchor="end">t3</text><text x="38.6" y="419.66" font-size="4.3" fill="#a4a5ac" text-anchor="end">t4</text><text x="38.6" y="440.75" font-size="4.3" fill="#a4a5ac" text-anchor="end">t5</text><text x="38.6" y="461.85" font-size="4.3" fill="#a4a5ac" text-anchor="end">t6</text><text x="38.6" y="482.94" font-size="4.3" fill="#a4a5ac" text-anchor="end">t7</text><text x="38.6" y="504.03" font-size="4.3" fill="#a4a5ac" text-anchor="end">t8</text><text x="38.6" y="525.12" font-size="4.3" fill="#a4a5ac" text-anchor="end">t9</text><text x="38.6" y="546.21" font-size="4.3" fill="#a4a5ac" text-anchor="end">t10</text><text x="38.6" y="567.30" font-size="4.3" fill="#a4a5ac" text-anchor="end">t11</text><text x="56.90" y="574.4" font-size="5.1" fill="#8e8f96" text-anchor="middle">04/19 09:00</text><text x="98.78" y="574.4" font-size="5.1" fill="#8e8f96" text-anchor="middle">04/19 12:00</text><text x="140.66" y="574.4" font-size="5.1" fill="#8e8f96" text-anchor="middle">04/19 15:00</text><text x="182.54" y="574.4" font-size="5.1" fill="#8e8f96" text-anchor="middle">04/19 18:00</text><text x="224.42" y="574.4" font-size="5.1" fill="#8e8f96" text-anchor="middle">04/19 21:00</text><text x="266.30" y="574.4" font-size="5.1" fill="#8e8f96" text-anchor="middle">04/20 00:00</text><text x="308.18" y="574.4" font-size="5.1" fill="#8e8f96" text-anchor="middle">04/20 03:00</text><text x="350.06" y="574.4" font-size="5.1" fill="#8e8f96" text-anchor="middle">04/20 06:00</text><text x="391.94" y="574.4" font-size="5.1" fill="#8e8f96" text-anchor="middle">04/20 09:00</text><text x="433.82" y="574.4" font-size="5.1" fill="#8e8f96" text-anchor="middle">04/20 12:00</text><text x="475.70" y="574.4" font-size="5.1" fill="#8e8f96" text-anchor="middle">04/20 15:00</text><text x="517.58" y="574.4" font-size="5.1" fill="#8e8f96" text-anchor="middle">04/20 18:00</text><text x="559.46" y="574.4" font-size="5.1" fill="#8e8f96" text-anchor="middle">04/20 21:00</text><text x="601.34" y="574.4" font-size="5.1" fill="#8e8f96" text-anchor="middle">04/21 00:00</text><text x="643.22" y="574.4" font-size="5.1" fill="#8e8f96" text-anchor="middle">04/21 03:00</text><text x="685.10" y="574.4" font-size="5.1" fill="#8e8f96" text-anchor="middle">04/21 06:00</text><text x="726.98" y="574.4" font-size="5.1" fill="#8e8f96" text-anchor="middle">04/21 09:00</text><text x="768.86" y="574.4" font-size="5.1" fill="#8e8f96" text-anchor="middle">04/21 12:00</text><text x="810.74" y="574.4" font-size="5.1" fill="#8e8f96" text-anchor="middle">04/21 15:00</text><text x="852.62" y="574.4" font-size="5.1" fill="#8e8f96" text-anchor="middle">04/21 18:00</text><text x="894.50" y="574.4" font-size="5.1" fill="#8e8f96" text-anchor="middle">04/21 21:00</text><text x="936.38" y="574.4" font-size="5.1" fill="#8e8f96" text-anchor="middle">04/22 00:00</text><text x="978.26" y="574.4" font-size="5.1" fill="#8e8f96" text-anchor="middle">04/22 03:00</text><text x="1020.14" y="574.4" font-size="5.1" fill="#8e8f96" text-anchor="middle">04/22 06:00</text><defs><linearGradient id="tg" x1="0" x2="1" y1="0" y2="0"><stop offset="0.00" stop-color="#23171b"/><stop offset="0.05" stop-color="#463699"/><stop offset="0.10" stop-color="#4958dd"/><stop offset="0.15" stop-color="#3e7bf7"/><stop offset="0.20" stop-color="#2f9ef5"/><stop offset="0.25" stop-color="#26bde1"/><stop offset="0.30" stop-color="#27d7c3"/><stop offset="0.35" stop-color="#35eba2"/><stop offset="0.40" stop-color="#4ef983"/><stop offset="0.45" stop-color="#6ffe67"/><stop offset="0.50" stop-color="#96fa50"/><stop offset="0.55" stop-color="#bdef3e"/><stop offset="0.60" stop-color="#dfdc32"/><stop offset="0.65" stop-color="#f9c229"/><stop offset="0.70" stop-color="#ffa323"/><stop offset="0.75" stop-color="#ff801d"/><stop offset="0.80" stop-color="#f45c17"/><stop offset="0.85" stop-color="#d93b10"/><stop offset="0.90" stop-color="#b82008"/><stop offset="0.95" stop-color="#9b0f00"/><stop offset="1.00" stop-color="#900d00"/></linearGradient><linearGradient id="lg" x1="0" x2="0" y1="0" y2="1"><stop offset="0" stop-color="#f05a28"/><stop offset="1" stop-color="#fbca0a"/></linearGradient></defs><rect x="47.7" y="577.2" width="114.5" height="1.8" fill="url(#tg)"/><text x="42.8" y="584.3" font-size="5.1" fill="#8e8f96" text-anchor="middle">0.0</text><text x="57.7" y="584.3" font-size="5.1" fill="#8e8f96" text-anchor="middle">0.5</text><text x="72.7" y="584.3" font-size="5.1" fill="#8e8f96" text-anchor="middle">1.0</text><text x="102.6" y="584.3" font-size="5.1" fill="#8e8f96" text-anchor="middle">2.0</text><text x="132.4" y="584.3" font-size="5.1" fill="#8e8f96" text-anchor="middle">3.0</text><text x="162.2" y="584.3" font-size="5.1" fill="#8e8f96" text-anchor="middle">4.0</text></svg></body></html>
